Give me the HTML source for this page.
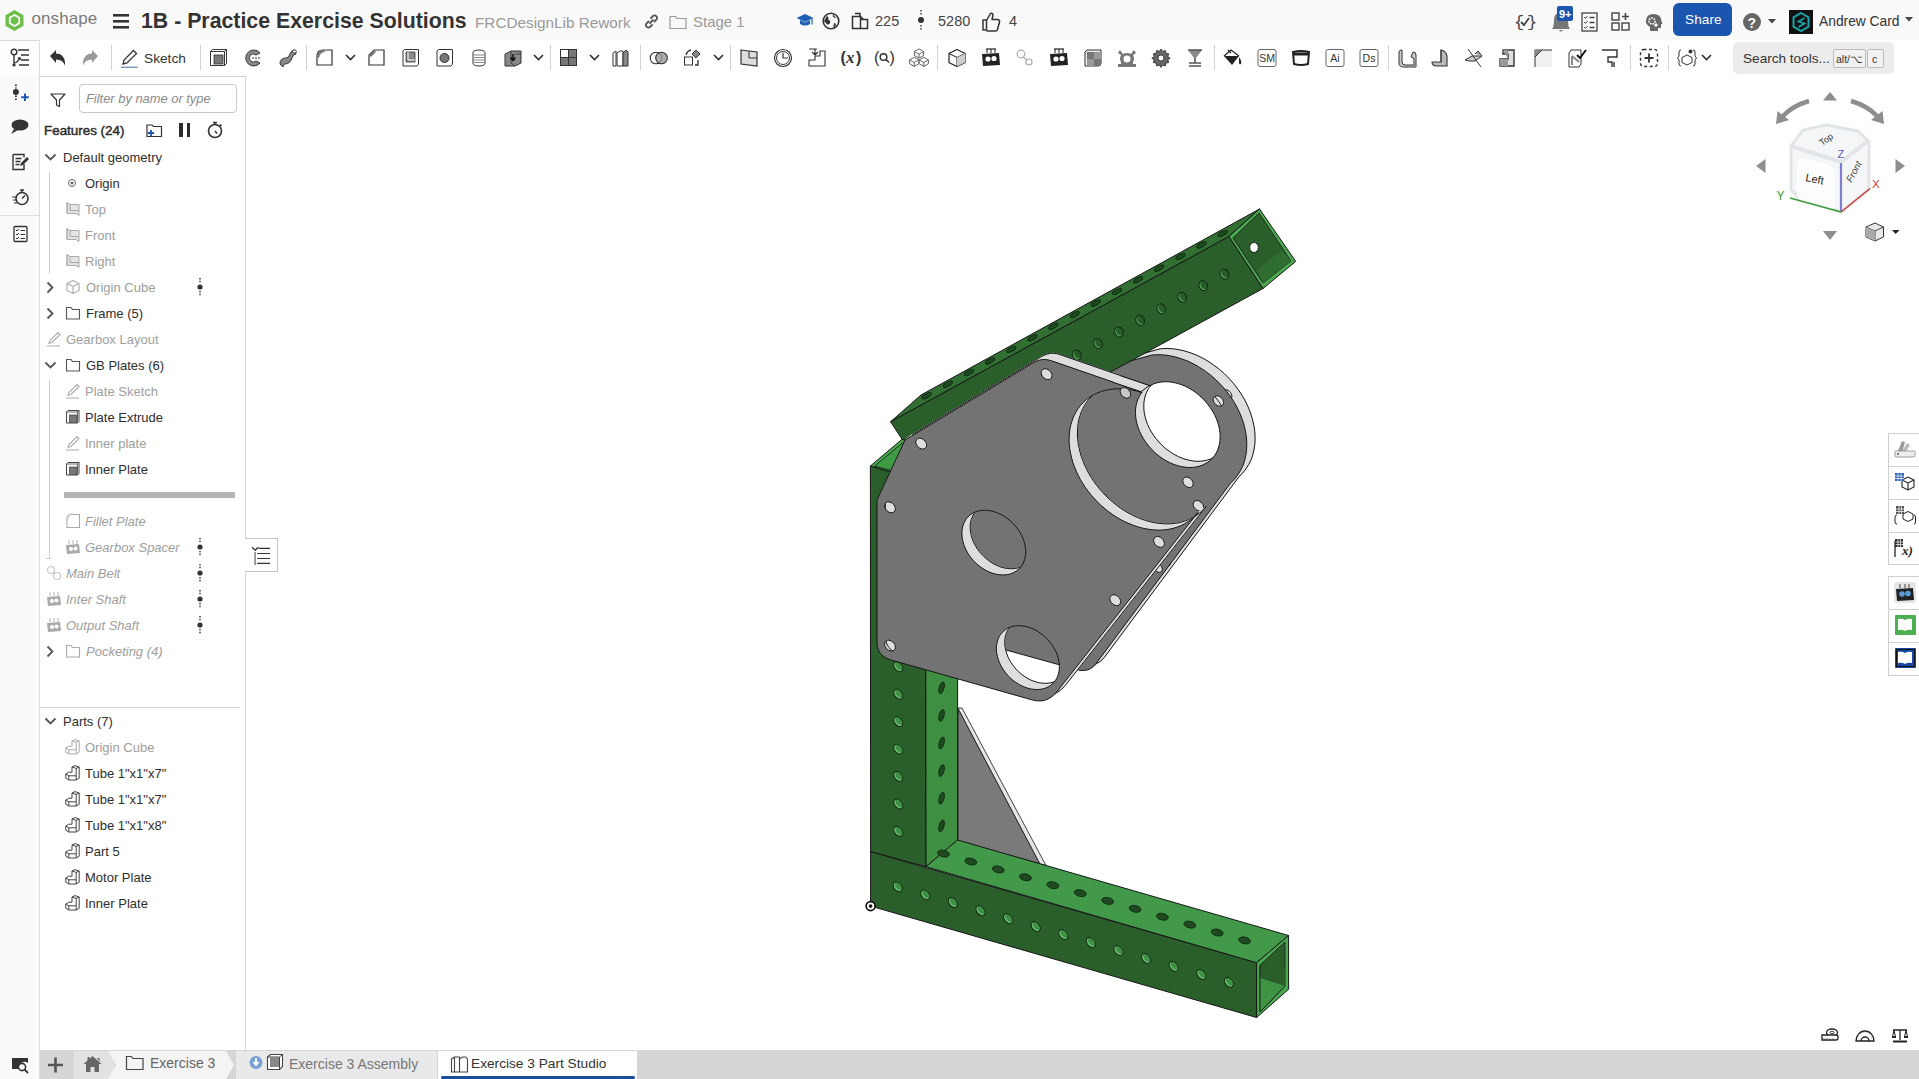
<!DOCTYPE html>
<html><head><meta charset="utf-8">
<style>
*{box-sizing:border-box;margin:0;padding:0}
html,body{width:1919px;height:1079px;overflow:hidden;background:#fff;font-family:"Liberation Sans",sans-serif;color:#333}
.abs{position:absolute}
#topbar{position:absolute;left:0;top:0;width:1919px;height:40px;background:#f9f9f9}
#toolbar{position:absolute;left:40px;top:40px;width:1879px;height:36px;background:#fff}
#leftstrip{position:absolute;left:0;top:40px;width:40px;height:1039px;background:#fafafa;border-right:1px solid #dcdcdc}
#panel{position:absolute;left:40px;top:76px;width:206px;height:974px;background:#fff;border-right:1px solid #d8d8d8}
#bottombar{position:absolute;left:40px;top:1050px;width:1879px;height:29px;background:#d6d6d6}
.t{position:absolute;white-space:nowrap}
.row{position:absolute;font-size:13px;white-space:nowrap;line-height:16px}
.g{color:#9a9a9a}
.it{font-style:italic}
svg{position:absolute;overflow:visible}
</style></head>
<body>
<div id="topbar"></div>
<div id="leftstrip"></div>
<div id="toolbar"></div>
<div id="panel"></div>
<div id="bottombar"></div>
<svg width="1919" height="1079" style="left:0;top:0" viewBox="0 0 1919 1079">
<circle cx="0" cy="0" r="33" transform="matrix(1.03,0.297,0,1,999,539)" fill="#717171"/><path d="M1160.2,348.8 L1166.0,348.5 L1171.9,348.7 L1177.9,349.5 L1184.0,350.8 L1190.1,352.7 L1196.2,355.0 L1202.2,357.9 L1208.0,361.2 L1213.7,365.0 L1219.2,369.2 L1224.4,373.7 L1229.3,378.7 L1233.9,383.9 L1238.1,389.4 L1241.9,395.1 L1245.3,401.0 L1248.2,407.1 L1250.6,413.2 L1252.5,419.4 L1253.9,425.6 L1254.8,431.7 L1255.1,437.7 L1254.9,443.5 L1254.1,449.2 L1252.9,454.6 L1251.1,459.8 L1248.7,464.6 L1245.9,469.0 L1242.7,473.1 L1239.0,476.7 L1104.5,657.2 L1102.0,660.0 L1099.2,662.2 L1096.2,663.6 L1093.0,664.3 L1089.5,664.3 L1085.7,663.6 L948.3,625.5 L948.3,433.8 L1088.3,368.8ZM1228.4,430.6 L1228.3,434.1 L1227.8,437.6 L1227.0,440.8 L1225.9,443.9 L1224.5,446.8 L1222.8,449.5 L1220.8,452.0 L1218.5,454.2 L1216.0,456.1 L1213.3,457.7 L1210.4,459.1 L1207.3,460.1 L1204.0,460.8 L1200.6,461.2 L1197.1,461.3 L1193.5,461.0 L1189.8,460.4 L1186.1,459.5 L1182.4,458.3 L1178.7,456.8 L1175.1,454.9 L1171.6,452.8 L1168.2,450.5 L1164.9,447.9 L1161.8,445.1 L1158.9,442.0 L1156.2,438.8 L1153.7,435.5 L1151.4,432.0 L1149.4,428.4 L1147.7,424.7 L1146.3,421.0 L1145.2,417.2 L1144.4,413.5 L1143.9,409.8 L1143.8,406.2 L1143.9,402.7 L1144.4,399.2 L1145.2,396.0 L1146.3,392.9 L1147.7,390.0 L1149.4,387.3 L1151.4,384.8 L1153.7,382.6 L1156.2,380.7 L1158.9,379.1 L1161.8,377.7 L1164.9,376.7 L1168.2,376.0 L1171.6,375.6 L1175.1,375.5 L1178.7,375.8 L1182.4,376.4 L1186.1,377.3 L1189.8,378.5 L1193.5,380.0 L1197.1,381.9 L1200.6,384.0 L1204.0,386.3 L1207.3,388.9 L1210.4,391.7 L1213.3,394.8 L1216.0,398.0 L1218.5,401.3 L1220.8,404.8 L1222.8,408.4 L1224.5,412.1 L1225.9,415.8 L1227.0,419.6 L1227.8,423.3 L1228.3,427.0 L1228.4,430.6ZM1231.9,396.3 L1231.7,397.5 L1231.2,398.6 L1230.3,399.4 L1229.3,399.9 L1228.0,400.0 L1226.7,399.8 L1225.4,399.2 L1224.1,398.4 L1223.1,397.3 L1222.2,396.0 L1221.7,394.7 L1221.5,393.3 L1221.7,392.1 L1222.2,391.0 L1223.1,390.2 L1224.1,389.7 L1225.4,389.6 L1226.7,389.8 L1228.0,390.4 L1229.3,391.2 L1230.3,392.3 L1231.2,393.6 L1231.7,394.9 L1231.9,396.3ZM1201.5,477.6 L1201.3,478.8 L1200.8,479.9 L1199.9,480.7 L1198.9,481.2 L1197.6,481.3 L1196.3,481.1 L1195.0,480.5 L1193.7,479.7 L1192.7,478.6 L1191.8,477.3 L1191.3,476.0 L1191.1,474.6 L1191.3,473.4 L1191.8,472.3 L1192.7,471.5 L1193.7,471.0 L1195.0,470.9 L1196.3,471.1 L1197.6,471.7 L1198.9,472.5 L1199.9,473.6 L1200.8,474.9 L1201.3,476.2 L1201.5,477.6ZM1211.9,501.1 L1211.7,502.3 L1211.2,503.4 L1210.3,504.2 L1209.3,504.7 L1208.0,504.8 L1206.7,504.6 L1205.4,504.0 L1204.1,503.2 L1203.1,502.1 L1202.2,500.8 L1201.7,499.5 L1201.5,498.1 L1201.7,496.9 L1202.2,495.8 L1203.1,495.0 L1204.1,494.5 L1205.4,494.4 L1206.7,494.6 L1208.0,495.2 L1209.3,496.0 L1210.3,497.1 L1211.2,498.4 L1211.7,499.7 L1211.9,501.1ZM1170.6,563.0 L1170.5,564.1 L1170.0,565.0 L1169.4,565.7 L1168.5,566.1 L1167.4,566.2 L1166.3,566.0 L1165.2,565.5 L1164.1,564.8 L1163.2,563.9 L1162.6,562.8 L1162.1,561.7 L1162.0,560.6 L1162.1,559.5 L1162.6,558.6 L1163.2,557.9 L1164.1,557.5 L1165.2,557.4 L1166.3,557.6 L1167.4,558.1 L1168.5,558.8 L1169.4,559.7 L1170.0,560.8 L1170.5,561.9 L1170.6,563.0Z" fill="#dedede" stroke="#dedede" stroke-width="0.9" fill-rule="evenodd"/>
<path d="M1159.2,349.6 L1165.0,349.3 L1170.9,349.5 L1176.9,350.3 L1183.0,351.6 L1189.1,353.4 L1195.1,355.8 L1201.1,358.7 L1207.0,362.0 L1212.7,365.7 L1218.2,369.9 L1223.4,374.5 L1228.3,379.4 L1232.9,384.7 L1237.1,390.2 L1240.9,395.9 L1244.3,401.8 L1247.2,407.8 L1249.6,414.0 L1251.5,420.2 L1252.9,426.3 L1253.7,432.4 L1254.1,438.4 L1253.9,444.3 L1253.1,450.0 L1251.8,455.4 L1250.0,460.5 L1247.7,465.3 L1244.9,469.8 L1241.6,473.9 L1237.9,477.5 L1103.4,658.0 L1100.9,660.8 L1098.2,662.9 L1095.2,664.4 L1091.9,665.1 L1088.4,665.1 L1084.7,664.4 L947.3,626.3 L947.3,434.6 L1087.3,369.6ZM1227.4,431.4 L1227.2,434.9 L1226.8,438.3 L1226.0,441.6 L1224.8,444.7 L1223.4,447.6 L1221.7,450.3 L1219.7,452.7 L1217.5,454.9 L1215.0,456.9 L1212.3,458.5 L1209.3,459.8 L1206.2,460.9 L1203.0,461.6 L1199.5,462.0 L1196.0,462.0 L1192.4,461.8 L1188.8,461.2 L1185.1,460.3 L1181.4,459.1 L1177.7,457.5 L1174.1,455.7 L1170.6,453.6 L1167.2,451.3 L1163.9,448.7 L1160.8,445.8 L1157.9,442.8 L1155.1,439.6 L1152.6,436.2 L1150.4,432.7 L1148.4,429.2 L1146.7,425.5 L1145.3,421.8 L1144.2,418.0 L1143.4,414.3 L1142.9,410.6 L1142.7,407.0 L1142.9,403.4 L1143.4,400.0 L1144.2,396.7 L1145.3,393.6 L1146.7,390.7 L1148.4,388.1 L1150.4,385.6 L1152.6,383.4 L1155.1,381.5 L1157.9,379.8 L1160.8,378.5 L1163.9,377.5 L1167.2,376.8 L1170.6,376.4 L1174.1,376.3 L1177.7,376.6 L1181.4,377.2 L1185.1,378.1 L1188.8,379.3 L1192.4,380.8 L1196.0,382.6 L1199.5,384.7 L1203.0,387.1 L1206.2,389.7 L1209.3,392.5 L1212.3,395.5 L1215.0,398.7 L1217.5,402.1 L1219.7,405.6 L1221.7,409.2 L1223.4,412.9 L1224.8,416.6 L1226.0,420.3 L1226.8,424.1 L1227.2,427.8 L1227.4,431.4ZM1230.8,397.1 L1230.6,398.3 L1230.1,399.4 L1229.3,400.2 L1228.2,400.6 L1227.0,400.8 L1225.7,400.6 L1224.3,400.0 L1223.1,399.2 L1222.0,398.1 L1221.2,396.8 L1220.7,395.4 L1220.5,394.1 L1220.7,392.8 L1221.2,391.8 L1222.0,391.0 L1223.1,390.5 L1224.3,390.4 L1225.7,390.6 L1227.0,391.1 L1228.2,392.0 L1229.3,393.1 L1230.1,394.4 L1230.6,395.7 L1230.8,397.1ZM1200.4,478.4 L1200.2,479.6 L1199.7,480.7 L1198.9,481.5 L1197.8,481.9 L1196.6,482.1 L1195.3,481.9 L1193.9,481.3 L1192.7,480.5 L1191.6,479.4 L1190.8,478.1 L1190.3,476.7 L1190.1,475.4 L1190.3,474.1 L1190.8,473.1 L1191.6,472.3 L1192.7,471.8 L1193.9,471.7 L1195.3,471.9 L1196.6,472.4 L1197.8,473.3 L1198.9,474.4 L1199.7,475.7 L1200.2,477.0 L1200.4,478.4ZM1210.8,501.9 L1210.6,503.1 L1210.1,504.2 L1209.3,505.0 L1208.2,505.4 L1207.0,505.6 L1205.7,505.4 L1204.3,504.8 L1203.1,504.0 L1202.0,502.9 L1201.2,501.6 L1200.7,500.2 L1200.5,498.9 L1200.7,497.6 L1201.2,496.6 L1202.0,495.8 L1203.1,495.3 L1204.3,495.2 L1205.7,495.4 L1207.0,495.9 L1208.2,496.8 L1209.3,497.9 L1210.1,499.2 L1210.6,500.5 L1210.8,501.9ZM1169.6,563.8 L1169.4,564.9 L1169.0,565.8 L1168.3,566.4 L1167.4,566.8 L1166.4,567.0 L1165.3,566.8 L1164.1,566.3 L1163.1,565.6 L1162.2,564.7 L1161.5,563.6 L1161.1,562.5 L1160.9,561.3 L1161.1,560.3 L1161.5,559.4 L1162.2,558.7 L1163.1,558.3 L1164.1,558.2 L1165.3,558.4 L1166.4,558.8 L1167.4,559.6 L1168.3,560.5 L1169.0,561.6 L1169.4,562.7 L1169.6,563.8Z" fill="#dedede" stroke="#dedede" stroke-width="0.9" fill-rule="evenodd"/>
<path d="M1158.2,350.4 L1163.9,350.1 L1169.8,350.3 L1175.9,351.1 L1181.9,352.4 L1188.0,354.2 L1194.1,356.6 L1200.1,359.4 L1206.0,362.7 L1211.7,366.5 L1217.1,370.7 L1222.3,375.3 L1227.3,380.2 L1231.8,385.4 L1236.1,390.9 L1239.9,396.7 L1243.2,402.6 L1246.1,408.6 L1248.5,414.8 L1250.4,420.9 L1251.8,427.1 L1252.7,433.2 L1253.0,439.2 L1252.8,445.1 L1252.1,450.7 L1250.8,456.2 L1249.0,461.3 L1246.7,466.1 L1243.9,470.6 L1240.6,474.6 L1236.9,478.3 L1102.4,658.7 L1099.9,661.6 L1097.1,663.7 L1094.1,665.1 L1090.9,665.9 L1087.4,665.9 L1083.7,665.1 L946.2,627.1 L946.2,435.4 L1086.2,370.4ZM1226.4,432.2 L1226.2,435.7 L1225.7,439.1 L1224.9,442.4 L1223.8,445.5 L1222.4,448.4 L1220.7,451.1 L1218.7,453.5 L1216.5,455.7 L1214.0,457.6 L1211.2,459.3 L1208.3,460.6 L1205.2,461.6 L1201.9,462.4 L1198.5,462.7 L1195.0,462.8 L1191.4,462.5 L1187.7,462.0 L1184.0,461.1 L1180.3,459.8 L1176.7,458.3 L1173.1,456.5 L1169.5,454.4 L1166.1,452.0 L1162.9,449.4 L1159.7,446.6 L1156.8,443.6 L1154.1,440.4 L1151.6,437.0 L1149.3,433.5 L1147.4,429.9 L1145.7,426.3 L1144.2,422.5 L1143.1,418.8 L1142.3,415.1 L1141.9,411.4 L1141.7,407.7 L1141.9,404.2 L1142.3,400.8 L1143.1,397.5 L1144.2,394.4 L1145.7,391.5 L1147.4,388.8 L1149.3,386.4 L1151.6,384.2 L1154.1,382.3 L1156.8,380.6 L1159.7,379.3 L1162.9,378.3 L1166.1,377.5 L1169.5,377.2 L1173.1,377.1 L1176.7,377.4 L1180.3,377.9 L1184.0,378.9 L1187.7,380.1 L1191.4,381.6 L1195.0,383.4 L1198.5,385.5 L1201.9,387.9 L1205.2,390.5 L1208.3,393.3 L1211.2,396.3 L1214.0,399.5 L1216.5,402.9 L1218.7,406.4 L1220.7,410.0 L1222.4,413.6 L1223.8,417.4 L1224.9,421.1 L1225.7,424.8 L1226.2,428.5 L1226.4,432.2ZM1229.8,397.8 L1229.6,399.1 L1229.1,400.1 L1228.3,400.9 L1227.2,401.4 L1226.0,401.6 L1224.6,401.4 L1223.3,400.8 L1222.0,399.9 L1221.0,398.8 L1220.2,397.6 L1219.7,396.2 L1219.5,394.9 L1219.7,393.6 L1220.2,392.6 L1221.0,391.8 L1222.0,391.3 L1223.3,391.1 L1224.6,391.4 L1226.0,391.9 L1227.2,392.8 L1228.3,393.9 L1229.1,395.1 L1229.6,396.5 L1229.8,397.8ZM1199.4,479.1 L1199.2,480.4 L1198.7,481.4 L1197.9,482.2 L1196.8,482.7 L1195.6,482.9 L1194.2,482.7 L1192.9,482.1 L1191.6,481.2 L1190.6,480.1 L1189.8,478.9 L1189.3,477.5 L1189.1,476.2 L1189.3,474.9 L1189.8,473.9 L1190.6,473.1 L1191.6,472.6 L1192.9,472.4 L1194.2,472.7 L1195.6,473.2 L1196.8,474.1 L1197.9,475.2 L1198.7,476.4 L1199.2,477.8 L1199.4,479.1ZM1209.8,502.6 L1209.6,503.9 L1209.1,504.9 L1208.3,505.7 L1207.2,506.2 L1206.0,506.4 L1204.6,506.2 L1203.3,505.6 L1202.0,504.7 L1201.0,503.6 L1200.2,502.4 L1199.7,501.0 L1199.5,499.7 L1199.7,498.4 L1200.2,497.4 L1201.0,496.6 L1202.0,496.1 L1203.3,495.9 L1204.6,496.2 L1206.0,496.7 L1207.2,497.6 L1208.3,498.7 L1209.1,499.9 L1209.6,501.3 L1209.8,502.6ZM1168.6,564.6 L1168.4,565.6 L1168.0,566.5 L1167.3,567.2 L1166.4,567.6 L1165.3,567.7 L1164.2,567.6 L1163.1,567.1 L1162.1,566.4 L1161.2,565.4 L1160.5,564.4 L1160.0,563.2 L1159.9,562.1 L1160.0,561.1 L1160.5,560.2 L1161.2,559.5 L1162.1,559.1 L1163.1,559.0 L1164.2,559.1 L1165.3,559.6 L1166.4,560.3 L1167.3,561.3 L1168.0,562.3 L1168.4,563.5 L1168.6,564.6Z" fill="#dedede" stroke="#dedede" stroke-width="0.9" fill-rule="evenodd"/>
<path d="M1157.1,351.1 L1162.9,350.8 L1168.8,351.1 L1174.8,351.8 L1180.9,353.2 L1187.0,355.0 L1193.1,357.4 L1199.1,360.2 L1204.9,363.5 L1210.6,367.3 L1216.1,371.5 L1221.3,376.1 L1226.2,381.0 L1230.8,386.2 L1235.0,391.7 L1238.8,397.4 L1242.2,403.4 L1245.1,409.4 L1247.5,415.5 L1249.4,421.7 L1250.8,427.9 L1251.7,434.0 L1252.0,440.0 L1251.8,445.9 L1251.0,451.5 L1249.7,456.9 L1247.9,462.1 L1245.6,466.9 L1242.8,471.3 L1239.6,475.4 L1235.9,479.0 L1101.4,659.5 L1098.8,662.4 L1096.1,664.5 L1093.1,665.9 L1089.8,666.6 L1086.4,666.6 L1082.6,665.9 L945.2,627.8 L945.2,436.1 L1085.2,371.1ZM1225.3,432.9 L1225.2,436.5 L1224.7,439.9 L1223.9,443.2 L1222.8,446.3 L1221.4,449.2 L1219.6,451.8 L1217.7,454.3 L1215.4,456.5 L1212.9,458.4 L1210.2,460.1 L1207.3,461.4 L1204.2,462.4 L1200.9,463.1 L1197.5,463.5 L1193.9,463.6 L1190.3,463.3 L1186.7,462.7 L1183.0,461.8 L1179.3,460.6 L1175.6,459.1 L1172.0,457.3 L1168.5,455.2 L1165.1,452.8 L1161.8,450.2 L1158.7,447.4 L1155.8,444.4 L1153.1,441.2 L1150.6,437.8 L1148.3,434.3 L1146.3,430.7 L1144.6,427.0 L1143.2,423.3 L1142.1,419.6 L1141.3,415.8 L1140.8,412.1 L1140.7,408.5 L1140.8,405.0 L1141.3,401.6 L1142.1,398.3 L1143.2,395.2 L1144.6,392.3 L1146.3,389.6 L1148.3,387.2 L1150.6,385.0 L1153.1,383.0 L1155.8,381.4 L1158.7,380.1 L1161.8,379.0 L1165.1,378.3 L1168.5,377.9 L1172.0,377.9 L1175.6,378.1 L1179.3,378.7 L1183.0,379.6 L1186.7,380.8 L1190.3,382.4 L1193.9,384.2 L1197.5,386.3 L1200.9,388.6 L1204.2,391.2 L1207.3,394.1 L1210.2,397.1 L1212.9,400.3 L1215.4,403.7 L1217.7,407.2 L1219.6,410.7 L1221.4,414.4 L1222.8,418.1 L1223.9,421.9 L1224.7,425.6 L1225.2,429.3 L1225.3,432.9ZM1228.7,398.6 L1228.6,399.9 L1228.0,400.9 L1227.2,401.7 L1226.2,402.2 L1224.9,402.3 L1223.6,402.1 L1222.3,401.6 L1221.0,400.7 L1219.9,399.6 L1219.1,398.3 L1218.6,397.0 L1218.4,395.6 L1218.6,394.4 L1219.1,393.3 L1219.9,392.5 L1221.0,392.1 L1222.3,391.9 L1223.6,392.1 L1224.9,392.7 L1226.2,393.5 L1227.2,394.6 L1228.0,395.9 L1228.6,397.3 L1228.7,398.6ZM1198.3,479.9 L1198.2,481.2 L1197.6,482.2 L1196.8,483.0 L1195.8,483.5 L1194.5,483.6 L1193.2,483.4 L1191.9,482.9 L1190.6,482.0 L1189.5,480.9 L1188.7,479.6 L1188.2,478.3 L1188.0,476.9 L1188.2,475.7 L1188.7,474.6 L1189.5,473.8 L1190.6,473.4 L1191.9,473.2 L1193.2,473.4 L1194.5,474.0 L1195.8,474.8 L1196.8,475.9 L1197.6,477.2 L1198.2,478.6 L1198.3,479.9ZM1208.7,503.4 L1208.6,504.7 L1208.0,505.7 L1207.2,506.5 L1206.2,507.0 L1204.9,507.1 L1203.6,506.9 L1202.3,506.4 L1201.0,505.5 L1199.9,504.4 L1199.1,503.1 L1198.6,501.8 L1198.4,500.4 L1198.6,499.2 L1199.1,498.1 L1199.9,497.3 L1201.0,496.9 L1202.3,496.7 L1203.6,496.9 L1204.9,497.5 L1206.2,498.3 L1207.2,499.4 L1208.0,500.7 L1208.6,502.1 L1208.7,503.4ZM1167.5,565.4 L1167.4,566.4 L1166.9,567.3 L1166.2,568.0 L1165.4,568.4 L1164.3,568.5 L1163.2,568.3 L1162.1,567.9 L1161.0,567.1 L1160.1,566.2 L1159.4,565.1 L1159.0,564.0 L1158.9,562.9 L1159.0,561.8 L1159.4,560.9 L1160.1,560.3 L1161.0,559.9 L1162.1,559.7 L1163.2,559.9 L1164.3,560.4 L1165.4,561.1 L1166.2,562.0 L1166.9,563.1 L1167.4,564.2 L1167.5,565.4Z" fill="#dedede" stroke="#dedede" stroke-width="0.9" fill-rule="evenodd"/>
<path d="M1156.1,351.9 L1161.9,351.6 L1167.8,351.8 L1173.8,352.6 L1179.9,353.9 L1186.0,355.8 L1192.0,358.1 L1198.0,361.0 L1203.9,364.3 L1209.6,368.1 L1215.1,372.3 L1220.3,376.8 L1225.2,381.8 L1229.8,387.0 L1234.0,392.5 L1237.8,398.2 L1241.1,404.1 L1244.0,410.2 L1246.5,416.3 L1248.4,422.5 L1249.8,428.7 L1250.6,434.8 L1251.0,440.8 L1250.7,446.6 L1250.0,452.3 L1248.7,457.7 L1246.9,462.9 L1244.6,467.7 L1241.8,472.1 L1238.5,476.2 L1234.8,479.8 L1100.3,660.3 L1097.8,663.1 L1095.1,665.3 L1092.1,666.7 L1088.8,667.4 L1085.3,667.4 L1081.6,666.7 L944.1,628.6 L944.1,436.9 L1084.2,371.9ZM1224.3,433.7 L1224.1,437.2 L1223.6,440.7 L1222.8,443.9 L1221.7,447.0 L1220.3,449.9 L1218.6,452.6 L1216.6,455.1 L1214.4,457.3 L1211.9,459.2 L1209.2,460.8 L1206.2,462.2 L1203.1,463.2 L1199.8,463.9 L1196.4,464.3 L1192.9,464.4 L1189.3,464.1 L1185.6,463.5 L1182.0,462.6 L1178.3,461.4 L1174.6,459.9 L1171.0,458.0 L1167.5,455.9 L1164.1,453.6 L1160.8,451.0 L1157.7,448.2 L1154.7,445.1 L1152.0,441.9 L1149.5,438.6 L1147.3,435.1 L1145.3,431.5 L1143.6,427.8 L1142.2,424.1 L1141.1,420.3 L1140.3,416.6 L1139.8,412.9 L1139.6,409.3 L1139.8,405.8 L1140.3,402.3 L1141.1,399.1 L1142.2,396.0 L1143.6,393.1 L1145.3,390.4 L1147.3,387.9 L1149.5,385.7 L1152.0,383.8 L1154.7,382.2 L1157.7,380.8 L1160.8,379.8 L1164.1,379.1 L1167.5,378.7 L1171.0,378.6 L1174.6,378.9 L1178.3,379.5 L1182.0,380.4 L1185.6,381.6 L1189.3,383.1 L1192.9,385.0 L1196.4,387.1 L1199.8,389.4 L1203.1,392.0 L1206.2,394.8 L1209.2,397.9 L1211.9,401.1 L1214.4,404.4 L1216.6,407.9 L1218.6,411.5 L1220.3,415.2 L1221.7,418.9 L1222.8,422.7 L1223.6,426.4 L1224.1,430.1 L1224.3,433.7ZM1227.7,399.4 L1227.5,400.6 L1227.0,401.7 L1226.2,402.5 L1225.1,403.0 L1223.9,403.1 L1222.6,402.9 L1221.2,402.3 L1220.0,401.5 L1218.9,400.4 L1218.1,399.1 L1217.6,397.8 L1217.4,396.4 L1217.6,395.2 L1218.1,394.1 L1218.9,393.3 L1220.0,392.8 L1221.2,392.7 L1222.6,392.9 L1223.9,393.5 L1225.1,394.3 L1226.2,395.4 L1227.0,396.7 L1227.5,398.0 L1227.7,399.4ZM1197.3,480.7 L1197.1,481.9 L1196.6,483.0 L1195.8,483.8 L1194.7,484.3 L1193.5,484.4 L1192.2,484.2 L1190.8,483.6 L1189.6,482.8 L1188.5,481.7 L1187.7,480.4 L1187.2,479.1 L1187.0,477.7 L1187.2,476.5 L1187.7,475.4 L1188.5,474.6 L1189.6,474.1 L1190.8,474.0 L1192.2,474.2 L1193.5,474.8 L1194.7,475.6 L1195.8,476.7 L1196.6,478.0 L1197.1,479.3 L1197.3,480.7ZM1207.7,504.2 L1207.5,505.4 L1207.0,506.5 L1206.2,507.3 L1205.1,507.8 L1203.9,507.9 L1202.6,507.7 L1201.2,507.1 L1200.0,506.3 L1198.9,505.2 L1198.1,503.9 L1197.6,502.6 L1197.4,501.2 L1197.6,500.0 L1198.1,498.9 L1198.9,498.1 L1200.0,497.6 L1201.2,497.5 L1202.6,497.7 L1203.9,498.3 L1205.1,499.1 L1206.2,500.2 L1207.0,501.5 L1207.5,502.8 L1207.7,504.2ZM1166.5,566.1 L1166.3,567.2 L1165.9,568.1 L1165.2,568.8 L1164.3,569.2 L1163.3,569.3 L1162.2,569.1 L1161.0,568.6 L1160.0,567.9 L1159.1,567.0 L1158.4,565.9 L1158.0,564.8 L1157.8,563.7 L1158.0,562.6 L1158.4,561.7 L1159.1,561.0 L1160.0,560.6 L1161.0,560.5 L1162.2,560.7 L1163.3,561.2 L1164.3,561.9 L1165.2,562.8 L1165.9,563.9 L1166.3,565.0 L1166.5,566.1Z" fill="#dedede" stroke="#dedede" stroke-width="0.9" fill-rule="evenodd"/>
<path d="M1155.1,352.7 L1160.8,352.4 L1166.7,352.6 L1172.7,353.4 L1178.8,354.7 L1184.9,356.5 L1191.0,358.9 L1197.0,361.8 L1202.8,365.1 L1208.5,368.8 L1214.0,373.0 L1219.2,377.6 L1224.2,382.5 L1228.7,387.8 L1232.9,393.3 L1236.7,399.0 L1240.1,404.9 L1243.0,410.9 L1245.4,417.1 L1247.3,423.3 L1248.7,429.4 L1249.6,435.5 L1249.9,441.5 L1249.7,447.4 L1249.0,453.1 L1247.7,458.5 L1245.9,463.6 L1243.6,468.4 L1240.8,472.9 L1237.5,477.0 L1233.8,480.6 L1099.3,661.1 L1096.8,663.9 L1094.0,666.0 L1091.0,667.5 L1087.8,668.2 L1084.3,668.2 L1080.5,667.5 L943.1,629.4 L943.1,437.7 L1083.1,372.7ZM1223.2,434.5 L1223.1,438.0 L1222.6,441.4 L1221.8,444.7 L1220.7,447.8 L1219.3,450.7 L1217.6,453.4 L1215.6,455.8 L1213.3,458.0 L1210.8,460.0 L1208.1,461.6 L1205.2,462.9 L1202.1,464.0 L1198.8,464.7 L1195.4,465.1 L1191.9,465.1 L1188.3,464.9 L1184.6,464.3 L1180.9,463.4 L1177.2,462.2 L1173.6,460.6 L1170.0,458.8 L1166.4,456.7 L1163.0,454.4 L1159.7,451.8 L1156.6,448.9 L1153.7,445.9 L1151.0,442.7 L1148.5,439.3 L1146.2,435.8 L1144.3,432.3 L1142.5,428.6 L1141.1,424.9 L1140.0,421.1 L1139.2,417.4 L1138.7,413.7 L1138.6,410.1 L1138.7,406.5 L1139.2,403.1 L1140.0,399.8 L1141.1,396.7 L1142.5,393.8 L1144.3,391.2 L1146.2,388.7 L1148.5,386.5 L1151.0,384.6 L1153.7,382.9 L1156.6,381.6 L1159.7,380.6 L1163.0,379.9 L1166.4,379.5 L1170.0,379.4 L1173.6,379.7 L1177.2,380.3 L1180.9,381.2 L1184.6,382.4 L1188.3,383.9 L1191.9,385.7 L1195.4,387.8 L1198.8,390.2 L1202.1,392.8 L1205.2,395.6 L1208.1,398.6 L1210.8,401.8 L1213.3,405.2 L1215.6,408.7 L1217.6,412.3 L1219.3,416.0 L1220.7,419.7 L1221.8,423.4 L1222.6,427.2 L1223.1,430.9 L1223.2,434.5ZM1226.7,400.2 L1226.5,401.4 L1226.0,402.5 L1225.2,403.3 L1224.1,403.7 L1222.8,403.9 L1221.5,403.7 L1220.2,403.1 L1218.9,402.3 L1217.9,401.2 L1217.1,399.9 L1216.5,398.5 L1216.4,397.2 L1216.5,395.9 L1217.1,394.9 L1217.9,394.1 L1218.9,393.6 L1220.2,393.5 L1221.5,393.7 L1222.8,394.2 L1224.1,395.1 L1225.2,396.2 L1226.0,397.5 L1226.5,398.8 L1226.7,400.2ZM1196.3,481.5 L1196.1,482.7 L1195.6,483.8 L1194.8,484.6 L1193.7,485.0 L1192.4,485.2 L1191.1,485.0 L1189.8,484.4 L1188.5,483.6 L1187.5,482.5 L1186.7,481.2 L1186.1,479.8 L1186.0,478.5 L1186.1,477.2 L1186.7,476.2 L1187.5,475.4 L1188.5,474.9 L1189.8,474.8 L1191.1,475.0 L1192.4,475.5 L1193.7,476.4 L1194.8,477.5 L1195.6,478.8 L1196.1,480.1 L1196.3,481.5ZM1206.7,505.0 L1206.5,506.2 L1206.0,507.3 L1205.2,508.1 L1204.1,508.5 L1202.8,508.7 L1201.5,508.5 L1200.2,507.9 L1198.9,507.1 L1197.9,506.0 L1197.1,504.7 L1196.5,503.3 L1196.4,502.0 L1196.5,500.7 L1197.1,499.7 L1197.9,498.9 L1198.9,498.4 L1200.2,498.3 L1201.5,498.5 L1202.8,499.0 L1204.1,499.9 L1205.2,501.0 L1206.0,502.3 L1206.5,503.6 L1206.7,505.0ZM1165.4,566.9 L1165.3,568.0 L1164.9,568.9 L1164.2,569.5 L1163.3,569.9 L1162.2,570.1 L1161.1,569.9 L1160.0,569.4 L1158.9,568.7 L1158.1,567.8 L1157.4,566.7 L1156.9,565.6 L1156.8,564.4 L1156.9,563.4 L1157.4,562.5 L1158.1,561.8 L1158.9,561.4 L1160.0,561.3 L1161.1,561.5 L1162.2,561.9 L1163.3,562.7 L1164.2,563.6 L1164.9,564.7 L1165.3,565.8 L1165.4,566.9Z" fill="#dedede" stroke="#dedede" stroke-width="0.9" fill-rule="evenodd"/>
<path d="M1154.0,353.5 L1159.8,353.2 L1165.7,353.4 L1171.7,354.2 L1177.8,355.5 L1183.9,357.3 L1190.0,359.7 L1195.9,362.5 L1201.8,365.8 L1207.5,369.6 L1213.0,373.8 L1218.2,378.4 L1223.1,383.3 L1227.7,388.5 L1231.9,394.0 L1235.7,399.8 L1239.1,405.7 L1242.0,411.7 L1244.4,417.9 L1246.3,424.0 L1247.7,430.2 L1248.6,436.3 L1248.9,442.3 L1248.7,448.2 L1247.9,453.8 L1246.6,459.3 L1244.8,464.4 L1242.5,469.2 L1239.7,473.7 L1236.5,477.7 L1232.7,481.4 L1098.2,661.8 L1095.7,664.7 L1093.0,666.8 L1090.0,668.2 L1086.7,669.0 L1083.2,669.0 L1079.5,668.2 L942.1,630.2 L942.1,438.4 L1082.1,373.4ZM1222.2,435.3 L1222.0,438.8 L1221.6,442.2 L1220.8,445.5 L1219.7,448.6 L1218.2,451.5 L1216.5,454.2 L1214.6,456.6 L1212.3,458.8 L1209.8,460.7 L1207.1,462.4 L1204.2,463.7 L1201.0,464.7 L1197.8,465.5 L1194.4,465.8 L1190.8,465.9 L1187.2,465.6 L1183.6,465.1 L1179.9,464.2 L1176.2,462.9 L1172.5,461.4 L1168.9,459.6 L1165.4,457.5 L1162.0,455.1 L1158.7,452.5 L1155.6,449.7 L1152.7,446.7 L1149.9,443.5 L1147.4,440.1 L1145.2,436.6 L1143.2,433.0 L1141.5,429.4 L1140.1,425.6 L1139.0,421.9 L1138.2,418.2 L1137.7,414.5 L1137.5,410.8 L1137.7,407.3 L1138.2,403.9 L1139.0,400.6 L1140.1,397.5 L1141.5,394.6 L1143.2,391.9 L1145.2,389.5 L1147.4,387.3 L1149.9,385.4 L1152.7,383.7 L1155.6,382.4 L1158.7,381.4 L1162.0,380.6 L1165.4,380.3 L1168.9,380.2 L1172.5,380.5 L1176.2,381.0 L1179.9,381.9 L1183.6,383.2 L1187.2,384.7 L1190.8,386.5 L1194.4,388.6 L1197.8,391.0 L1201.0,393.6 L1204.2,396.4 L1207.1,399.4 L1209.8,402.6 L1212.3,406.0 L1214.6,409.5 L1216.5,413.1 L1218.2,416.7 L1219.7,420.5 L1220.8,424.2 L1221.6,427.9 L1222.0,431.6 L1222.2,435.3ZM1225.6,400.9 L1225.4,402.2 L1224.9,403.2 L1224.1,404.0 L1223.1,404.5 L1221.8,404.7 L1220.5,404.4 L1219.1,403.9 L1217.9,403.0 L1216.8,401.9 L1216.0,400.7 L1215.5,399.3 L1215.3,398.0 L1215.5,396.7 L1216.0,395.7 L1216.8,394.9 L1217.9,394.4 L1219.1,394.2 L1220.5,394.4 L1221.8,395.0 L1223.1,395.9 L1224.1,397.0 L1224.9,398.2 L1225.4,399.6 L1225.6,400.9ZM1195.2,482.2 L1195.0,483.5 L1194.5,484.5 L1193.7,485.3 L1192.7,485.8 L1191.4,486.0 L1190.1,485.8 L1188.7,485.2 L1187.5,484.3 L1186.4,483.2 L1185.6,482.0 L1185.1,480.6 L1184.9,479.3 L1185.1,478.0 L1185.6,477.0 L1186.4,476.2 L1187.5,475.7 L1188.7,475.5 L1190.1,475.8 L1191.4,476.3 L1192.7,477.2 L1193.7,478.3 L1194.5,479.5 L1195.0,480.9 L1195.2,482.2ZM1205.6,505.7 L1205.4,507.0 L1204.9,508.0 L1204.1,508.8 L1203.1,509.3 L1201.8,509.5 L1200.5,509.2 L1199.1,508.7 L1197.9,507.8 L1196.8,506.7 L1196.0,505.5 L1195.5,504.1 L1195.3,502.8 L1195.5,501.5 L1196.0,500.5 L1196.8,499.7 L1197.9,499.2 L1199.1,499.0 L1200.5,499.2 L1201.8,499.8 L1203.1,500.7 L1204.1,501.8 L1204.9,503.0 L1205.4,504.4 L1205.6,505.7ZM1164.4,567.7 L1164.3,568.7 L1163.8,569.6 L1163.1,570.3 L1162.2,570.7 L1161.2,570.8 L1160.1,570.7 L1159.0,570.2 L1157.9,569.5 L1157.0,568.5 L1156.3,567.5 L1155.9,566.3 L1155.7,565.2 L1155.9,564.2 L1156.3,563.3 L1157.0,562.6 L1157.9,562.2 L1159.0,562.1 L1160.1,562.2 L1161.2,562.7 L1162.2,563.4 L1163.1,564.4 L1163.8,565.4 L1164.3,566.6 L1164.4,567.7Z" fill="#dedede" stroke="#dedede" stroke-width="0.9" fill-rule="evenodd"/>
<path d="M1153.0,354.2 L1158.7,353.9 L1164.6,354.2 L1170.7,354.9 L1176.8,356.3 L1182.9,358.1 L1188.9,360.5 L1194.9,363.3 L1200.8,366.6 L1206.5,370.4 L1211.9,374.6 L1217.2,379.2 L1222.1,384.1 L1226.7,389.3 L1230.9,394.8 L1234.7,400.5 L1238.0,406.5 L1240.9,412.5 L1243.3,418.6 L1245.3,424.8 L1246.7,431.0 L1247.5,437.1 L1247.8,443.1 L1247.6,449.0 L1246.9,454.6 L1245.6,460.0 L1243.8,465.2 L1241.5,470.0 L1238.7,474.4 L1235.4,478.5 L1231.7,482.1 L1097.2,662.6 L1094.7,665.5 L1091.9,667.6 L1088.9,669.0 L1085.7,669.7 L1082.2,669.7 L1078.5,669.0 L941.0,630.9 L941.0,439.2 L1081.0,374.2ZM1221.2,436.0 L1221.0,439.6 L1220.5,443.0 L1219.7,446.3 L1218.6,449.4 L1217.2,452.3 L1215.5,454.9 L1213.5,457.4 L1211.3,459.6 L1208.8,461.5 L1206.0,463.2 L1203.1,464.5 L1200.0,465.5 L1196.7,466.2 L1193.3,466.6 L1189.8,466.7 L1186.2,466.4 L1182.5,465.8 L1178.8,464.9 L1175.1,463.7 L1171.5,462.2 L1167.9,460.4 L1164.4,458.3 L1160.9,455.9 L1157.7,453.3 L1154.6,450.5 L1151.6,447.5 L1148.9,444.3 L1146.4,440.9 L1144.2,437.4 L1142.2,433.8 L1140.5,430.1 L1139.1,426.4 L1137.9,422.7 L1137.1,418.9 L1136.7,415.2 L1136.5,411.6 L1136.7,408.1 L1137.1,404.7 L1137.9,401.4 L1139.1,398.3 L1140.5,395.4 L1142.2,392.7 L1144.2,390.3 L1146.4,388.1 L1148.9,386.1 L1151.6,384.5 L1154.6,383.2 L1157.7,382.1 L1160.9,381.4 L1164.4,381.0 L1167.9,381.0 L1171.5,381.2 L1175.1,381.8 L1178.8,382.7 L1182.5,383.9 L1186.2,385.5 L1189.8,387.3 L1193.3,389.4 L1196.7,391.7 L1200.0,394.3 L1203.1,397.2 L1206.0,400.2 L1208.8,403.4 L1211.3,406.8 L1213.5,410.3 L1215.5,413.8 L1217.2,417.5 L1218.6,421.2 L1219.7,425.0 L1220.5,428.7 L1221.0,432.4 L1221.2,436.0ZM1224.6,401.7 L1224.4,403.0 L1223.9,404.0 L1223.1,404.8 L1222.0,405.3 L1220.8,405.4 L1219.4,405.2 L1218.1,404.7 L1216.9,403.8 L1215.8,402.7 L1215.0,401.4 L1214.5,400.1 L1214.3,398.7 L1214.5,397.5 L1215.0,396.4 L1215.8,395.6 L1216.9,395.2 L1218.1,395.0 L1219.4,395.2 L1220.8,395.8 L1222.0,396.6 L1223.1,397.7 L1223.9,399.0 L1224.4,400.4 L1224.6,401.7ZM1194.2,483.0 L1194.0,484.3 L1193.5,485.3 L1192.7,486.1 L1191.6,486.6 L1190.4,486.7 L1189.0,486.5 L1187.7,486.0 L1186.5,485.1 L1185.4,484.0 L1184.6,482.7 L1184.1,481.4 L1183.9,480.0 L1184.1,478.8 L1184.6,477.7 L1185.4,476.9 L1186.5,476.5 L1187.7,476.3 L1189.0,476.5 L1190.4,477.1 L1191.6,477.9 L1192.7,479.0 L1193.5,480.3 L1194.0,481.7 L1194.2,483.0ZM1204.6,506.5 L1204.4,507.8 L1203.9,508.8 L1203.1,509.6 L1202.0,510.1 L1200.8,510.2 L1199.4,510.0 L1198.1,509.5 L1196.9,508.6 L1195.8,507.5 L1195.0,506.2 L1194.5,504.9 L1194.3,503.5 L1194.5,502.3 L1195.0,501.2 L1195.8,500.4 L1196.9,500.0 L1198.1,499.8 L1199.4,500.0 L1200.8,500.6 L1202.0,501.4 L1203.1,502.5 L1203.9,503.8 L1204.4,505.2 L1204.6,506.5ZM1163.4,568.5 L1163.2,569.5 L1162.8,570.4 L1162.1,571.1 L1161.2,571.5 L1160.2,571.6 L1159.0,571.4 L1157.9,571.0 L1156.9,570.2 L1156.0,569.3 L1155.3,568.2 L1154.9,567.1 L1154.7,566.0 L1154.9,564.9 L1155.3,564.0 L1156.0,563.4 L1156.9,563.0 L1157.9,562.8 L1159.0,563.0 L1160.2,563.5 L1161.2,564.2 L1162.1,565.1 L1162.8,566.2 L1163.2,567.3 L1163.4,568.5Z" fill="#dedede" stroke="#dedede" stroke-width="0.9" fill-rule="evenodd"/>
<path d="M1160.2,348.8 L1166.0,348.5 L1171.9,348.7 L1177.9,349.5 L1184.0,350.8 L1190.1,352.7 L1196.2,355.0 L1202.2,357.9 L1208.0,361.2 L1213.7,365.0 L1219.2,369.2 L1224.4,373.7 L1229.3,378.7 L1233.9,383.9 L1238.1,389.4 L1241.9,395.1 L1245.3,401.0 L1248.2,407.1 L1250.6,413.2 L1252.5,419.4 L1253.9,425.6 L1254.8,431.7 L1255.1,437.7 L1254.9,443.5 L1254.1,449.2 L1252.9,454.6 L1251.1,459.8 L1248.7,464.6 L1245.9,469.0 L1242.7,473.1 L1239.0,476.7 L1104.5,657.2 L1102.0,660.0 L1099.2,662.2 L1096.2,663.6 L1093.0,664.3 L1089.5,664.3 L1085.7,663.6 L948.3,625.5 L948.3,433.8 L1088.3,368.8ZM1228.4,430.6 L1228.3,434.1 L1227.8,437.6 L1227.0,440.8 L1225.9,443.9 L1224.5,446.8 L1222.8,449.5 L1220.8,452.0 L1218.5,454.2 L1216.0,456.1 L1213.3,457.7 L1210.4,459.1 L1207.3,460.1 L1204.0,460.8 L1200.6,461.2 L1197.1,461.3 L1193.5,461.0 L1189.8,460.4 L1186.1,459.5 L1182.4,458.3 L1178.7,456.8 L1175.1,454.9 L1171.6,452.8 L1168.2,450.5 L1164.9,447.9 L1161.8,445.1 L1158.9,442.0 L1156.2,438.8 L1153.7,435.5 L1151.4,432.0 L1149.4,428.4 L1147.7,424.7 L1146.3,421.0 L1145.2,417.2 L1144.4,413.5 L1143.9,409.8 L1143.8,406.2 L1143.9,402.7 L1144.4,399.2 L1145.2,396.0 L1146.3,392.9 L1147.7,390.0 L1149.4,387.3 L1151.4,384.8 L1153.7,382.6 L1156.2,380.7 L1158.9,379.1 L1161.8,377.7 L1164.9,376.7 L1168.2,376.0 L1171.6,375.6 L1175.1,375.5 L1178.7,375.8 L1182.4,376.4 L1186.1,377.3 L1189.8,378.5 L1193.5,380.0 L1197.1,381.9 L1200.6,384.0 L1204.0,386.3 L1207.3,388.9 L1210.4,391.7 L1213.3,394.8 L1216.0,398.0 L1218.5,401.3 L1220.8,404.8 L1222.8,408.4 L1224.5,412.1 L1225.9,415.8 L1227.0,419.6 L1227.8,423.3 L1228.3,427.0 L1228.4,430.6ZM1231.9,396.3 L1231.7,397.5 L1231.2,398.6 L1230.3,399.4 L1229.3,399.9 L1228.0,400.0 L1226.7,399.8 L1225.4,399.2 L1224.1,398.4 L1223.1,397.3 L1222.2,396.0 L1221.7,394.7 L1221.5,393.3 L1221.7,392.1 L1222.2,391.0 L1223.1,390.2 L1224.1,389.7 L1225.4,389.6 L1226.7,389.8 L1228.0,390.4 L1229.3,391.2 L1230.3,392.3 L1231.2,393.6 L1231.7,394.9 L1231.9,396.3ZM1201.5,477.6 L1201.3,478.8 L1200.8,479.9 L1199.9,480.7 L1198.9,481.2 L1197.6,481.3 L1196.3,481.1 L1195.0,480.5 L1193.7,479.7 L1192.7,478.6 L1191.8,477.3 L1191.3,476.0 L1191.1,474.6 L1191.3,473.4 L1191.8,472.3 L1192.7,471.5 L1193.7,471.0 L1195.0,470.9 L1196.3,471.1 L1197.6,471.7 L1198.9,472.5 L1199.9,473.6 L1200.8,474.9 L1201.3,476.2 L1201.5,477.6ZM1211.9,501.1 L1211.7,502.3 L1211.2,503.4 L1210.3,504.2 L1209.3,504.7 L1208.0,504.8 L1206.7,504.6 L1205.4,504.0 L1204.1,503.2 L1203.1,502.1 L1202.2,500.8 L1201.7,499.5 L1201.5,498.1 L1201.7,496.9 L1202.2,495.8 L1203.1,495.0 L1204.1,494.5 L1205.4,494.4 L1206.7,494.6 L1208.0,495.2 L1209.3,496.0 L1210.3,497.1 L1211.2,498.4 L1211.7,499.7 L1211.9,501.1ZM1170.6,563.0 L1170.5,564.1 L1170.0,565.0 L1169.4,565.7 L1168.5,566.1 L1167.4,566.2 L1166.3,566.0 L1165.2,565.5 L1164.1,564.8 L1163.2,563.9 L1162.6,562.8 L1162.1,561.7 L1162.0,560.6 L1162.1,559.5 L1162.6,558.6 L1163.2,557.9 L1164.1,557.5 L1165.2,557.4 L1166.3,557.6 L1167.4,558.1 L1168.5,558.8 L1169.4,559.7 L1170.0,560.8 L1170.5,561.9 L1170.6,563.0Z" fill="none" stroke="#161616" stroke-width="1"/>
<path d="M1151.9,355.0 L1157.7,354.7 L1163.6,354.9 L1169.6,355.7 L1175.7,357.0 L1181.8,358.9 L1187.9,361.2 L1193.9,364.1 L1199.7,367.4 L1205.4,371.2 L1210.9,375.4 L1216.1,379.9 L1221.0,384.9 L1225.6,390.1 L1229.8,395.6 L1233.6,401.3 L1237.0,407.2 L1239.9,413.3 L1242.3,419.4 L1244.2,425.6 L1245.6,431.8 L1246.5,437.9 L1246.8,443.9 L1246.6,449.7 L1245.8,455.4 L1244.6,460.8 L1242.8,466.0 L1240.4,470.8 L1237.6,475.2 L1234.4,479.3 L1230.7,482.9 L1096.2,663.4 L1093.7,666.2 L1090.9,668.4 L1087.9,669.8 L1084.7,670.5 L1081.2,670.5 L1077.4,669.8 L940.0,631.7 L940.0,440.0 L1080.0,375.0ZM1220.1,436.8 L1220.0,440.3 L1219.5,443.8 L1218.7,447.0 L1217.6,450.1 L1216.2,453.0 L1214.5,455.7 L1212.5,458.2 L1210.2,460.4 L1207.7,462.3 L1205.0,463.9 L1202.1,465.3 L1199.0,466.3 L1195.7,467.0 L1192.3,467.4 L1188.8,467.5 L1185.2,467.2 L1181.5,466.6 L1177.8,465.7 L1174.1,464.5 L1170.4,463.0 L1166.8,461.1 L1163.3,459.0 L1159.9,456.7 L1156.6,454.1 L1153.5,451.3 L1150.6,448.2 L1147.9,445.0 L1145.4,441.7 L1143.1,438.2 L1141.1,434.6 L1139.4,430.9 L1138.0,427.2 L1136.9,423.4 L1136.1,419.7 L1135.6,416.0 L1135.5,412.4 L1135.6,408.9 L1136.1,405.4 L1136.9,402.2 L1138.0,399.1 L1139.4,396.2 L1141.1,393.5 L1143.1,391.0 L1145.4,388.8 L1147.9,386.9 L1150.6,385.3 L1153.5,383.9 L1156.6,382.9 L1159.9,382.2 L1163.3,381.8 L1166.8,381.7 L1170.4,382.0 L1174.1,382.6 L1177.8,383.5 L1181.5,384.7 L1185.2,386.2 L1188.8,388.1 L1192.3,390.2 L1195.7,392.5 L1199.0,395.1 L1202.1,397.9 L1205.0,401.0 L1207.7,404.2 L1210.2,407.5 L1212.5,411.0 L1214.5,414.6 L1216.2,418.3 L1217.6,422.0 L1218.7,425.8 L1219.5,429.5 L1220.0,433.2 L1220.1,436.8ZM1223.6,402.5 L1223.4,403.7 L1222.9,404.8 L1222.0,405.6 L1221.0,406.1 L1219.7,406.2 L1218.4,406.0 L1217.1,405.4 L1215.8,404.6 L1214.8,403.5 L1213.9,402.2 L1213.4,400.9 L1213.2,399.5 L1213.4,398.3 L1213.9,397.2 L1214.8,396.4 L1215.8,395.9 L1217.1,395.8 L1218.4,396.0 L1219.7,396.6 L1221.0,397.4 L1222.0,398.5 L1222.9,399.8 L1223.4,401.1 L1223.6,402.5ZM1193.2,483.8 L1193.0,485.0 L1192.5,486.1 L1191.6,486.9 L1190.6,487.4 L1189.3,487.5 L1188.0,487.3 L1186.7,486.7 L1185.4,485.9 L1184.4,484.8 L1183.5,483.5 L1183.0,482.2 L1182.8,480.8 L1183.0,479.6 L1183.5,478.5 L1184.4,477.7 L1185.4,477.2 L1186.7,477.1 L1188.0,477.3 L1189.3,477.9 L1190.6,478.7 L1191.6,479.8 L1192.5,481.1 L1193.0,482.4 L1193.2,483.8ZM1203.6,507.3 L1203.4,508.5 L1202.9,509.6 L1202.0,510.4 L1201.0,510.9 L1199.7,511.0 L1198.4,510.8 L1197.1,510.2 L1195.8,509.4 L1194.8,508.3 L1193.9,507.0 L1193.4,505.7 L1193.2,504.3 L1193.4,503.1 L1193.9,502.0 L1194.8,501.2 L1195.8,500.7 L1197.1,500.6 L1198.4,500.8 L1199.7,501.4 L1201.0,502.2 L1202.0,503.3 L1202.9,504.6 L1203.4,505.9 L1203.6,507.3ZM1162.3,569.2 L1162.2,570.3 L1161.7,571.2 L1161.1,571.9 L1160.2,572.3 L1159.1,572.4 L1158.0,572.2 L1156.9,571.7 L1155.8,571.0 L1154.9,570.1 L1154.3,569.0 L1153.8,567.9 L1153.7,566.8 L1153.8,565.7 L1154.3,564.8 L1154.9,564.1 L1155.8,563.7 L1156.9,563.6 L1158.0,563.8 L1159.1,564.3 L1160.2,565.0 L1161.1,565.9 L1161.7,567.0 L1162.2,568.1 L1162.3,569.2Z" fill="#737373" stroke="#161616" stroke-width="1" fill-rule="evenodd"/>
<polygon points="890.6,421.7 1229.0,236.4 1263.0,288.5 924.6,473.8" fill="#2a5f2c" stroke="#161616" stroke-width="1.0" stroke-linejoin="round" />
<polygon points="890.6,421.7 921.0,395.0 1259.5,209.0 1229.0,236.4" fill="#316f33" stroke="#161616" stroke-width="1.0" stroke-linejoin="round" />
<polygon points="1229.0,236.4 1259.5,209.0 1295.7,261.4 1263.0,288.5" fill="#4aa84f" stroke="#161616" stroke-width="1.0" stroke-linejoin="round" />
<polygon points="1233.0,238.0 1259.0,213.0 1291.0,261.0 1263.0,283.0" fill="#2a5f2c" stroke="#161616" stroke-width="0.8" stroke-linejoin="round" />
<polygon points="1263.0,283.0 1291.0,261.0 1282.0,250.0 1257.0,270.0" fill="#2f6d31" stroke="none" stroke-width="1.0" stroke-linejoin="round" />
<ellipse cx="1254" cy="247.5" rx="4.3" ry="5" fill="#fff" stroke="#161616" stroke-width="0.9"/>
<ellipse cx="1076.9" cy="355.1" rx="4.2" ry="5.2" transform="rotate(-25 1076.9 355.1)" fill="#4f9a52"/><ellipse cx="1078.0" cy="354.1" rx="3.6" ry="4.6000000000000005" transform="rotate(-25 1078.0 354.1)" fill="#285c2a"/><ellipse cx="1076.9" cy="355.1" rx="4.2" ry="5.2" transform="rotate(-25 1076.9 355.1)" fill="none" stroke="#0f2a10" stroke-width="1"/>
<ellipse cx="1098.0" cy="343.5" rx="4.2" ry="5.2" transform="rotate(-25 1098.0 343.5)" fill="#4f9a52"/><ellipse cx="1099.1" cy="342.5" rx="3.6" ry="4.6000000000000005" transform="rotate(-25 1099.1 342.5)" fill="#285c2a"/><ellipse cx="1098.0" cy="343.5" rx="4.2" ry="5.2" transform="rotate(-25 1098.0 343.5)" fill="none" stroke="#0f2a10" stroke-width="1"/>
<ellipse cx="1119.0" cy="332.0" rx="4.2" ry="5.2" transform="rotate(-25 1119.0 332.0)" fill="#4f9a52"/><ellipse cx="1120.1" cy="331.0" rx="3.6" ry="4.6000000000000005" transform="rotate(-25 1120.1 331.0)" fill="#285c2a"/><ellipse cx="1119.0" cy="332.0" rx="4.2" ry="5.2" transform="rotate(-25 1119.0 332.0)" fill="none" stroke="#0f2a10" stroke-width="1"/>
<ellipse cx="1140.1" cy="320.4" rx="4.2" ry="5.2" transform="rotate(-25 1140.1 320.4)" fill="#4f9a52"/><ellipse cx="1141.2" cy="319.4" rx="3.6" ry="4.6000000000000005" transform="rotate(-25 1141.2 319.4)" fill="#285c2a"/><ellipse cx="1140.1" cy="320.4" rx="4.2" ry="5.2" transform="rotate(-25 1140.1 320.4)" fill="none" stroke="#0f2a10" stroke-width="1"/>
<ellipse cx="1161.2" cy="308.8" rx="4.2" ry="5.2" transform="rotate(-25 1161.2 308.8)" fill="#4f9a52"/><ellipse cx="1162.3" cy="307.8" rx="3.6" ry="4.6000000000000005" transform="rotate(-25 1162.3 307.8)" fill="#285c2a"/><ellipse cx="1161.2" cy="308.8" rx="4.2" ry="5.2" transform="rotate(-25 1161.2 308.8)" fill="none" stroke="#0f2a10" stroke-width="1"/>
<ellipse cx="1182.2" cy="297.2" rx="4.2" ry="5.2" transform="rotate(-25 1182.2 297.2)" fill="#4f9a52"/><ellipse cx="1183.3" cy="296.2" rx="3.6" ry="4.6000000000000005" transform="rotate(-25 1183.3 296.2)" fill="#285c2a"/><ellipse cx="1182.2" cy="297.2" rx="4.2" ry="5.2" transform="rotate(-25 1182.2 297.2)" fill="none" stroke="#0f2a10" stroke-width="1"/>
<ellipse cx="1203.3" cy="285.7" rx="4.2" ry="5.2" transform="rotate(-25 1203.3 285.7)" fill="#4f9a52"/><ellipse cx="1204.4" cy="284.7" rx="3.6" ry="4.6000000000000005" transform="rotate(-25 1204.4 284.7)" fill="#285c2a"/><ellipse cx="1203.3" cy="285.7" rx="4.2" ry="5.2" transform="rotate(-25 1203.3 285.7)" fill="none" stroke="#0f2a10" stroke-width="1"/>
<ellipse cx="1224.4" cy="274.1" rx="4.2" ry="5.2" transform="rotate(-25 1224.4 274.1)" fill="#4f9a52"/><ellipse cx="1225.5" cy="273.1" rx="3.6" ry="4.6000000000000005" transform="rotate(-25 1225.5 273.1)" fill="#285c2a"/><ellipse cx="1224.4" cy="274.1" rx="4.2" ry="5.2" transform="rotate(-25 1224.4 274.1)" fill="none" stroke="#0f2a10" stroke-width="1"/>
<ellipse cx="926.7" cy="395.8" rx="5.2" ry="2.0" transform="rotate(-29 926.7 395.8)" fill="#1f4a21" stroke="#0f2a10" stroke-width="0.9"/>
<ellipse cx="947.8" cy="384.2" rx="5.2" ry="2.0" transform="rotate(-29 947.8 384.2)" fill="#1f4a21" stroke="#0f2a10" stroke-width="0.9"/>
<ellipse cx="969.0" cy="372.6" rx="5.2" ry="2.0" transform="rotate(-29 969.0 372.6)" fill="#1f4a21" stroke="#0f2a10" stroke-width="0.9"/>
<ellipse cx="990.1" cy="361.0" rx="5.2" ry="2.0" transform="rotate(-29 990.1 361.0)" fill="#1f4a21" stroke="#0f2a10" stroke-width="0.9"/>
<ellipse cx="1011.3" cy="349.4" rx="5.2" ry="2.0" transform="rotate(-29 1011.3 349.4)" fill="#1f4a21" stroke="#0f2a10" stroke-width="0.9"/>
<ellipse cx="1032.4" cy="337.8" rx="5.2" ry="2.0" transform="rotate(-29 1032.4 337.8)" fill="#1f4a21" stroke="#0f2a10" stroke-width="0.9"/>
<ellipse cx="1053.5" cy="326.2" rx="5.2" ry="2.0" transform="rotate(-29 1053.5 326.2)" fill="#1f4a21" stroke="#0f2a10" stroke-width="0.9"/>
<ellipse cx="1074.7" cy="314.6" rx="5.2" ry="2.0" transform="rotate(-29 1074.7 314.6)" fill="#1f4a21" stroke="#0f2a10" stroke-width="0.9"/>
<ellipse cx="1095.8" cy="303.0" rx="5.2" ry="2.0" transform="rotate(-29 1095.8 303.0)" fill="#1f4a21" stroke="#0f2a10" stroke-width="0.9"/>
<ellipse cx="1117.0" cy="291.4" rx="5.2" ry="2.0" transform="rotate(-29 1117.0 291.4)" fill="#1f4a21" stroke="#0f2a10" stroke-width="0.9"/>
<ellipse cx="1138.1" cy="279.8" rx="5.2" ry="2.0" transform="rotate(-29 1138.1 279.8)" fill="#1f4a21" stroke="#0f2a10" stroke-width="0.9"/>
<ellipse cx="1159.2" cy="268.2" rx="5.2" ry="2.0" transform="rotate(-29 1159.2 268.2)" fill="#1f4a21" stroke="#0f2a10" stroke-width="0.9"/>
<ellipse cx="1180.4" cy="256.6" rx="5.2" ry="2.0" transform="rotate(-29 1180.4 256.6)" fill="#1f4a21" stroke="#0f2a10" stroke-width="0.9"/>
<ellipse cx="1201.5" cy="245.0" rx="5.2" ry="2.0" transform="rotate(-29 1201.5 245.0)" fill="#1f4a21" stroke="#0f2a10" stroke-width="0.9"/>
<ellipse cx="1222.7" cy="233.4" rx="5.2" ry="2.0" transform="rotate(-29 1222.7 233.4)" fill="#1f4a21" stroke="#0f2a10" stroke-width="0.9"/>
<polygon points="957.9,708.0 957.9,841.0 1040.0,864.0" fill="#7a7a7a" stroke="#161616" stroke-width="1.0" stroke-linejoin="round" />
<polygon points="957.9,708.0 962.0,708.0 1046.0,865.5 1040.0,864.0" fill="#e6e6e6" stroke="#161616" stroke-width="0.8" stroke-linejoin="round" />
<polygon points="870.4,466.0 925.6,481.5 926.0,866.7 870.6,851.7" fill="#2a5f2c" stroke="#161616" stroke-width="1.0" stroke-linejoin="round" />
<polygon points="925.6,481.5 957.6,454.8 957.6,840.0 926.0,866.7" fill="#3f8f43" stroke="#161616" stroke-width="1.0" stroke-linejoin="round" />
<polygon points="870.4,466.0 902.0,439.3 957.6,454.8 925.6,481.5" fill="#4aa84f" stroke="#161616" stroke-width="1.0" stroke-linejoin="round" />
<polygon points="874.5,466.2 902.5,442.8 951.0,456.2 924.5,478.6" fill="#3f9a44" stroke="#161616" stroke-width="0.8" stroke-linejoin="round" />
<ellipse cx="898.3" cy="666.7" rx="5.6" ry="3.9" transform="rotate(50 898.3 666.7)" fill="#6cbf70"/><ellipse cx="899.4" cy="665.7" rx="5.0" ry="3.3" transform="rotate(50 899.4 665.7)" fill="#3f8f45"/><ellipse cx="898.3" cy="666.7" rx="5.6" ry="3.9" transform="rotate(50 898.3 666.7)" fill="none" stroke="#0f2a10" stroke-width="1"/>
<ellipse cx="898.3" cy="694.1" rx="5.6" ry="3.9" transform="rotate(50 898.3 694.1)" fill="#6cbf70"/><ellipse cx="899.4" cy="693.1" rx="5.0" ry="3.3" transform="rotate(50 899.4 693.1)" fill="#3f8f45"/><ellipse cx="898.3" cy="694.1" rx="5.6" ry="3.9" transform="rotate(50 898.3 694.1)" fill="none" stroke="#0f2a10" stroke-width="1"/>
<ellipse cx="898.3" cy="721.6" rx="5.6" ry="3.9" transform="rotate(50 898.3 721.6)" fill="#6cbf70"/><ellipse cx="899.4" cy="720.6" rx="5.0" ry="3.3" transform="rotate(50 899.4 720.6)" fill="#3f8f45"/><ellipse cx="898.3" cy="721.6" rx="5.6" ry="3.9" transform="rotate(50 898.3 721.6)" fill="none" stroke="#0f2a10" stroke-width="1"/>
<ellipse cx="898.3" cy="749.0" rx="5.6" ry="3.9" transform="rotate(50 898.3 749.0)" fill="#6cbf70"/><ellipse cx="899.4" cy="748.0" rx="5.0" ry="3.3" transform="rotate(50 899.4 748.0)" fill="#3f8f45"/><ellipse cx="898.3" cy="749.0" rx="5.6" ry="3.9" transform="rotate(50 898.3 749.0)" fill="none" stroke="#0f2a10" stroke-width="1"/>
<ellipse cx="898.3" cy="776.4" rx="5.6" ry="3.9" transform="rotate(50 898.3 776.4)" fill="#6cbf70"/><ellipse cx="899.4" cy="775.4" rx="5.0" ry="3.3" transform="rotate(50 899.4 775.4)" fill="#3f8f45"/><ellipse cx="898.3" cy="776.4" rx="5.6" ry="3.9" transform="rotate(50 898.3 776.4)" fill="none" stroke="#0f2a10" stroke-width="1"/>
<ellipse cx="898.3" cy="803.9" rx="5.6" ry="3.9" transform="rotate(50 898.3 803.9)" fill="#6cbf70"/><ellipse cx="899.4" cy="802.9" rx="5.0" ry="3.3" transform="rotate(50 899.4 802.9)" fill="#3f8f45"/><ellipse cx="898.3" cy="803.9" rx="5.6" ry="3.9" transform="rotate(50 898.3 803.9)" fill="none" stroke="#0f2a10" stroke-width="1"/>
<ellipse cx="898.3" cy="831.3" rx="5.6" ry="3.9" transform="rotate(50 898.3 831.3)" fill="#6cbf70"/><ellipse cx="899.4" cy="830.3" rx="5.0" ry="3.3" transform="rotate(50 899.4 830.3)" fill="#3f8f45"/><ellipse cx="898.3" cy="831.3" rx="5.6" ry="3.9" transform="rotate(50 898.3 831.3)" fill="none" stroke="#0f2a10" stroke-width="1"/>
<ellipse cx="941.6" cy="687.8" rx="2.4" ry="6" transform="rotate(15 941.6 687.8)" fill="#1f4a21" stroke="#0f2a10" stroke-width="0.9"/>
<ellipse cx="941.6" cy="715.4" rx="2.4" ry="6" transform="rotate(15 941.6 715.4)" fill="#1f4a21" stroke="#0f2a10" stroke-width="0.9"/>
<ellipse cx="941.6" cy="743.0" rx="2.4" ry="6" transform="rotate(15 941.6 743.0)" fill="#1f4a21" stroke="#0f2a10" stroke-width="0.9"/>
<ellipse cx="941.6" cy="770.6" rx="2.4" ry="6" transform="rotate(15 941.6 770.6)" fill="#1f4a21" stroke="#0f2a10" stroke-width="0.9"/>
<ellipse cx="941.6" cy="798.2" rx="2.4" ry="6" transform="rotate(15 941.6 798.2)" fill="#1f4a21" stroke="#0f2a10" stroke-width="0.9"/>
<ellipse cx="941.6" cy="825.8" rx="2.4" ry="6" transform="rotate(15 941.6 825.8)" fill="#1f4a21" stroke="#0f2a10" stroke-width="0.9"/>
<polygon points="870.6,851.7 1256.6,962.7 1256.6,1017.5 870.6,906.1" fill="#2a5f2c" stroke="#161616" stroke-width="1.0" stroke-linejoin="round" />
<polygon points="926.0,866.7 957.6,840.0 1288.6,935.5 1256.6,962.7" fill="#43994a" stroke="#161616" stroke-width="1.0" stroke-linejoin="round" />
<polygon points="1256.6,962.7 1288.6,935.5 1288.6,989.2 1256.6,1017.5" fill="#4aa84f" stroke="#161616" stroke-width="1.0" stroke-linejoin="round" />
<polygon points="1260.0,965.0 1285.0,942.0 1285.0,986.0 1260.0,1012.0" fill="#2a5f2c" stroke="#161616" stroke-width="0.8" stroke-linejoin="round" />
<polygon points="1260.0,1012.0 1285.0,986.0 1285.0,968.0 1260.0,968.0" fill="#2a5f2c" stroke="none" stroke-width="1.0" stroke-linejoin="round" />
<polygon points="1260.0,978.0 1285.0,986.0 1260.0,1012.0" fill="#3f9444" stroke="none" stroke-width="1.0" stroke-linejoin="round" />
<polyline points="1260,965 1260,1012 1285,986" fill="none" stroke="#161616" stroke-width="0.8"/>
<ellipse cx="897.8" cy="886.7" rx="5.6" ry="3.9" transform="rotate(50 897.8 886.7)" fill="#6cbf70"/><ellipse cx="898.9" cy="885.7" rx="5.0" ry="3.3" transform="rotate(50 898.9 885.7)" fill="#3f8f45"/><ellipse cx="897.8" cy="886.7" rx="5.6" ry="3.9" transform="rotate(50 897.8 886.7)" fill="none" stroke="#0f2a10" stroke-width="1"/>
<ellipse cx="925.4" cy="894.7" rx="5.6" ry="3.9" transform="rotate(50 925.4 894.7)" fill="#6cbf70"/><ellipse cx="926.5" cy="893.7" rx="5.0" ry="3.3" transform="rotate(50 926.5 893.7)" fill="#3f8f45"/><ellipse cx="925.4" cy="894.7" rx="5.6" ry="3.9" transform="rotate(50 925.4 894.7)" fill="none" stroke="#0f2a10" stroke-width="1"/>
<ellipse cx="953.0" cy="902.6" rx="5.6" ry="3.9" transform="rotate(50 953.0 902.6)" fill="#6cbf70"/><ellipse cx="954.1" cy="901.6" rx="5.0" ry="3.3" transform="rotate(50 954.1 901.6)" fill="#3f8f45"/><ellipse cx="953.0" cy="902.6" rx="5.6" ry="3.9" transform="rotate(50 953.0 902.6)" fill="none" stroke="#0f2a10" stroke-width="1"/>
<ellipse cx="980.6" cy="910.6" rx="5.6" ry="3.9" transform="rotate(50 980.6 910.6)" fill="#6cbf70"/><ellipse cx="981.7" cy="909.6" rx="5.0" ry="3.3" transform="rotate(50 981.7 909.6)" fill="#3f8f45"/><ellipse cx="980.6" cy="910.6" rx="5.6" ry="3.9" transform="rotate(50 980.6 910.6)" fill="none" stroke="#0f2a10" stroke-width="1"/>
<ellipse cx="1008.2" cy="918.6" rx="5.6" ry="3.9" transform="rotate(50 1008.2 918.6)" fill="#6cbf70"/><ellipse cx="1009.3" cy="917.6" rx="5.0" ry="3.3" transform="rotate(50 1009.3 917.6)" fill="#3f8f45"/><ellipse cx="1008.2" cy="918.6" rx="5.6" ry="3.9" transform="rotate(50 1008.2 918.6)" fill="none" stroke="#0f2a10" stroke-width="1"/>
<ellipse cx="1035.8" cy="926.6" rx="5.6" ry="3.9" transform="rotate(50 1035.8 926.6)" fill="#6cbf70"/><ellipse cx="1036.9" cy="925.6" rx="5.0" ry="3.3" transform="rotate(50 1036.9 925.6)" fill="#3f8f45"/><ellipse cx="1035.8" cy="926.6" rx="5.6" ry="3.9" transform="rotate(50 1035.8 926.6)" fill="none" stroke="#0f2a10" stroke-width="1"/>
<ellipse cx="1063.4" cy="934.5" rx="5.6" ry="3.9" transform="rotate(50 1063.4 934.5)" fill="#6cbf70"/><ellipse cx="1064.5" cy="933.5" rx="5.0" ry="3.3" transform="rotate(50 1064.5 933.5)" fill="#3f8f45"/><ellipse cx="1063.4" cy="934.5" rx="5.6" ry="3.9" transform="rotate(50 1063.4 934.5)" fill="none" stroke="#0f2a10" stroke-width="1"/>
<ellipse cx="1091.0" cy="942.5" rx="5.6" ry="3.9" transform="rotate(50 1091.0 942.5)" fill="#6cbf70"/><ellipse cx="1092.1" cy="941.5" rx="5.0" ry="3.3" transform="rotate(50 1092.1 941.5)" fill="#3f8f45"/><ellipse cx="1091.0" cy="942.5" rx="5.6" ry="3.9" transform="rotate(50 1091.0 942.5)" fill="none" stroke="#0f2a10" stroke-width="1"/>
<ellipse cx="1118.6" cy="950.5" rx="5.6" ry="3.9" transform="rotate(50 1118.6 950.5)" fill="#6cbf70"/><ellipse cx="1119.7" cy="949.5" rx="5.0" ry="3.3" transform="rotate(50 1119.7 949.5)" fill="#3f8f45"/><ellipse cx="1118.6" cy="950.5" rx="5.6" ry="3.9" transform="rotate(50 1118.6 950.5)" fill="none" stroke="#0f2a10" stroke-width="1"/>
<ellipse cx="1146.2" cy="958.4" rx="5.6" ry="3.9" transform="rotate(50 1146.2 958.4)" fill="#6cbf70"/><ellipse cx="1147.3" cy="957.4" rx="5.0" ry="3.3" transform="rotate(50 1147.3 957.4)" fill="#3f8f45"/><ellipse cx="1146.2" cy="958.4" rx="5.6" ry="3.9" transform="rotate(50 1146.2 958.4)" fill="none" stroke="#0f2a10" stroke-width="1"/>
<ellipse cx="1173.8" cy="966.4" rx="5.6" ry="3.9" transform="rotate(50 1173.8 966.4)" fill="#6cbf70"/><ellipse cx="1174.9" cy="965.4" rx="5.0" ry="3.3" transform="rotate(50 1174.9 965.4)" fill="#3f8f45"/><ellipse cx="1173.8" cy="966.4" rx="5.6" ry="3.9" transform="rotate(50 1173.8 966.4)" fill="none" stroke="#0f2a10" stroke-width="1"/>
<ellipse cx="1201.4" cy="974.4" rx="5.6" ry="3.9" transform="rotate(50 1201.4 974.4)" fill="#6cbf70"/><ellipse cx="1202.5" cy="973.4" rx="5.0" ry="3.3" transform="rotate(50 1202.5 973.4)" fill="#3f8f45"/><ellipse cx="1201.4" cy="974.4" rx="5.6" ry="3.9" transform="rotate(50 1201.4 974.4)" fill="none" stroke="#0f2a10" stroke-width="1"/>
<ellipse cx="1229.0" cy="982.3" rx="5.6" ry="3.9" transform="rotate(50 1229.0 982.3)" fill="#6cbf70"/><ellipse cx="1230.1" cy="981.3" rx="5.0" ry="3.3" transform="rotate(50 1230.1 981.3)" fill="#3f8f45"/><ellipse cx="1229.0" cy="982.3" rx="5.6" ry="3.9" transform="rotate(50 1229.0 982.3)" fill="none" stroke="#0f2a10" stroke-width="1"/>
<ellipse cx="943.4" cy="853.6" rx="6" ry="3.3" transform="rotate(12 943.4 853.6)" fill="#1f4a21" stroke="#0f2a10" stroke-width="0.9"/>
<ellipse cx="970.8" cy="861.5" rx="6" ry="3.3" transform="rotate(12 970.8 861.5)" fill="#1f4a21" stroke="#0f2a10" stroke-width="0.9"/>
<ellipse cx="998.2" cy="869.4" rx="6" ry="3.3" transform="rotate(12 998.2 869.4)" fill="#1f4a21" stroke="#0f2a10" stroke-width="0.9"/>
<ellipse cx="1025.5" cy="877.3" rx="6" ry="3.3" transform="rotate(12 1025.5 877.3)" fill="#1f4a21" stroke="#0f2a10" stroke-width="0.9"/>
<ellipse cx="1052.9" cy="885.2" rx="6" ry="3.3" transform="rotate(12 1052.9 885.2)" fill="#1f4a21" stroke="#0f2a10" stroke-width="0.9"/>
<ellipse cx="1080.3" cy="893.1" rx="6" ry="3.3" transform="rotate(12 1080.3 893.1)" fill="#1f4a21" stroke="#0f2a10" stroke-width="0.9"/>
<ellipse cx="1107.7" cy="900.9" rx="6" ry="3.3" transform="rotate(12 1107.7 900.9)" fill="#1f4a21" stroke="#0f2a10" stroke-width="0.9"/>
<ellipse cx="1135.1" cy="908.8" rx="6" ry="3.3" transform="rotate(12 1135.1 908.8)" fill="#1f4a21" stroke="#0f2a10" stroke-width="0.9"/>
<ellipse cx="1162.4" cy="916.7" rx="6" ry="3.3" transform="rotate(12 1162.4 916.7)" fill="#1f4a21" stroke="#0f2a10" stroke-width="0.9"/>
<ellipse cx="1189.8" cy="924.6" rx="6" ry="3.3" transform="rotate(12 1189.8 924.6)" fill="#1f4a21" stroke="#0f2a10" stroke-width="0.9"/>
<ellipse cx="1217.2" cy="932.5" rx="6" ry="3.3" transform="rotate(12 1217.2 932.5)" fill="#1f4a21" stroke="#0f2a10" stroke-width="0.9"/>
<ellipse cx="1244.6" cy="940.4" rx="6" ry="3.3" transform="rotate(12 1244.6 940.4)" fill="#1f4a21" stroke="#0f2a10" stroke-width="0.9"/>
<circle cx="870.6" cy="906.1" r="4.5" fill="#fff" stroke="#111" stroke-width="1.6"/><circle cx="870.6" cy="906.1" r="1.8" fill="#111"/>
<path d="M1149.3,385.5 L1150.3,386.4 L1146.0,385.1 L1141.8,384.1 L1137.6,383.3 L1133.4,382.8 L1129.2,382.6 L1125.2,382.6 L1121.2,382.8 L1117.3,383.4 L1113.5,384.2 L1109.9,385.2 L1106.3,386.5 L1103.0,388.0 L1099.8,389.8 L1096.7,391.8 L1093.9,394.1 L1091.3,396.6 L1088.8,399.2 L1086.6,402.1 L1084.6,405.2 L1082.9,408.4 L1081.3,411.8 L1080.1,415.4 L1079.0,419.1 L1078.2,422.9 L1077.7,426.9 L1077.5,430.9 L1077.4,435.0 L1077.7,439.2 L1078.2,443.5 L1079.0,447.7 L1080.0,452.0 L1081.2,456.3 L1082.8,460.6 L1084.5,464.9 L1086.5,469.1 L1088.7,473.3 L1091.1,477.3 L1093.7,481.3 L1096.6,485.2 L1099.6,489.0 L1102.8,492.6 L1106.1,496.1 L1109.6,499.5 L1113.3,502.6 L1117.1,505.6 L1120.9,508.4 L1124.9,511.0 L1129.0,513.3 L1133.1,515.5 L1137.3,517.4 L1141.5,519.1 L1145.8,520.5 L1150.0,521.7 L1154.2,522.6 L1158.5,523.3 L1162.6,523.7 L1166.7,523.9 L1170.8,523.8 L1174.7,523.4 L1178.6,522.8 L1182.3,521.9 L1185.9,520.7 L1189.4,519.3 L1192.7,517.7 L1195.8,515.8 L1198.8,513.7 L1201.5,511.4 L1204.1,508.8 L1206.4,506.1 L1065.3,685.4 L1061.8,689.1 L1058.1,691.9 L1054.0,693.8 L1049.7,694.7 L1045.0,694.6 L1040.0,693.6 L898.8,653.6 L894.7,652.1 L891.3,649.9 L888.7,647.3 L886.8,644.0 L885.7,640.2 L885.3,635.8 L885.3,493.8 L913.3,433.8 L1041.7,356.5 L1044.6,355.0 L1047.5,354.0 L1050.5,353.4 L1053.5,353.3 L1056.6,353.7 L1059.8,354.6ZM1067.7,660.5 L1067.6,663.1 L1067.2,665.7 L1066.6,668.1 L1065.8,670.4 L1064.8,672.6 L1063.5,674.6 L1062.0,676.4 L1060.3,678.0 L1058.5,679.5 L1056.5,680.7 L1054.3,681.7 L1052.0,682.4 L1049.5,683.0 L1047.0,683.3 L1044.4,683.3 L1041.7,683.1 L1038.9,682.7 L1036.2,682.0 L1033.5,681.1 L1030.7,680.0 L1028.0,678.6 L1025.4,677.0 L1022.9,675.3 L1020.4,673.4 L1018.1,671.3 L1015.9,669.0 L1013.9,666.6 L1012.1,664.1 L1010.4,661.5 L1008.9,658.8 L1007.6,656.1 L1006.6,653.3 L1005.8,650.5 L1005.2,647.8 L1004.8,645.0 L1004.7,642.3 L1004.8,639.7 L1005.2,637.1 L1005.8,634.7 L1006.6,632.4 L1007.6,630.2 L1008.9,628.2 L1010.4,626.4 L1012.1,624.8 L1013.9,623.3 L1015.9,622.1 L1018.1,621.1 L1020.4,620.4 L1022.9,619.8 L1025.4,619.5 L1028.0,619.5 L1030.7,619.7 L1033.5,620.1 L1036.2,620.8 L1038.9,621.7 L1041.7,622.8 L1044.4,624.2 L1047.0,625.8 L1049.5,627.5 L1052.0,629.4 L1054.3,631.5 L1056.5,633.8 L1058.5,636.2 L1060.3,638.7 L1062.0,641.3 L1063.5,644.0 L1064.8,646.7 L1065.8,649.5 L1066.6,652.3 L1067.2,655.0 L1067.6,657.8 L1067.7,660.5ZM1034.0,545.6 L1033.9,548.3 L1033.5,550.9 L1032.9,553.3 L1032.1,555.7 L1031.0,557.8 L1029.8,559.9 L1028.3,561.7 L1026.6,563.4 L1024.7,564.8 L1022.6,566.1 L1020.4,567.1 L1018.1,567.9 L1015.6,568.4 L1013.0,568.7 L1010.4,568.7 L1007.6,568.5 L1004.9,568.1 L1002.1,567.4 L999.3,566.5 L996.6,565.3 L993.8,564.0 L991.2,562.4 L988.6,560.6 L986.1,558.6 L983.8,556.5 L981.6,554.2 L979.5,551.8 L977.6,549.3 L975.9,546.6 L974.4,543.9 L973.2,541.2 L972.1,538.4 L971.3,535.5 L970.7,532.7 L970.3,529.9 L970.2,527.2 L970.3,524.5 L970.7,521.9 L971.3,519.5 L972.1,517.1 L973.2,515.0 L974.4,512.9 L975.9,511.1 L977.6,509.4 L979.5,508.0 L981.6,506.7 L983.8,505.7 L986.1,504.9 L988.6,504.4 L991.2,504.1 L993.8,504.1 L996.6,504.3 L999.3,504.7 L1002.1,505.4 L1004.9,506.3 L1007.6,507.5 L1010.4,508.8 L1013.0,510.4 L1015.6,512.2 L1018.1,514.2 L1020.4,516.3 L1022.6,518.6 L1024.7,521.0 L1026.6,523.5 L1028.3,526.2 L1029.8,528.9 L1031.0,531.6 L1032.1,534.4 L1032.9,537.3 L1033.5,540.1 L1033.9,542.9 L1034.0,545.6ZM1060.3,369.5 L1060.1,370.8 L1059.5,371.9 L1058.7,372.8 L1057.6,373.3 L1056.3,373.4 L1054.9,373.2 L1053.5,372.6 L1052.2,371.7 L1051.1,370.6 L1050.3,369.3 L1049.7,367.9 L1049.5,366.5 L1049.7,365.2 L1050.3,364.1 L1051.1,363.2 L1052.2,362.7 L1053.5,362.6 L1054.9,362.8 L1056.3,363.4 L1057.6,364.3 L1058.7,365.4 L1059.5,366.7 L1060.1,368.1 L1060.3,369.5ZM1172.7,537.2 L1172.5,538.5 L1171.9,539.6 L1171.1,540.5 L1170.0,541.0 L1168.7,541.1 L1167.3,540.9 L1165.9,540.3 L1164.6,539.4 L1163.5,538.3 L1162.7,537.0 L1162.1,535.6 L1161.9,534.2 L1162.1,532.9 L1162.7,531.8 L1163.5,530.9 L1164.6,530.4 L1165.9,530.3 L1167.3,530.5 L1168.7,531.1 L1170.0,532.0 L1171.1,533.1 L1171.9,534.4 L1172.5,535.8 L1172.7,537.2ZM1129.0,595.5 L1128.8,596.8 L1128.2,597.9 L1127.4,598.8 L1126.3,599.3 L1125.0,599.4 L1123.6,599.2 L1122.2,598.6 L1120.9,597.7 L1119.8,596.6 L1119.0,595.3 L1118.4,593.9 L1118.2,592.5 L1118.4,591.2 L1119.0,590.1 L1119.8,589.2 L1120.9,588.7 L1122.2,588.6 L1123.6,588.8 L1125.0,589.4 L1126.3,590.3 L1127.4,591.4 L1128.2,592.7 L1128.8,594.1 L1129.0,595.5ZM934.9,438.9 L934.7,440.2 L934.1,441.3 L933.3,442.2 L932.2,442.7 L930.9,442.8 L929.5,442.6 L928.1,442.0 L926.8,441.1 L925.7,440.0 L924.9,438.7 L924.3,437.3 L924.1,435.9 L924.3,434.6 L924.9,433.5 L925.7,432.6 L926.8,432.1 L928.1,432.0 L929.5,432.2 L930.9,432.8 L932.2,433.7 L933.3,434.8 L934.1,436.1 L934.7,437.5 L934.9,438.9ZM903.7,502.6 L903.5,503.9 L902.9,505.0 L902.1,505.9 L901.0,506.4 L899.7,506.5 L898.3,506.3 L896.9,505.7 L895.6,504.8 L894.5,503.7 L893.7,502.4 L893.1,501.0 L892.9,499.6 L893.1,498.3 L893.7,497.2 L894.5,496.3 L895.6,495.8 L896.9,495.7 L898.3,495.9 L899.7,496.5 L901.0,497.4 L902.1,498.5 L902.9,499.8 L903.5,501.2 L903.7,502.6ZM903.7,640.9 L903.5,642.2 L902.9,643.3 L902.1,644.2 L901.0,644.7 L899.7,644.8 L898.3,644.6 L896.9,644.0 L895.6,643.1 L894.5,642.0 L893.7,640.7 L893.1,639.3 L892.9,637.9 L893.1,636.6 L893.7,635.5 L894.5,634.6 L895.6,634.1 L896.9,634.0 L898.3,634.2 L899.7,634.8 L901.0,635.7 L902.1,636.8 L902.9,638.1 L903.5,639.5 L903.7,640.9Z" fill="#dedede" stroke="#dedede" stroke-width="0.9" fill-rule="evenodd"/>
<path d="M1148.3,386.3 L1149.2,387.2 L1145.0,385.9 L1140.7,384.9 L1136.5,384.1 L1132.3,383.6 L1128.2,383.3 L1124.1,383.3 L1120.1,383.6 L1116.2,384.1 L1112.5,384.9 L1108.8,386.0 L1105.3,387.3 L1101.9,388.8 L1098.7,390.6 L1095.7,392.6 L1092.9,394.9 L1090.2,397.3 L1087.8,400.0 L1085.6,402.9 L1083.6,406.0 L1081.8,409.2 L1080.3,412.6 L1079.0,416.2 L1078.0,419.9 L1077.2,423.7 L1076.7,427.6 L1076.4,431.7 L1076.4,435.8 L1076.7,440.0 L1077.2,444.2 L1077.9,448.5 L1078.9,452.8 L1080.2,457.1 L1081.7,461.4 L1083.5,465.7 L1085.4,469.9 L1087.7,474.0 L1090.1,478.1 L1092.7,482.1 L1095.5,486.0 L1098.5,489.8 L1101.7,493.4 L1105.1,496.9 L1108.6,500.2 L1112.2,503.4 L1116.0,506.4 L1119.9,509.2 L1123.9,511.8 L1127.9,514.1 L1132.1,516.3 L1136.3,518.2 L1140.5,519.9 L1144.7,521.3 L1149.0,522.5 L1153.2,523.4 L1157.4,524.1 L1161.6,524.5 L1165.7,524.6 L1169.7,524.5 L1173.7,524.2 L1177.5,523.5 L1181.3,522.7 L1184.9,521.5 L1188.3,520.1 L1191.6,518.5 L1194.8,516.6 L1197.7,514.5 L1200.5,512.2 L1203.1,509.6 L1205.4,506.9 L1064.3,686.2 L1060.8,689.9 L1057.1,692.7 L1053.0,694.5 L1048.6,695.4 L1043.9,695.4 L1039.0,694.4 L897.7,654.4 L893.6,652.8 L890.2,650.7 L887.6,648.0 L885.8,644.8 L884.6,641.0 L884.3,636.6 L884.3,494.6 L912.3,434.6 L1040.7,357.2 L1043.6,355.7 L1046.5,354.7 L1049.5,354.2 L1052.5,354.1 L1055.6,354.5 L1058.7,355.3ZM1066.7,661.3 L1066.6,663.9 L1066.2,666.4 L1065.6,668.9 L1064.8,671.2 L1063.7,673.3 L1062.5,675.3 L1061.0,677.2 L1059.3,678.8 L1057.4,680.2 L1055.4,681.5 L1053.2,682.5 L1050.9,683.2 L1048.5,683.7 L1045.9,684.0 L1043.3,684.1 L1040.6,683.9 L1037.9,683.5 L1035.2,682.8 L1032.4,681.9 L1029.7,680.7 L1027.0,679.4 L1024.4,677.8 L1021.8,676.1 L1019.4,674.1 L1017.1,672.0 L1014.9,669.8 L1012.9,667.4 L1011.0,664.9 L1009.3,662.3 L1007.9,659.6 L1006.6,656.9 L1005.5,654.1 L1004.7,651.3 L1004.1,648.5 L1003.8,645.8 L1003.6,643.1 L1003.8,640.5 L1004.1,637.9 L1004.7,635.5 L1005.5,633.2 L1006.6,631.0 L1007.9,629.0 L1009.3,627.2 L1011.0,625.5 L1012.9,624.1 L1014.9,622.9 L1017.1,621.9 L1019.4,621.1 L1021.8,620.6 L1024.4,620.3 L1027.0,620.3 L1029.7,620.5 L1032.4,620.9 L1035.2,621.6 L1037.9,622.5 L1040.6,623.6 L1043.3,625.0 L1045.9,626.5 L1048.5,628.3 L1050.9,630.2 L1053.2,632.3 L1055.4,634.6 L1057.4,637.0 L1059.3,639.5 L1061.0,642.1 L1062.5,644.7 L1063.7,647.5 L1064.8,650.2 L1065.6,653.0 L1066.2,655.8 L1066.6,658.6 L1066.7,661.3ZM1033.0,546.4 L1032.9,549.0 L1032.5,551.6 L1031.9,554.1 L1031.1,556.4 L1030.0,558.6 L1028.7,560.6 L1027.2,562.5 L1025.5,564.2 L1023.6,565.6 L1021.6,566.8 L1019.4,567.8 L1017.0,568.6 L1014.6,569.2 L1012.0,569.5 L1009.3,569.5 L1006.6,569.3 L1003.8,568.9 L1001.1,568.2 L998.3,567.3 L995.5,566.1 L992.8,564.7 L990.1,563.2 L987.6,561.4 L985.1,559.4 L982.7,557.3 L980.5,555.0 L978.5,552.6 L976.6,550.0 L974.9,547.4 L973.4,544.7 L972.1,541.9 L971.1,539.1 L970.2,536.3 L969.6,533.5 L969.3,530.7 L969.1,528.0 L969.3,525.3 L969.6,522.7 L970.2,520.3 L971.1,517.9 L972.1,515.7 L973.4,513.7 L974.9,511.9 L976.6,510.2 L978.5,508.7 L980.5,507.5 L982.7,506.5 L985.1,505.7 L987.6,505.2 L990.1,504.9 L992.8,504.8 L995.5,505.0 L998.3,505.5 L1001.1,506.2 L1003.8,507.1 L1006.6,508.2 L1009.3,509.6 L1012.0,511.2 L1014.6,513.0 L1017.0,514.9 L1019.4,517.1 L1021.6,519.3 L1023.6,521.8 L1025.5,524.3 L1027.2,526.9 L1028.7,529.6 L1030.0,532.4 L1031.1,535.2 L1031.9,538.0 L1032.5,540.9 L1032.9,543.6 L1033.0,546.4ZM1059.2,370.3 L1059.0,371.6 L1058.5,372.7 L1057.6,373.5 L1056.5,374.1 L1055.2,374.2 L1053.9,374.0 L1052.5,373.4 L1051.2,372.5 L1050.1,371.4 L1049.2,370.0 L1048.7,368.6 L1048.5,367.2 L1048.7,365.9 L1049.2,364.8 L1050.1,364.0 L1051.2,363.5 L1052.5,363.4 L1053.9,363.6 L1055.2,364.2 L1056.5,365.0 L1057.6,366.2 L1058.5,367.5 L1059.0,368.9 L1059.2,370.3ZM1171.6,538.0 L1171.4,539.3 L1170.9,540.4 L1170.0,541.2 L1168.9,541.8 L1167.6,541.9 L1166.3,541.7 L1164.9,541.1 L1163.6,540.2 L1162.5,539.1 L1161.6,537.7 L1161.1,536.3 L1160.9,534.9 L1161.1,533.6 L1161.6,532.5 L1162.5,531.7 L1163.6,531.2 L1164.9,531.1 L1166.3,531.3 L1167.6,531.9 L1168.9,532.7 L1170.0,533.9 L1170.9,535.2 L1171.4,536.6 L1171.6,538.0ZM1127.9,596.3 L1127.7,597.6 L1127.2,598.7 L1126.3,599.5 L1125.2,600.1 L1123.9,600.2 L1122.6,600.0 L1121.2,599.4 L1119.9,598.5 L1118.8,597.4 L1117.9,596.0 L1117.4,594.6 L1117.2,593.2 L1117.4,591.9 L1117.9,590.8 L1118.8,590.0 L1119.9,589.5 L1121.2,589.4 L1122.6,589.6 L1123.9,590.2 L1125.2,591.0 L1126.3,592.2 L1127.2,593.5 L1127.7,594.9 L1127.9,596.3ZM933.8,439.7 L933.6,441.0 L933.1,442.1 L932.2,442.9 L931.1,443.5 L929.8,443.6 L928.5,443.4 L927.1,442.8 L925.8,441.9 L924.7,440.8 L923.8,439.4 L923.3,438.0 L923.1,436.6 L923.3,435.3 L923.8,434.2 L924.7,433.4 L925.8,432.9 L927.1,432.8 L928.5,433.0 L929.8,433.6 L931.1,434.4 L932.2,435.6 L933.1,436.9 L933.6,438.3 L933.8,439.7ZM902.6,503.4 L902.4,504.7 L901.9,505.8 L901.0,506.6 L899.9,507.2 L898.6,507.3 L897.3,507.1 L895.9,506.5 L894.6,505.6 L893.5,504.5 L892.6,503.1 L892.1,501.7 L891.9,500.3 L892.1,499.0 L892.6,497.9 L893.5,497.1 L894.6,496.6 L895.9,496.5 L897.3,496.7 L898.6,497.3 L899.9,498.1 L901.0,499.3 L901.9,500.6 L902.4,502.0 L902.6,503.4ZM902.6,641.7 L902.4,643.0 L901.9,644.1 L901.0,644.9 L899.9,645.5 L898.6,645.6 L897.3,645.4 L895.9,644.8 L894.6,643.9 L893.5,642.8 L892.6,641.4 L892.1,640.0 L891.9,638.6 L892.1,637.3 L892.6,636.2 L893.5,635.4 L894.6,634.9 L895.9,634.8 L897.3,635.0 L898.6,635.6 L899.9,636.4 L901.0,637.6 L901.9,638.9 L902.4,640.3 L902.6,641.7Z" fill="#dedede" stroke="#dedede" stroke-width="0.9" fill-rule="evenodd"/>
<path d="M1147.2,387.1 L1148.2,387.9 L1143.9,386.7 L1139.7,385.6 L1135.5,384.9 L1131.3,384.4 L1127.2,384.1 L1123.1,384.1 L1119.1,384.4 L1115.2,384.9 L1111.4,385.7 L1107.8,386.8 L1104.3,388.0 L1100.9,389.6 L1097.7,391.4 L1094.7,393.4 L1091.8,395.6 L1089.2,398.1 L1086.8,400.8 L1084.5,403.7 L1082.5,406.7 L1080.8,410.0 L1079.3,413.4 L1078.0,416.9 L1076.9,420.6 L1076.2,424.5 L1075.6,428.4 L1075.4,432.5 L1075.4,436.6 L1075.6,440.8 L1076.1,445.0 L1076.9,449.3 L1077.9,453.6 L1079.2,457.9 L1080.7,462.2 L1082.4,466.4 L1084.4,470.6 L1086.6,474.8 L1089.0,478.9 L1091.7,482.9 L1094.5,486.8 L1097.5,490.5 L1100.7,494.2 L1104.1,497.7 L1107.6,501.0 L1111.2,504.2 L1115.0,507.2 L1118.9,509.9 L1122.8,512.5 L1126.9,514.9 L1131.0,517.0 L1135.2,519.0 L1139.4,520.6 L1143.7,522.1 L1147.9,523.3 L1152.2,524.2 L1156.4,524.9 L1160.5,525.3 L1164.7,525.4 L1168.7,525.3 L1172.6,524.9 L1176.5,524.3 L1180.2,523.4 L1183.8,522.3 L1187.3,520.9 L1190.6,519.3 L1193.7,517.4 L1196.7,515.3 L1199.5,512.9 L1202.0,510.4 L1204.4,507.6 L1063.2,687.0 L1059.8,690.7 L1056.0,693.5 L1052.0,695.3 L1047.6,696.2 L1042.9,696.2 L1037.9,695.2 L896.7,655.2 L892.6,653.6 L889.2,651.5 L886.6,648.8 L884.7,645.6 L883.6,641.7 L883.2,637.4 L883.2,495.4 L911.2,435.4 L1039.7,358.0 L1042.5,356.5 L1045.5,355.5 L1048.4,355.0 L1051.5,354.9 L1054.6,355.3 L1057.7,356.1ZM1065.6,662.0 L1065.5,664.7 L1065.2,667.2 L1064.6,669.6 L1063.7,672.0 L1062.7,674.1 L1061.4,676.1 L1059.9,677.9 L1058.3,679.6 L1056.4,681.0 L1054.4,682.2 L1052.2,683.2 L1049.9,684.0 L1047.4,684.5 L1044.9,684.8 L1042.3,684.9 L1039.6,684.7 L1036.9,684.2 L1034.1,683.6 L1031.4,682.6 L1028.7,681.5 L1026.0,680.2 L1023.3,678.6 L1020.8,676.8 L1018.4,674.9 L1016.0,672.8 L1013.9,670.5 L1011.8,668.2 L1010.0,665.7 L1008.3,663.1 L1006.8,660.4 L1005.6,657.6 L1004.5,654.9 L1003.7,652.1 L1003.1,649.3 L1002.7,646.6 L1002.6,643.9 L1002.7,641.2 L1003.1,638.7 L1003.7,636.3 L1004.5,633.9 L1005.6,631.8 L1006.8,629.8 L1008.3,628.0 L1010.0,626.3 L1011.8,624.9 L1013.9,623.7 L1016.0,622.7 L1018.4,621.9 L1020.8,621.4 L1023.3,621.1 L1026.0,621.0 L1028.7,621.2 L1031.4,621.7 L1034.1,622.4 L1036.9,623.3 L1039.6,624.4 L1042.3,625.7 L1044.9,627.3 L1047.4,629.1 L1049.9,631.0 L1052.2,633.1 L1054.4,635.4 L1056.4,637.7 L1058.3,640.2 L1059.9,642.8 L1061.4,645.5 L1062.7,648.3 L1063.7,651.0 L1064.6,653.8 L1065.2,656.6 L1065.5,659.3 L1065.6,662.0ZM1032.0,547.2 L1031.8,549.8 L1031.5,552.4 L1030.9,554.9 L1030.0,557.2 L1029.0,559.4 L1027.7,561.4 L1026.2,563.3 L1024.5,564.9 L1022.6,566.4 L1020.5,567.6 L1018.3,568.6 L1016.0,569.4 L1013.5,569.9 L1010.9,570.2 L1008.3,570.3 L1005.6,570.1 L1002.8,569.6 L1000.0,569.0 L997.2,568.0 L994.5,566.9 L991.8,565.5 L989.1,563.9 L986.5,562.2 L984.1,560.2 L981.7,558.1 L979.5,555.8 L977.4,553.4 L975.6,550.8 L973.9,548.2 L972.4,545.5 L971.1,542.7 L970.0,539.9 L969.2,537.1 L968.6,534.3 L968.2,531.5 L968.1,528.7 L968.2,526.1 L968.6,523.5 L969.2,521.0 L970.0,518.7 L971.1,516.5 L972.4,514.5 L973.9,512.6 L975.6,511.0 L977.4,509.5 L979.5,508.3 L981.7,507.3 L984.1,506.5 L986.5,506.0 L989.1,505.7 L991.8,505.6 L994.5,505.8 L997.2,506.3 L1000.0,507.0 L1002.8,507.9 L1005.6,509.0 L1008.3,510.4 L1010.9,512.0 L1013.5,513.7 L1016.0,515.7 L1018.3,517.8 L1020.5,520.1 L1022.6,522.5 L1024.5,525.1 L1026.2,527.7 L1027.7,530.4 L1029.0,533.2 L1030.0,536.0 L1030.9,538.8 L1031.5,541.6 L1031.8,544.4 L1032.0,547.2ZM1058.2,371.1 L1058.0,372.4 L1057.5,373.5 L1056.6,374.3 L1055.5,374.8 L1054.2,375.0 L1052.8,374.8 L1051.4,374.2 L1050.1,373.3 L1049.0,372.1 L1048.2,370.8 L1047.7,369.4 L1047.5,368.0 L1047.7,366.7 L1048.2,365.6 L1049.0,364.8 L1050.1,364.3 L1051.4,364.1 L1052.8,364.4 L1054.2,364.9 L1055.5,365.8 L1056.6,367.0 L1057.5,368.3 L1058.0,369.7 L1058.2,371.1ZM1170.6,538.8 L1170.4,540.1 L1169.9,541.2 L1169.0,542.0 L1167.9,542.5 L1166.6,542.7 L1165.2,542.5 L1163.8,541.9 L1162.5,541.0 L1161.4,539.8 L1160.6,538.5 L1160.1,537.1 L1159.9,535.7 L1160.1,534.4 L1160.6,533.3 L1161.4,532.5 L1162.5,532.0 L1163.8,531.8 L1165.2,532.0 L1166.6,532.6 L1167.9,533.5 L1169.0,534.7 L1169.9,536.0 L1170.4,537.4 L1170.6,538.8ZM1126.9,597.1 L1126.7,598.4 L1126.2,599.5 L1125.3,600.3 L1124.2,600.8 L1122.9,601.0 L1121.5,600.8 L1120.1,600.2 L1118.8,599.3 L1117.7,598.1 L1116.9,596.8 L1116.4,595.4 L1116.2,594.0 L1116.4,592.7 L1116.9,591.6 L1117.7,590.8 L1118.8,590.3 L1120.1,590.1 L1121.5,590.4 L1122.9,590.9 L1124.2,591.8 L1125.3,593.0 L1126.2,594.3 L1126.7,595.7 L1126.9,597.1ZM932.8,440.5 L932.6,441.8 L932.1,442.9 L931.2,443.7 L930.1,444.2 L928.8,444.4 L927.4,444.2 L926.0,443.6 L924.7,442.7 L923.6,441.5 L922.8,440.2 L922.3,438.8 L922.1,437.4 L922.3,436.1 L922.8,435.0 L923.6,434.2 L924.7,433.7 L926.0,433.5 L927.4,433.8 L928.8,434.3 L930.1,435.2 L931.2,436.4 L932.1,437.7 L932.6,439.1 L932.8,440.5ZM901.6,504.2 L901.4,505.5 L900.9,506.6 L900.0,507.4 L898.9,507.9 L897.6,508.1 L896.2,507.9 L894.8,507.3 L893.5,506.4 L892.4,505.2 L891.6,503.9 L891.1,502.5 L890.9,501.1 L891.1,499.8 L891.6,498.7 L892.4,497.9 L893.5,497.4 L894.8,497.2 L896.2,497.5 L897.6,498.0 L898.9,498.9 L900.0,500.1 L900.9,501.4 L901.4,502.8 L901.6,504.2ZM901.6,642.5 L901.4,643.8 L900.9,644.9 L900.0,645.7 L898.9,646.2 L897.6,646.4 L896.2,646.2 L894.8,645.6 L893.5,644.7 L892.4,643.5 L891.6,642.2 L891.1,640.8 L890.9,639.4 L891.1,638.1 L891.6,637.0 L892.4,636.2 L893.5,635.7 L894.8,635.5 L896.2,635.8 L897.6,636.3 L898.9,637.2 L900.0,638.4 L900.9,639.7 L901.4,641.1 L901.6,642.5Z" fill="#dedede" stroke="#dedede" stroke-width="0.9" fill-rule="evenodd"/>
<path d="M1146.2,387.8 L1147.1,388.7 L1142.9,387.4 L1138.7,386.4 L1134.4,385.6 L1130.3,385.1 L1126.1,384.9 L1122.0,384.9 L1118.1,385.2 L1114.2,385.7 L1110.4,386.5 L1106.7,387.5 L1103.2,388.8 L1099.9,390.4 L1096.7,392.2 L1093.6,394.2 L1090.8,396.4 L1088.2,398.9 L1085.7,401.6 L1083.5,404.4 L1081.5,407.5 L1079.7,410.7 L1078.2,414.2 L1076.9,417.7 L1075.9,421.4 L1075.1,425.3 L1074.6,429.2 L1074.3,433.2 L1074.3,437.4 L1074.6,441.5 L1075.1,445.8 L1075.9,450.1 L1076.9,454.3 L1078.1,458.7 L1079.6,462.9 L1081.4,467.2 L1083.4,471.4 L1085.6,475.6 L1088.0,479.7 L1090.6,483.7 L1093.5,487.5 L1096.5,491.3 L1099.7,495.0 L1103.0,498.5 L1106.5,501.8 L1110.2,505.0 L1113.9,507.9 L1117.8,510.7 L1121.8,513.3 L1125.9,515.7 L1130.0,517.8 L1134.2,519.7 L1138.4,521.4 L1142.6,522.8 L1146.9,524.0 L1151.1,525.0 L1155.3,525.6 L1159.5,526.0 L1163.6,526.2 L1167.7,526.1 L1171.6,525.7 L1175.5,525.1 L1179.2,524.2 L1182.8,523.1 L1186.3,521.7 L1189.6,520.0 L1192.7,518.2 L1195.7,516.0 L1198.4,513.7 L1201.0,511.2 L1203.3,508.4 L1062.2,687.8 L1058.7,691.5 L1055.0,694.3 L1050.9,696.1 L1046.5,697.0 L1041.9,696.9 L1036.9,696.0 L895.7,655.9 L891.5,654.4 L888.2,652.3 L885.6,649.6 L883.7,646.3 L882.6,642.5 L882.2,638.1 L882.2,496.1 L910.2,436.1 L1038.6,358.8 L1041.5,357.3 L1044.4,356.3 L1047.4,355.7 L1050.4,355.6 L1053.5,356.0 L1056.6,356.9ZM1064.6,662.8 L1064.5,665.4 L1064.1,668.0 L1063.5,670.4 L1062.7,672.7 L1061.7,674.9 L1060.4,676.9 L1058.9,678.7 L1057.2,680.4 L1055.4,681.8 L1053.3,683.0 L1051.2,684.0 L1048.8,684.8 L1046.4,685.3 L1043.9,685.6 L1041.2,685.6 L1038.6,685.4 L1035.8,685.0 L1033.1,684.3 L1030.3,683.4 L1027.6,682.3 L1024.9,680.9 L1022.3,679.4 L1019.8,677.6 L1017.3,675.7 L1015.0,673.6 L1012.8,671.3 L1010.8,668.9 L1008.9,666.4 L1007.3,663.8 L1005.8,661.2 L1004.5,658.4 L1003.5,655.7 L1002.6,652.9 L1002.0,650.1 L1001.7,647.3 L1001.6,644.6 L1001.7,642.0 L1002.0,639.5 L1002.6,637.0 L1003.5,634.7 L1004.5,632.6 L1005.8,630.6 L1007.3,628.7 L1008.9,627.1 L1010.8,625.7 L1012.8,624.4 L1015.0,623.4 L1017.3,622.7 L1019.8,622.2 L1022.3,621.9 L1024.9,621.8 L1027.6,622.0 L1030.3,622.4 L1033.1,623.1 L1035.8,624.0 L1038.6,625.2 L1041.2,626.5 L1043.9,628.1 L1046.4,629.8 L1048.8,631.8 L1051.2,633.9 L1053.3,636.1 L1055.4,638.5 L1057.2,641.0 L1058.9,643.6 L1060.4,646.3 L1061.7,649.0 L1062.7,651.8 L1063.5,654.6 L1064.1,657.4 L1064.5,660.1 L1064.6,662.8ZM1030.9,547.9 L1030.8,550.6 L1030.4,553.2 L1029.8,555.6 L1029.0,558.0 L1027.9,560.2 L1026.6,562.2 L1025.1,564.0 L1023.4,565.7 L1021.6,567.2 L1019.5,568.4 L1017.3,569.4 L1015.0,570.2 L1012.5,570.7 L1009.9,571.0 L1007.3,571.1 L1004.5,570.9 L1001.8,570.4 L999.0,569.7 L996.2,568.8 L993.4,567.7 L990.7,566.3 L988.1,564.7 L985.5,562.9 L983.0,561.0 L980.7,558.8 L978.5,556.6 L976.4,554.1 L974.5,551.6 L972.8,549.0 L971.3,546.3 L970.0,543.5 L969.0,540.7 L968.1,537.9 L967.5,535.0 L967.2,532.3 L967.1,529.5 L967.2,526.9 L967.5,524.3 L968.1,521.8 L969.0,519.5 L970.0,517.3 L971.3,515.3 L972.8,513.4 L974.5,511.7 L976.4,510.3 L978.5,509.1 L980.7,508.1 L983.0,507.3 L985.5,506.7 L988.1,506.4 L990.7,506.4 L993.4,506.6 L996.2,507.0 L999.0,507.7 L1001.8,508.6 L1004.5,509.8 L1007.3,511.2 L1009.9,512.7 L1012.5,514.5 L1015.0,516.5 L1017.3,518.6 L1019.5,520.9 L1021.6,523.3 L1023.4,525.9 L1025.1,528.5 L1026.6,531.2 L1027.9,534.0 L1029.0,536.8 L1029.8,539.6 L1030.4,542.4 L1030.8,545.2 L1030.9,547.9ZM1057.1,371.9 L1057.0,373.2 L1056.4,374.3 L1055.6,375.1 L1054.5,375.6 L1053.2,375.7 L1051.8,375.5 L1050.4,374.9 L1049.1,374.1 L1048.0,372.9 L1047.1,371.6 L1046.6,370.2 L1046.4,368.8 L1046.6,367.5 L1047.1,366.4 L1048.0,365.6 L1049.1,365.0 L1050.4,364.9 L1051.8,365.1 L1053.2,365.7 L1054.5,366.6 L1055.6,367.7 L1056.4,369.1 L1057.0,370.5 L1057.1,371.9ZM1169.5,539.6 L1169.4,540.9 L1168.8,542.0 L1168.0,542.8 L1166.9,543.3 L1165.6,543.4 L1164.2,543.2 L1162.8,542.6 L1161.5,541.8 L1160.4,540.6 L1159.5,539.3 L1159.0,537.9 L1158.8,536.5 L1159.0,535.2 L1159.5,534.1 L1160.4,533.3 L1161.5,532.7 L1162.8,532.6 L1164.2,532.8 L1165.6,533.4 L1166.9,534.3 L1168.0,535.4 L1168.8,536.8 L1169.4,538.2 L1169.5,539.6ZM1125.8,597.9 L1125.7,599.2 L1125.1,600.3 L1124.3,601.1 L1123.2,601.6 L1121.9,601.7 L1120.5,601.5 L1119.1,600.9 L1117.8,600.1 L1116.7,598.9 L1115.8,597.6 L1115.3,596.2 L1115.1,594.8 L1115.3,593.5 L1115.8,592.4 L1116.7,591.6 L1117.8,591.0 L1119.1,590.9 L1120.5,591.1 L1121.9,591.7 L1123.2,592.6 L1124.3,593.7 L1125.1,595.1 L1125.7,596.5 L1125.8,597.9ZM931.7,441.3 L931.6,442.6 L931.0,443.7 L930.2,444.5 L929.1,445.0 L927.8,445.1 L926.4,444.9 L925.0,444.3 L923.7,443.5 L922.6,442.3 L921.7,441.0 L921.2,439.6 L921.0,438.2 L921.2,436.9 L921.7,435.8 L922.6,435.0 L923.7,434.4 L925.0,434.3 L926.4,434.5 L927.8,435.1 L929.1,436.0 L930.2,437.1 L931.0,438.5 L931.6,439.9 L931.7,441.3ZM900.5,505.0 L900.4,506.3 L899.8,507.4 L899.0,508.2 L897.9,508.7 L896.6,508.8 L895.2,508.6 L893.8,508.0 L892.5,507.2 L891.4,506.0 L890.5,504.7 L890.0,503.3 L889.8,501.9 L890.0,500.6 L890.5,499.5 L891.4,498.7 L892.5,498.1 L893.8,498.0 L895.2,498.2 L896.6,498.8 L897.9,499.7 L899.0,500.8 L899.8,502.2 L900.4,503.6 L900.5,505.0ZM900.5,643.3 L900.4,644.6 L899.8,645.7 L899.0,646.5 L897.9,647.0 L896.6,647.1 L895.2,646.9 L893.8,646.3 L892.5,645.5 L891.4,644.3 L890.5,643.0 L890.0,641.6 L889.8,640.2 L890.0,638.9 L890.5,637.8 L891.4,637.0 L892.5,636.4 L893.8,636.3 L895.2,636.5 L896.6,637.1 L897.9,638.0 L899.0,639.1 L899.8,640.5 L900.4,641.9 L900.5,643.3Z" fill="#dedede" stroke="#dedede" stroke-width="0.9" fill-rule="evenodd"/>
<path d="M1145.2,388.6 L1146.1,389.5 L1141.9,388.2 L1137.6,387.2 L1133.4,386.4 L1129.2,385.9 L1125.1,385.7 L1121.0,385.7 L1117.0,385.9 L1113.1,386.5 L1109.4,387.3 L1105.7,388.3 L1102.2,389.6 L1098.8,391.1 L1095.6,392.9 L1092.6,394.9 L1089.8,397.2 L1087.1,399.7 L1084.7,402.3 L1082.5,405.2 L1080.5,408.3 L1078.7,411.5 L1077.2,414.9 L1075.9,418.5 L1074.9,422.2 L1074.1,426.0 L1073.6,430.0 L1073.3,434.0 L1073.3,438.1 L1073.5,442.3 L1074.1,446.6 L1074.8,450.8 L1075.8,455.1 L1077.1,459.4 L1078.6,463.7 L1080.4,468.0 L1082.3,472.2 L1084.5,476.4 L1087.0,480.4 L1089.6,484.4 L1092.4,488.3 L1095.4,492.1 L1098.6,495.7 L1102.0,499.2 L1105.5,502.6 L1109.1,505.7 L1112.9,508.7 L1116.8,511.5 L1120.8,514.1 L1124.8,516.4 L1129.0,518.6 L1133.2,520.5 L1137.4,522.2 L1141.6,523.6 L1145.9,524.8 L1150.1,525.7 L1154.3,526.4 L1158.5,526.8 L1162.6,527.0 L1166.6,526.9 L1170.6,526.5 L1174.4,525.9 L1178.2,525.0 L1181.8,523.8 L1185.2,522.4 L1188.5,520.8 L1191.7,518.9 L1194.6,516.8 L1197.4,514.5 L1199.9,511.9 L1202.3,509.2 L1061.1,688.5 L1057.7,692.2 L1053.9,695.0 L1049.9,696.9 L1045.5,697.8 L1040.8,697.7 L1035.9,696.7 L894.6,656.7 L890.5,655.2 L887.1,653.0 L884.5,650.4 L882.6,647.1 L881.5,643.3 L881.1,638.9 L881.1,496.9 L909.1,436.9 L1037.6,359.6 L1040.5,358.1 L1043.4,357.1 L1046.4,356.5 L1049.4,356.4 L1052.5,356.8 L1055.6,357.7ZM1063.6,663.6 L1063.4,666.2 L1063.1,668.8 L1062.5,671.2 L1061.7,673.5 L1060.6,675.7 L1059.3,677.7 L1057.9,679.5 L1056.2,681.1 L1054.3,682.6 L1052.3,683.8 L1050.1,684.8 L1047.8,685.5 L1045.4,686.1 L1042.8,686.4 L1040.2,686.4 L1037.5,686.2 L1034.8,685.8 L1032.1,685.1 L1029.3,684.2 L1026.6,683.1 L1023.9,681.7 L1021.3,680.1 L1018.7,678.4 L1016.3,676.5 L1014.0,674.4 L1011.8,672.1 L1009.8,669.7 L1007.9,667.2 L1006.2,664.6 L1004.8,661.9 L1003.5,659.2 L1002.4,656.4 L1001.6,653.6 L1001.0,650.9 L1000.7,648.1 L1000.5,645.4 L1000.7,642.8 L1001.0,640.2 L1001.6,637.8 L1002.4,635.5 L1003.5,633.3 L1004.8,631.3 L1006.2,629.5 L1007.9,627.9 L1009.8,626.4 L1011.8,625.2 L1014.0,624.2 L1016.3,623.5 L1018.7,622.9 L1021.3,622.6 L1023.9,622.6 L1026.6,622.8 L1029.3,623.2 L1032.1,623.9 L1034.8,624.8 L1037.5,625.9 L1040.2,627.3 L1042.8,628.9 L1045.4,630.6 L1047.8,632.5 L1050.1,634.6 L1052.3,636.9 L1054.3,639.3 L1056.2,641.8 L1057.9,644.4 L1059.3,647.1 L1060.6,649.8 L1061.7,652.6 L1062.5,655.4 L1063.1,658.1 L1063.4,660.9 L1063.6,663.6ZM1029.9,548.7 L1029.8,551.4 L1029.4,554.0 L1028.8,556.4 L1028.0,558.8 L1026.9,560.9 L1025.6,563.0 L1024.1,564.8 L1022.4,566.5 L1020.5,567.9 L1018.5,569.2 L1016.3,570.2 L1013.9,571.0 L1011.4,571.5 L1008.9,571.8 L1006.2,571.8 L1003.5,571.6 L1000.7,571.2 L997.9,570.5 L995.2,569.6 L992.4,568.4 L989.7,567.1 L987.0,565.5 L984.5,563.7 L982.0,561.7 L979.6,559.6 L977.4,557.3 L975.4,554.9 L973.5,552.4 L971.8,549.7 L970.3,547.0 L969.0,544.3 L967.9,541.5 L967.1,538.6 L966.5,535.8 L966.1,533.0 L966.0,530.3 L966.1,527.6 L966.5,525.0 L967.1,522.6 L967.9,520.2 L969.0,518.1 L970.3,516.0 L971.8,514.2 L973.5,512.5 L975.4,511.1 L977.4,509.8 L979.6,508.8 L982.0,508.0 L984.5,507.5 L987.0,507.2 L989.7,507.2 L992.4,507.4 L995.2,507.8 L997.9,508.5 L1000.7,509.4 L1003.5,510.6 L1006.2,511.9 L1008.9,513.5 L1011.4,515.3 L1013.9,517.3 L1016.3,519.4 L1018.5,521.7 L1020.5,524.1 L1022.4,526.6 L1024.1,529.3 L1025.6,532.0 L1026.9,534.7 L1028.0,537.5 L1028.8,540.4 L1029.4,543.2 L1029.8,546.0 L1029.9,548.7ZM1056.1,372.6 L1055.9,373.9 L1055.4,375.0 L1054.5,375.9 L1053.4,376.4 L1052.1,376.5 L1050.8,376.3 L1049.4,375.7 L1048.1,374.8 L1047.0,373.7 L1046.1,372.4 L1045.6,371.0 L1045.4,369.6 L1045.6,368.3 L1046.1,367.2 L1047.0,366.3 L1048.1,365.8 L1049.4,365.7 L1050.8,365.9 L1052.1,366.5 L1053.4,367.4 L1054.5,368.5 L1055.4,369.8 L1055.9,371.2 L1056.1,372.6ZM1168.5,540.3 L1168.3,541.6 L1167.8,542.7 L1166.9,543.6 L1165.8,544.1 L1164.5,544.2 L1163.2,544.0 L1161.8,543.4 L1160.5,542.5 L1159.4,541.4 L1158.5,540.1 L1158.0,538.7 L1157.8,537.3 L1158.0,536.0 L1158.5,534.9 L1159.4,534.0 L1160.5,533.5 L1161.8,533.4 L1163.2,533.6 L1164.5,534.2 L1165.8,535.1 L1166.9,536.2 L1167.8,537.5 L1168.3,538.9 L1168.5,540.3ZM1124.8,598.6 L1124.6,599.9 L1124.1,601.0 L1123.2,601.9 L1122.1,602.4 L1120.8,602.5 L1119.5,602.3 L1118.1,601.7 L1116.8,600.8 L1115.7,599.7 L1114.8,598.4 L1114.3,597.0 L1114.1,595.6 L1114.3,594.3 L1114.8,593.2 L1115.7,592.3 L1116.8,591.8 L1118.1,591.7 L1119.5,591.9 L1120.8,592.5 L1122.1,593.4 L1123.2,594.5 L1124.1,595.8 L1124.6,597.2 L1124.8,598.6ZM930.7,442.0 L930.5,443.3 L930.0,444.4 L929.1,445.3 L928.0,445.8 L926.7,445.9 L925.4,445.7 L924.0,445.1 L922.7,444.2 L921.6,443.1 L920.7,441.8 L920.2,440.4 L920.0,439.0 L920.2,437.7 L920.7,436.6 L921.6,435.7 L922.7,435.2 L924.0,435.1 L925.4,435.3 L926.7,435.9 L928.0,436.8 L929.1,437.9 L930.0,439.2 L930.5,440.6 L930.7,442.0ZM899.5,505.7 L899.3,507.0 L898.8,508.1 L897.9,509.0 L896.8,509.5 L895.5,509.6 L894.1,509.4 L892.8,508.8 L891.5,507.9 L890.4,506.8 L889.5,505.5 L889.0,504.1 L888.8,502.7 L889.0,501.4 L889.5,500.3 L890.4,499.4 L891.5,498.9 L892.8,498.8 L894.1,499.0 L895.5,499.6 L896.8,500.5 L897.9,501.6 L898.8,502.9 L899.3,504.3 L899.5,505.7ZM899.5,644.0 L899.3,645.3 L898.8,646.4 L897.9,647.3 L896.8,647.8 L895.5,647.9 L894.1,647.7 L892.8,647.1 L891.5,646.2 L890.4,645.1 L889.5,643.8 L889.0,642.4 L888.8,641.0 L889.0,639.7 L889.5,638.6 L890.4,637.7 L891.5,637.2 L892.8,637.1 L894.1,637.3 L895.5,637.9 L896.8,638.8 L897.9,639.9 L898.8,641.2 L899.3,642.6 L899.5,644.0Z" fill="#dedede" stroke="#dedede" stroke-width="0.9" fill-rule="evenodd"/>
<path d="M1144.1,389.4 L1145.1,390.3 L1140.8,389.0 L1136.6,388.0 L1132.4,387.2 L1128.2,386.7 L1124.0,386.4 L1120.0,386.4 L1116.0,386.7 L1112.1,387.2 L1108.3,388.0 L1104.7,389.1 L1101.1,390.4 L1097.8,391.9 L1094.6,393.7 L1091.6,395.7 L1088.7,398.0 L1086.1,400.4 L1083.6,403.1 L1081.4,406.0 L1079.4,409.1 L1077.7,412.3 L1076.1,415.7 L1074.9,419.3 L1073.8,423.0 L1073.1,426.8 L1072.5,430.7 L1072.3,434.8 L1072.3,438.9 L1072.5,443.1 L1073.0,447.3 L1073.8,451.6 L1074.8,455.9 L1076.1,460.2 L1077.6,464.5 L1079.3,468.8 L1081.3,473.0 L1083.5,477.1 L1085.9,481.2 L1088.6,485.2 L1091.4,489.1 L1094.4,492.9 L1097.6,496.5 L1100.9,500.0 L1104.5,503.3 L1108.1,506.5 L1111.9,509.5 L1115.8,512.3 L1119.7,514.9 L1123.8,517.2 L1127.9,519.4 L1132.1,521.3 L1136.3,523.0 L1140.6,524.4 L1144.8,525.6 L1149.1,526.5 L1153.3,527.2 L1157.4,527.6 L1161.5,527.7 L1165.6,527.6 L1169.5,527.3 L1173.4,526.6 L1177.1,525.8 L1180.7,524.6 L1184.2,523.2 L1187.5,521.6 L1190.6,519.7 L1193.6,517.6 L1196.3,515.3 L1198.9,512.7 L1201.3,510.0 L1060.1,689.3 L1056.7,693.0 L1052.9,695.8 L1048.8,697.6 L1044.5,698.5 L1039.8,698.5 L1034.8,697.5 L893.6,657.5 L889.5,655.9 L886.1,653.8 L883.5,651.1 L881.6,647.9 L880.5,644.1 L880.1,639.7 L880.1,497.7 L908.1,437.7 L1036.5,360.3 L1039.4,358.8 L1042.4,357.8 L1045.3,357.3 L1048.4,357.2 L1051.4,357.6 L1054.6,358.4ZM1062.5,664.4 L1062.4,667.0 L1062.1,669.5 L1061.5,672.0 L1060.6,674.3 L1059.6,676.4 L1058.3,678.4 L1056.8,680.3 L1055.2,681.9 L1053.3,683.3 L1051.3,684.6 L1049.1,685.6 L1046.8,686.3 L1044.3,686.8 L1041.8,687.1 L1039.2,687.2 L1036.5,687.0 L1033.8,686.6 L1031.0,685.9 L1028.3,685.0 L1025.5,683.8 L1022.9,682.5 L1020.2,680.9 L1017.7,679.2 L1015.3,677.2 L1012.9,675.1 L1010.8,672.9 L1008.7,670.5 L1006.9,668.0 L1005.2,665.4 L1003.7,662.7 L1002.4,660.0 L1001.4,657.2 L1000.6,654.4 L1000.0,651.6 L999.6,648.9 L999.5,646.2 L999.6,643.6 L1000.0,641.0 L1000.6,638.6 L1001.4,636.3 L1002.4,634.1 L1003.7,632.1 L1005.2,630.3 L1006.9,628.6 L1008.7,627.2 L1010.8,626.0 L1012.9,625.0 L1015.3,624.2 L1017.7,623.7 L1020.2,623.4 L1022.9,623.4 L1025.5,623.6 L1028.3,624.0 L1031.0,624.7 L1033.8,625.6 L1036.5,626.7 L1039.2,628.1 L1041.8,629.6 L1044.3,631.4 L1046.8,633.3 L1049.1,635.4 L1051.3,637.7 L1053.3,640.1 L1055.2,642.6 L1056.8,645.2 L1058.3,647.8 L1059.6,650.6 L1060.6,653.3 L1061.5,656.1 L1062.1,658.9 L1062.4,661.7 L1062.5,664.4ZM1028.8,549.5 L1028.7,552.1 L1028.4,554.7 L1027.8,557.2 L1026.9,559.5 L1025.9,561.7 L1024.6,563.7 L1023.1,565.6 L1021.4,567.3 L1019.5,568.7 L1017.4,569.9 L1015.2,570.9 L1012.9,571.7 L1010.4,572.3 L1007.8,572.6 L1005.2,572.6 L1002.5,572.4 L999.7,572.0 L996.9,571.3 L994.1,570.4 L991.4,569.2 L988.6,567.8 L986.0,566.3 L983.4,564.5 L980.9,562.5 L978.6,560.4 L976.4,558.1 L974.3,555.7 L972.5,553.1 L970.8,550.5 L969.3,547.8 L968.0,545.0 L966.9,542.2 L966.1,539.4 L965.5,536.6 L965.1,533.8 L965.0,531.1 L965.1,528.4 L965.5,525.8 L966.1,523.4 L966.9,521.0 L968.0,518.8 L969.3,516.8 L970.8,515.0 L972.5,513.3 L974.3,511.8 L976.4,510.6 L978.6,509.6 L980.9,508.8 L983.4,508.3 L986.0,508.0 L988.6,507.9 L991.4,508.1 L994.1,508.6 L996.9,509.3 L999.7,510.2 L1002.5,511.3 L1005.2,512.7 L1007.8,514.3 L1010.4,516.1 L1012.9,518.0 L1015.2,520.2 L1017.4,522.4 L1019.5,524.9 L1021.4,527.4 L1023.1,530.0 L1024.6,532.7 L1025.9,535.5 L1026.9,538.3 L1027.8,541.1 L1028.4,544.0 L1028.7,546.7 L1028.8,549.5ZM1055.1,373.4 L1054.9,374.7 L1054.4,375.8 L1053.5,376.6 L1052.4,377.2 L1051.1,377.3 L1049.7,377.1 L1048.3,376.5 L1047.0,375.6 L1045.9,374.5 L1045.1,373.1 L1044.5,371.7 L1044.4,370.3 L1044.5,369.0 L1045.1,367.9 L1045.9,367.1 L1047.0,366.6 L1048.3,366.5 L1049.7,366.7 L1051.1,367.3 L1052.4,368.1 L1053.5,369.3 L1054.4,370.6 L1054.9,372.0 L1055.1,373.4ZM1167.5,541.1 L1167.3,542.4 L1166.8,543.5 L1165.9,544.3 L1164.8,544.9 L1163.5,545.0 L1162.1,544.8 L1160.7,544.2 L1159.4,543.3 L1158.3,542.2 L1157.5,540.8 L1156.9,539.4 L1156.8,538.0 L1156.9,536.7 L1157.5,535.6 L1158.3,534.8 L1159.4,534.3 L1160.7,534.2 L1162.1,534.4 L1163.5,535.0 L1164.8,535.8 L1165.9,537.0 L1166.8,538.3 L1167.3,539.7 L1167.5,541.1ZM1123.8,599.4 L1123.6,600.7 L1123.1,601.8 L1122.2,602.6 L1121.1,603.2 L1119.8,603.3 L1118.4,603.1 L1117.0,602.5 L1115.7,601.6 L1114.6,600.5 L1113.8,599.1 L1113.2,597.7 L1113.1,596.3 L1113.2,595.0 L1113.8,593.9 L1114.6,593.1 L1115.7,592.6 L1117.0,592.5 L1118.4,592.7 L1119.8,593.3 L1121.1,594.1 L1122.2,595.3 L1123.1,596.6 L1123.6,598.0 L1123.8,599.4ZM929.7,442.8 L929.5,444.1 L929.0,445.2 L928.1,446.0 L927.0,446.6 L925.7,446.7 L924.3,446.5 L922.9,445.9 L921.6,445.0 L920.5,443.9 L919.7,442.5 L919.1,441.1 L919.0,439.7 L919.1,438.4 L919.7,437.3 L920.5,436.5 L921.6,436.0 L922.9,435.9 L924.3,436.1 L925.7,436.7 L927.0,437.5 L928.1,438.7 L929.0,440.0 L929.5,441.4 L929.7,442.8ZM898.5,506.5 L898.3,507.8 L897.8,508.9 L896.9,509.7 L895.8,510.3 L894.5,510.4 L893.1,510.2 L891.7,509.6 L890.4,508.7 L889.3,507.6 L888.5,506.2 L887.9,504.8 L887.8,503.4 L887.9,502.1 L888.5,501.0 L889.3,500.2 L890.4,499.7 L891.7,499.6 L893.1,499.8 L894.5,500.4 L895.8,501.2 L896.9,502.4 L897.8,503.7 L898.3,505.1 L898.5,506.5ZM898.5,644.8 L898.3,646.1 L897.8,647.2 L896.9,648.0 L895.8,648.6 L894.5,648.7 L893.1,648.5 L891.7,647.9 L890.4,647.0 L889.3,645.9 L888.5,644.5 L887.9,643.1 L887.8,641.7 L887.9,640.4 L888.5,639.3 L889.3,638.5 L890.4,638.0 L891.7,637.9 L893.1,638.1 L894.5,638.7 L895.8,639.5 L896.9,640.7 L897.8,642.0 L898.3,643.4 L898.5,644.8Z" fill="#dedede" stroke="#dedede" stroke-width="0.9" fill-rule="evenodd"/>
<path d="M1143.1,390.1 L1144.0,391.0 L1139.8,389.8 L1135.5,388.7 L1131.3,388.0 L1127.1,387.5 L1123.0,387.2 L1118.9,387.2 L1115.0,387.5 L1111.1,388.0 L1107.3,388.8 L1103.6,389.9 L1100.1,391.1 L1096.7,392.7 L1093.5,394.5 L1090.5,396.5 L1087.7,398.7 L1085.0,401.2 L1082.6,403.9 L1080.4,406.8 L1078.4,409.8 L1076.6,413.1 L1075.1,416.5 L1073.8,420.0 L1072.8,423.7 L1072.0,427.6 L1071.5,431.5 L1071.2,435.6 L1071.2,439.7 L1071.5,443.9 L1072.0,448.1 L1072.7,452.4 L1073.8,456.7 L1075.0,461.0 L1076.5,465.3 L1078.3,469.5 L1080.3,473.7 L1082.5,477.9 L1084.9,482.0 L1087.5,486.0 L1090.3,489.9 L1093.4,493.6 L1096.6,497.3 L1099.9,500.8 L1103.4,504.1 L1107.1,507.3 L1110.8,510.3 L1114.7,513.0 L1118.7,515.6 L1122.8,518.0 L1126.9,520.1 L1131.1,522.1 L1135.3,523.7 L1139.5,525.2 L1143.8,526.4 L1148.0,527.3 L1152.2,528.0 L1156.4,528.4 L1160.5,528.5 L1164.5,528.4 L1168.5,528.0 L1172.3,527.4 L1176.1,526.5 L1179.7,525.4 L1183.1,524.0 L1186.4,522.4 L1189.6,520.5 L1192.5,518.4 L1195.3,516.0 L1197.9,513.5 L1200.2,510.7 L1059.1,690.1 L1055.6,693.8 L1051.9,696.6 L1047.8,698.4 L1043.4,699.3 L1038.8,699.3 L1033.8,698.3 L892.5,658.3 L888.4,656.7 L885.1,654.6 L882.4,651.9 L880.6,648.7 L879.4,644.8 L879.1,640.5 L879.1,498.4 L907.1,438.4 L1035.5,361.1 L1038.4,359.6 L1041.3,358.6 L1044.3,358.1 L1047.3,358.0 L1050.4,358.4 L1053.5,359.2ZM1061.5,665.1 L1061.4,667.8 L1061.0,670.3 L1060.4,672.7 L1059.6,675.1 L1058.5,677.2 L1057.3,679.2 L1055.8,681.0 L1054.1,682.7 L1052.3,684.1 L1050.2,685.3 L1048.1,686.3 L1045.7,687.1 L1043.3,687.6 L1040.8,687.9 L1038.1,688.0 L1035.4,687.8 L1032.7,687.3 L1030.0,686.7 L1027.2,685.7 L1024.5,684.6 L1021.8,683.3 L1019.2,681.7 L1016.7,679.9 L1014.2,678.0 L1011.9,675.9 L1009.7,673.6 L1007.7,671.3 L1005.8,668.8 L1004.2,666.2 L1002.7,663.5 L1001.4,660.7 L1000.4,658.0 L999.5,655.2 L998.9,652.4 L998.6,649.7 L998.5,647.0 L998.6,644.3 L998.9,641.8 L999.5,639.4 L1000.4,637.0 L1001.4,634.9 L1002.7,632.9 L1004.2,631.1 L1005.8,629.4 L1007.7,628.0 L1009.7,626.8 L1011.9,625.8 L1014.2,625.0 L1016.7,624.5 L1019.2,624.2 L1021.8,624.1 L1024.5,624.3 L1027.2,624.8 L1030.0,625.5 L1032.7,626.4 L1035.4,627.5 L1038.1,628.8 L1040.8,630.4 L1043.3,632.2 L1045.7,634.1 L1048.1,636.2 L1050.2,638.5 L1052.3,640.8 L1054.1,643.3 L1055.8,645.9 L1057.3,648.6 L1058.5,651.4 L1059.6,654.1 L1060.4,656.9 L1061.0,659.7 L1061.4,662.4 L1061.5,665.1ZM1027.8,550.3 L1027.7,552.9 L1027.3,555.5 L1026.7,558.0 L1025.9,560.3 L1024.8,562.5 L1023.5,564.5 L1022.0,566.4 L1020.3,568.0 L1018.5,569.5 L1016.4,570.7 L1014.2,571.7 L1011.8,572.5 L1009.4,573.0 L1006.8,573.3 L1004.1,573.4 L1001.4,573.2 L998.7,572.7 L995.9,572.1 L993.1,571.1 L990.3,570.0 L987.6,568.6 L985.0,567.0 L982.4,565.3 L979.9,563.3 L977.6,561.2 L975.4,558.9 L973.3,556.5 L971.4,553.9 L969.7,551.3 L968.2,548.6 L966.9,545.8 L965.9,543.0 L965.0,540.2 L964.4,537.4 L964.1,534.6 L963.9,531.8 L964.1,529.2 L964.4,526.6 L965.0,524.1 L965.9,521.8 L966.9,519.6 L968.2,517.6 L969.7,515.7 L971.4,514.1 L973.3,512.6 L975.4,511.4 L977.6,510.4 L979.9,509.6 L982.4,509.1 L985.0,508.8 L987.6,508.7 L990.3,508.9 L993.1,509.4 L995.9,510.1 L998.7,511.0 L1001.4,512.1 L1004.1,513.5 L1006.8,515.1 L1009.4,516.8 L1011.8,518.8 L1014.2,520.9 L1016.4,523.2 L1018.5,525.6 L1020.3,528.2 L1022.0,530.8 L1023.5,533.5 L1024.8,536.3 L1025.9,539.1 L1026.7,541.9 L1027.3,544.7 L1027.7,547.5 L1027.8,550.3ZM1054.0,374.2 L1053.8,375.5 L1053.3,376.6 L1052.5,377.4 L1051.4,377.9 L1050.1,378.1 L1048.7,377.8 L1047.3,377.3 L1046.0,376.4 L1044.9,375.2 L1044.0,373.9 L1043.5,372.5 L1043.3,371.1 L1043.5,369.8 L1044.0,368.7 L1044.9,367.9 L1046.0,367.4 L1047.3,367.2 L1048.7,367.4 L1050.1,368.0 L1051.4,368.9 L1052.5,370.1 L1053.3,371.4 L1053.8,372.8 L1054.0,374.2ZM1166.4,541.9 L1166.2,543.2 L1165.7,544.3 L1164.9,545.1 L1163.8,545.6 L1162.5,545.8 L1161.1,545.6 L1159.7,545.0 L1158.4,544.1 L1157.3,542.9 L1156.4,541.6 L1155.9,540.2 L1155.7,538.8 L1155.9,537.5 L1156.4,536.4 L1157.3,535.6 L1158.4,535.1 L1159.7,534.9 L1161.1,535.1 L1162.5,535.7 L1163.8,536.6 L1164.9,537.8 L1165.7,539.1 L1166.2,540.5 L1166.4,541.9ZM1122.7,600.2 L1122.5,601.5 L1122.0,602.6 L1121.2,603.4 L1120.1,603.9 L1118.8,604.1 L1117.4,603.9 L1116.0,603.3 L1114.7,602.4 L1113.6,601.2 L1112.7,599.9 L1112.2,598.5 L1112.0,597.1 L1112.2,595.8 L1112.7,594.7 L1113.6,593.9 L1114.7,593.4 L1116.0,593.2 L1117.4,593.5 L1118.8,594.0 L1120.1,594.9 L1121.2,596.1 L1122.0,597.4 L1122.5,598.8 L1122.7,600.2ZM928.6,443.6 L928.4,444.9 L927.9,446.0 L927.1,446.8 L926.0,447.3 L924.7,447.5 L923.3,447.2 L921.9,446.7 L920.6,445.8 L919.5,444.6 L918.6,443.3 L918.1,441.9 L917.9,440.5 L918.1,439.2 L918.6,438.1 L919.5,437.3 L920.6,436.8 L921.9,436.6 L923.3,436.9 L924.7,437.4 L926.0,438.3 L927.1,439.5 L927.9,440.8 L928.4,442.2 L928.6,443.6ZM897.4,507.3 L897.2,508.6 L896.7,509.7 L895.9,510.5 L894.8,511.0 L893.5,511.2 L892.1,510.9 L890.7,510.4 L889.4,509.5 L888.3,508.3 L887.4,507.0 L886.9,505.6 L886.7,504.2 L886.9,502.9 L887.4,501.8 L888.3,501.0 L889.4,500.5 L890.7,500.3 L892.1,500.6 L893.5,501.1 L894.8,502.0 L895.9,503.2 L896.7,504.5 L897.2,505.9 L897.4,507.3ZM897.4,645.6 L897.2,646.9 L896.7,648.0 L895.9,648.8 L894.8,649.3 L893.5,649.5 L892.1,649.3 L890.7,648.7 L889.4,647.8 L888.3,646.6 L887.4,645.3 L886.9,643.9 L886.7,642.5 L886.9,641.2 L887.4,640.1 L888.3,639.3 L889.4,638.8 L890.7,638.6 L892.1,638.9 L893.5,639.4 L894.8,640.3 L895.9,641.5 L896.7,642.8 L897.2,644.2 L897.4,645.6Z" fill="#dedede" stroke="#dedede" stroke-width="0.9" fill-rule="evenodd"/>
<path d="M1142.0,390.9 L1143.0,391.8 L1138.8,390.5 L1134.5,389.5 L1130.3,388.7 L1126.1,388.2 L1122.0,388.0 L1117.9,388.0 L1113.9,388.3 L1110.0,388.8 L1106.2,389.6 L1102.6,390.6 L1099.1,391.9 L1095.7,393.5 L1092.5,395.3 L1089.5,397.3 L1086.6,399.5 L1084.0,402.0 L1081.6,404.7 L1079.3,407.5 L1077.4,410.6 L1075.6,413.8 L1074.1,417.3 L1072.8,420.8 L1071.8,424.5 L1071.0,428.4 L1070.5,432.3 L1070.2,436.3 L1070.2,440.5 L1070.4,444.6 L1070.9,448.9 L1071.7,453.2 L1072.7,457.4 L1074.0,461.8 L1075.5,466.0 L1077.2,470.3 L1079.2,474.5 L1081.4,478.7 L1083.9,482.8 L1086.5,486.8 L1089.3,490.6 L1092.3,494.4 L1095.5,498.1 L1098.9,501.6 L1102.4,504.9 L1106.0,508.1 L1109.8,511.0 L1113.7,513.8 L1117.7,516.4 L1121.7,518.8 L1125.9,520.9 L1130.0,522.8 L1134.3,524.5 L1138.5,525.9 L1142.7,527.1 L1147.0,528.1 L1151.2,528.7 L1155.4,529.1 L1159.5,529.3 L1163.5,529.2 L1167.5,528.8 L1171.3,528.2 L1175.0,527.3 L1178.6,526.2 L1182.1,524.8 L1185.4,523.1 L1188.5,521.3 L1191.5,519.1 L1194.3,516.8 L1196.8,514.3 L1199.2,511.5 L1058.0,690.9 L1054.6,694.6 L1050.8,697.4 L1046.8,699.2 L1042.4,700.1 L1037.7,700.0 L1032.7,699.1 L891.5,659.0 L887.4,657.5 L884.0,655.4 L881.4,652.7 L879.5,649.4 L878.4,645.6 L878.0,641.2 L878.0,499.2 L906.0,439.2 L1034.5,361.9 L1037.4,360.4 L1040.3,359.4 L1043.3,358.8 L1046.3,358.7 L1049.4,359.1 L1052.5,360.0ZM1060.5,665.9 L1060.3,668.5 L1060.0,671.1 L1059.4,673.5 L1058.6,675.8 L1057.5,678.0 L1056.2,680.0 L1054.8,681.8 L1053.1,683.5 L1051.2,684.9 L1049.2,686.1 L1047.0,687.1 L1044.7,687.9 L1042.3,688.4 L1039.7,688.7 L1037.1,688.7 L1034.4,688.5 L1031.7,688.1 L1028.9,687.4 L1026.2,686.5 L1023.5,685.4 L1020.8,684.0 L1018.2,682.5 L1015.6,680.7 L1013.2,678.8 L1010.9,676.7 L1008.7,674.4 L1006.7,672.0 L1004.8,669.5 L1003.1,666.9 L1001.6,664.3 L1000.4,661.5 L999.3,658.8 L998.5,656.0 L997.9,653.2 L997.5,650.4 L997.4,647.7 L997.5,645.1 L997.9,642.6 L998.5,640.1 L999.3,637.8 L1000.4,635.7 L1001.6,633.7 L1003.1,631.8 L1004.8,630.2 L1006.7,628.8 L1008.7,627.5 L1010.9,626.5 L1013.2,625.8 L1015.6,625.3 L1018.2,625.0 L1020.8,624.9 L1023.5,625.1 L1026.2,625.5 L1028.9,626.2 L1031.7,627.1 L1034.4,628.3 L1037.1,629.6 L1039.7,631.2 L1042.3,632.9 L1044.7,634.9 L1047.0,637.0 L1049.2,639.2 L1051.2,641.6 L1053.1,644.1 L1054.8,646.7 L1056.2,649.4 L1057.5,652.1 L1058.6,654.9 L1059.4,657.7 L1060.0,660.5 L1060.3,663.2 L1060.5,665.9ZM1026.8,551.0 L1026.6,553.7 L1026.3,556.3 L1025.7,558.7 L1024.8,561.1 L1023.8,563.3 L1022.5,565.3 L1021.0,567.1 L1019.3,568.8 L1017.4,570.3 L1015.4,571.5 L1013.2,572.5 L1010.8,573.3 L1008.3,573.8 L1005.8,574.1 L1003.1,574.2 L1000.4,574.0 L997.6,573.5 L994.8,572.8 L992.1,571.9 L989.3,570.8 L986.6,569.4 L983.9,567.8 L981.3,566.0 L978.9,564.1 L976.5,561.9 L974.3,559.7 L972.3,557.2 L970.4,554.7 L968.7,552.1 L967.2,549.4 L965.9,546.6 L964.8,543.8 L964.0,541.0 L963.4,538.1 L963.0,535.4 L962.9,532.6 L963.0,530.0 L963.4,527.4 L964.0,524.9 L964.8,522.6 L965.9,520.4 L967.2,518.4 L968.7,516.5 L970.4,514.8 L972.3,513.4 L974.3,512.2 L976.5,511.2 L978.9,510.4 L981.3,509.8 L983.9,509.5 L986.6,509.5 L989.3,509.7 L992.1,510.1 L994.8,510.8 L997.6,511.7 L1000.4,512.9 L1003.1,514.3 L1005.8,515.8 L1008.3,517.6 L1010.8,519.6 L1013.2,521.7 L1015.4,524.0 L1017.4,526.4 L1019.3,529.0 L1021.0,531.6 L1022.5,534.3 L1023.8,537.1 L1024.8,539.9 L1025.7,542.7 L1026.3,545.5 L1026.6,548.3 L1026.8,551.0ZM1053.0,375.0 L1052.8,376.3 L1052.3,377.4 L1051.4,378.2 L1050.3,378.7 L1049.0,378.8 L1047.6,378.6 L1046.3,378.0 L1045.0,377.2 L1043.9,376.0 L1043.0,374.7 L1042.5,373.3 L1042.3,371.9 L1042.5,370.6 L1043.0,369.5 L1043.9,368.7 L1045.0,368.1 L1046.3,368.0 L1047.6,368.2 L1049.0,368.8 L1050.3,369.7 L1051.4,370.8 L1052.3,372.2 L1052.8,373.6 L1053.0,375.0ZM1165.4,542.7 L1165.2,544.0 L1164.7,545.1 L1163.8,545.9 L1162.7,546.4 L1161.4,546.5 L1160.0,546.3 L1158.7,545.7 L1157.4,544.9 L1156.3,543.7 L1155.4,542.4 L1154.9,541.0 L1154.7,539.6 L1154.9,538.3 L1155.4,537.2 L1156.3,536.4 L1157.4,535.8 L1158.7,535.7 L1160.0,535.9 L1161.4,536.5 L1162.7,537.4 L1163.8,538.5 L1164.7,539.9 L1165.2,541.3 L1165.4,542.7ZM1121.7,601.0 L1121.5,602.3 L1121.0,603.4 L1120.1,604.2 L1119.0,604.7 L1117.7,604.8 L1116.3,604.6 L1115.0,604.0 L1113.7,603.2 L1112.6,602.0 L1111.7,600.7 L1111.2,599.3 L1111.0,597.9 L1111.2,596.6 L1111.7,595.5 L1112.6,594.7 L1113.7,594.1 L1115.0,594.0 L1116.3,594.2 L1117.7,594.8 L1119.0,595.7 L1120.1,596.8 L1121.0,598.2 L1121.5,599.6 L1121.7,601.0ZM927.6,444.4 L927.4,445.7 L926.9,446.8 L926.0,447.6 L924.9,448.1 L923.6,448.2 L922.2,448.0 L920.9,447.4 L919.6,446.6 L918.5,445.4 L917.6,444.1 L917.1,442.7 L916.9,441.3 L917.1,440.0 L917.6,438.9 L918.5,438.1 L919.6,437.5 L920.9,437.4 L922.2,437.6 L923.6,438.2 L924.9,439.1 L926.0,440.2 L926.9,441.6 L927.4,443.0 L927.6,444.4ZM896.4,508.1 L896.2,509.4 L895.7,510.5 L894.8,511.3 L893.7,511.8 L892.4,511.9 L891.0,511.7 L889.7,511.1 L888.4,510.3 L887.3,509.1 L886.4,507.8 L885.9,506.4 L885.7,505.0 L885.9,503.7 L886.4,502.6 L887.3,501.8 L888.4,501.2 L889.7,501.1 L891.0,501.3 L892.4,501.9 L893.7,502.8 L894.8,503.9 L895.7,505.3 L896.2,506.7 L896.4,508.1ZM896.4,646.4 L896.2,647.7 L895.7,648.8 L894.8,649.6 L893.7,650.1 L892.4,650.2 L891.0,650.0 L889.7,649.4 L888.4,648.6 L887.3,647.4 L886.4,646.1 L885.9,644.7 L885.7,643.3 L885.9,642.0 L886.4,640.9 L887.3,640.1 L888.4,639.5 L889.7,639.4 L891.0,639.6 L892.4,640.2 L893.7,641.1 L894.8,642.2 L895.7,643.6 L896.2,645.0 L896.4,646.4Z" fill="#dedede" stroke="#dedede" stroke-width="0.9" fill-rule="evenodd"/>
<path d="M1149.3,385.5 L1150.3,386.4 L1146.0,385.1 L1141.8,384.1 L1137.6,383.3 L1133.4,382.8 L1129.2,382.6 L1125.2,382.6 L1121.2,382.8 L1117.3,383.4 L1113.5,384.2 L1109.9,385.2 L1106.3,386.5 L1103.0,388.0 L1099.8,389.8 L1096.7,391.8 L1093.9,394.1 L1091.3,396.6 L1088.8,399.2 L1086.6,402.1 L1084.6,405.2 L1082.9,408.4 L1081.3,411.8 L1080.1,415.4 L1079.0,419.1 L1078.2,422.9 L1077.7,426.9 L1077.5,430.9 L1077.4,435.0 L1077.7,439.2 L1078.2,443.5 L1079.0,447.7 L1080.0,452.0 L1081.2,456.3 L1082.8,460.6 L1084.5,464.9 L1086.5,469.1 L1088.7,473.3 L1091.1,477.3 L1093.7,481.3 L1096.6,485.2 L1099.6,489.0 L1102.8,492.6 L1106.1,496.1 L1109.6,499.5 L1113.3,502.6 L1117.1,505.6 L1120.9,508.4 L1124.9,511.0 L1129.0,513.3 L1133.1,515.5 L1137.3,517.4 L1141.5,519.1 L1145.8,520.5 L1150.0,521.7 L1154.2,522.6 L1158.5,523.3 L1162.6,523.7 L1166.7,523.9 L1170.8,523.8 L1174.7,523.4 L1178.6,522.8 L1182.3,521.9 L1185.9,520.7 L1189.4,519.3 L1192.7,517.7 L1195.8,515.8 L1198.8,513.7 L1201.5,511.4 L1204.1,508.8 L1206.4,506.1 L1065.3,685.4 L1061.8,689.1 L1058.1,691.9 L1054.0,693.8 L1049.7,694.7 L1045.0,694.6 L1040.0,693.6 L898.8,653.6 L894.7,652.1 L891.3,649.9 L888.7,647.3 L886.8,644.0 L885.7,640.2 L885.3,635.8 L885.3,493.8 L913.3,433.8 L1041.7,356.5 L1044.6,355.0 L1047.5,354.0 L1050.5,353.4 L1053.5,353.3 L1056.6,353.7 L1059.8,354.6ZM1067.7,660.5 L1067.6,663.1 L1067.2,665.7 L1066.6,668.1 L1065.8,670.4 L1064.8,672.6 L1063.5,674.6 L1062.0,676.4 L1060.3,678.0 L1058.5,679.5 L1056.5,680.7 L1054.3,681.7 L1052.0,682.4 L1049.5,683.0 L1047.0,683.3 L1044.4,683.3 L1041.7,683.1 L1038.9,682.7 L1036.2,682.0 L1033.5,681.1 L1030.7,680.0 L1028.0,678.6 L1025.4,677.0 L1022.9,675.3 L1020.4,673.4 L1018.1,671.3 L1015.9,669.0 L1013.9,666.6 L1012.1,664.1 L1010.4,661.5 L1008.9,658.8 L1007.6,656.1 L1006.6,653.3 L1005.8,650.5 L1005.2,647.8 L1004.8,645.0 L1004.7,642.3 L1004.8,639.7 L1005.2,637.1 L1005.8,634.7 L1006.6,632.4 L1007.6,630.2 L1008.9,628.2 L1010.4,626.4 L1012.1,624.8 L1013.9,623.3 L1015.9,622.1 L1018.1,621.1 L1020.4,620.4 L1022.9,619.8 L1025.4,619.5 L1028.0,619.5 L1030.7,619.7 L1033.5,620.1 L1036.2,620.8 L1038.9,621.7 L1041.7,622.8 L1044.4,624.2 L1047.0,625.8 L1049.5,627.5 L1052.0,629.4 L1054.3,631.5 L1056.5,633.8 L1058.5,636.2 L1060.3,638.7 L1062.0,641.3 L1063.5,644.0 L1064.8,646.7 L1065.8,649.5 L1066.6,652.3 L1067.2,655.0 L1067.6,657.8 L1067.7,660.5ZM1034.0,545.6 L1033.9,548.3 L1033.5,550.9 L1032.9,553.3 L1032.1,555.7 L1031.0,557.8 L1029.8,559.9 L1028.3,561.7 L1026.6,563.4 L1024.7,564.8 L1022.6,566.1 L1020.4,567.1 L1018.1,567.9 L1015.6,568.4 L1013.0,568.7 L1010.4,568.7 L1007.6,568.5 L1004.9,568.1 L1002.1,567.4 L999.3,566.5 L996.6,565.3 L993.8,564.0 L991.2,562.4 L988.6,560.6 L986.1,558.6 L983.8,556.5 L981.6,554.2 L979.5,551.8 L977.6,549.3 L975.9,546.6 L974.4,543.9 L973.2,541.2 L972.1,538.4 L971.3,535.5 L970.7,532.7 L970.3,529.9 L970.2,527.2 L970.3,524.5 L970.7,521.9 L971.3,519.5 L972.1,517.1 L973.2,515.0 L974.4,512.9 L975.9,511.1 L977.6,509.4 L979.5,508.0 L981.6,506.7 L983.8,505.7 L986.1,504.9 L988.6,504.4 L991.2,504.1 L993.8,504.1 L996.6,504.3 L999.3,504.7 L1002.1,505.4 L1004.9,506.3 L1007.6,507.5 L1010.4,508.8 L1013.0,510.4 L1015.6,512.2 L1018.1,514.2 L1020.4,516.3 L1022.6,518.6 L1024.7,521.0 L1026.6,523.5 L1028.3,526.2 L1029.8,528.9 L1031.0,531.6 L1032.1,534.4 L1032.9,537.3 L1033.5,540.1 L1033.9,542.9 L1034.0,545.6ZM1060.3,369.5 L1060.1,370.8 L1059.5,371.9 L1058.7,372.8 L1057.6,373.3 L1056.3,373.4 L1054.9,373.2 L1053.5,372.6 L1052.2,371.7 L1051.1,370.6 L1050.3,369.3 L1049.7,367.9 L1049.5,366.5 L1049.7,365.2 L1050.3,364.1 L1051.1,363.2 L1052.2,362.7 L1053.5,362.6 L1054.9,362.8 L1056.3,363.4 L1057.6,364.3 L1058.7,365.4 L1059.5,366.7 L1060.1,368.1 L1060.3,369.5ZM1172.7,537.2 L1172.5,538.5 L1171.9,539.6 L1171.1,540.5 L1170.0,541.0 L1168.7,541.1 L1167.3,540.9 L1165.9,540.3 L1164.6,539.4 L1163.5,538.3 L1162.7,537.0 L1162.1,535.6 L1161.9,534.2 L1162.1,532.9 L1162.7,531.8 L1163.5,530.9 L1164.6,530.4 L1165.9,530.3 L1167.3,530.5 L1168.7,531.1 L1170.0,532.0 L1171.1,533.1 L1171.9,534.4 L1172.5,535.8 L1172.7,537.2ZM1129.0,595.5 L1128.8,596.8 L1128.2,597.9 L1127.4,598.8 L1126.3,599.3 L1125.0,599.4 L1123.6,599.2 L1122.2,598.6 L1120.9,597.7 L1119.8,596.6 L1119.0,595.3 L1118.4,593.9 L1118.2,592.5 L1118.4,591.2 L1119.0,590.1 L1119.8,589.2 L1120.9,588.7 L1122.2,588.6 L1123.6,588.8 L1125.0,589.4 L1126.3,590.3 L1127.4,591.4 L1128.2,592.7 L1128.8,594.1 L1129.0,595.5ZM934.9,438.9 L934.7,440.2 L934.1,441.3 L933.3,442.2 L932.2,442.7 L930.9,442.8 L929.5,442.6 L928.1,442.0 L926.8,441.1 L925.7,440.0 L924.9,438.7 L924.3,437.3 L924.1,435.9 L924.3,434.6 L924.9,433.5 L925.7,432.6 L926.8,432.1 L928.1,432.0 L929.5,432.2 L930.9,432.8 L932.2,433.7 L933.3,434.8 L934.1,436.1 L934.7,437.5 L934.9,438.9ZM903.7,502.6 L903.5,503.9 L902.9,505.0 L902.1,505.9 L901.0,506.4 L899.7,506.5 L898.3,506.3 L896.9,505.7 L895.6,504.8 L894.5,503.7 L893.7,502.4 L893.1,501.0 L892.9,499.6 L893.1,498.3 L893.7,497.2 L894.5,496.3 L895.6,495.8 L896.9,495.7 L898.3,495.9 L899.7,496.5 L901.0,497.4 L902.1,498.5 L902.9,499.8 L903.5,501.2 L903.7,502.6ZM903.7,640.9 L903.5,642.2 L902.9,643.3 L902.1,644.2 L901.0,644.7 L899.7,644.8 L898.3,644.6 L896.9,644.0 L895.6,643.1 L894.5,642.0 L893.7,640.7 L893.1,639.3 L892.9,637.9 L893.1,636.6 L893.7,635.5 L894.5,634.6 L895.6,634.1 L896.9,634.0 L898.3,634.2 L899.7,634.8 L901.0,635.7 L902.1,636.8 L902.9,638.1 L903.5,639.5 L903.7,640.9Z" fill="none" stroke="#161616" stroke-width="1"/>
<path d="M1141.0,391.7 L1142.0,392.6 L1137.7,391.3 L1133.5,390.3 L1129.3,389.5 L1125.1,389.0 L1120.9,388.8 L1116.9,388.8 L1112.9,389.0 L1109.0,389.6 L1105.2,390.4 L1101.6,391.4 L1098.0,392.7 L1094.7,394.2 L1091.5,396.0 L1088.4,398.0 L1085.6,400.3 L1083.0,402.8 L1080.5,405.4 L1078.3,408.3 L1076.3,411.4 L1074.6,414.6 L1073.0,418.0 L1071.8,421.6 L1070.7,425.3 L1069.9,429.1 L1069.4,433.1 L1069.2,437.1 L1069.1,441.2 L1069.4,445.4 L1069.9,449.7 L1070.7,453.9 L1071.7,458.2 L1072.9,462.5 L1074.5,466.8 L1076.2,471.1 L1078.2,475.3 L1080.4,479.5 L1082.8,483.5 L1085.4,487.5 L1088.3,491.4 L1091.3,495.2 L1094.5,498.8 L1097.8,502.3 L1101.3,505.7 L1105.0,508.8 L1108.8,511.8 L1112.6,514.6 L1116.6,517.2 L1120.7,519.5 L1124.8,521.7 L1129.0,523.6 L1133.2,525.3 L1137.5,526.7 L1141.7,527.9 L1145.9,528.8 L1150.2,529.5 L1154.3,529.9 L1158.4,530.1 L1162.5,530.0 L1166.4,529.6 L1170.3,529.0 L1174.0,528.1 L1177.6,526.9 L1181.1,525.5 L1184.4,523.9 L1187.5,522.0 L1190.5,519.9 L1193.2,517.6 L1195.8,515.0 L1198.1,512.3 L1057.0,691.6 L1053.5,695.3 L1049.8,698.1 L1045.7,700.0 L1041.4,700.9 L1036.7,700.8 L1031.7,699.8 L890.5,659.8 L886.4,658.3 L883.0,656.1 L880.4,653.5 L878.5,650.2 L877.4,646.4 L877.0,642.0 L877.0,500.0 L905.0,440.0 L1033.4,362.7 L1036.3,361.2 L1039.2,360.2 L1042.2,359.6 L1045.2,359.5 L1048.3,359.9 L1051.5,360.8ZM1059.4,666.7 L1059.3,669.3 L1058.9,671.9 L1058.3,674.3 L1057.5,676.6 L1056.5,678.8 L1055.2,680.8 L1053.7,682.6 L1052.0,684.2 L1050.2,685.7 L1048.2,686.9 L1046.0,687.9 L1043.7,688.6 L1041.2,689.2 L1038.7,689.5 L1036.1,689.5 L1033.4,689.3 L1030.6,688.9 L1027.9,688.2 L1025.2,687.3 L1022.4,686.2 L1019.7,684.8 L1017.1,683.2 L1014.6,681.5 L1012.1,679.6 L1009.8,677.5 L1007.6,675.2 L1005.6,672.8 L1003.8,670.3 L1002.1,667.7 L1000.6,665.0 L999.3,662.3 L998.3,659.5 L997.5,656.7 L996.9,654.0 L996.5,651.2 L996.4,648.5 L996.5,645.9 L996.9,643.3 L997.5,640.9 L998.3,638.6 L999.3,636.4 L1000.6,634.4 L1002.1,632.6 L1003.8,631.0 L1005.6,629.5 L1007.6,628.3 L1009.8,627.3 L1012.1,626.6 L1014.6,626.0 L1017.1,625.7 L1019.7,625.7 L1022.4,625.9 L1025.2,626.3 L1027.9,627.0 L1030.6,627.9 L1033.4,629.0 L1036.1,630.4 L1038.7,632.0 L1041.2,633.7 L1043.7,635.6 L1046.0,637.7 L1048.2,640.0 L1050.2,642.4 L1052.0,644.9 L1053.7,647.5 L1055.2,650.2 L1056.5,652.9 L1057.5,655.7 L1058.3,658.5 L1058.9,661.2 L1059.3,664.0 L1059.4,666.7ZM1025.7,551.8 L1025.6,554.5 L1025.2,557.1 L1024.6,559.5 L1023.8,561.9 L1022.7,564.0 L1021.5,566.1 L1020.0,567.9 L1018.3,569.6 L1016.4,571.0 L1014.3,572.3 L1012.1,573.3 L1009.8,574.1 L1007.3,574.6 L1004.7,574.9 L1002.1,574.9 L999.3,574.7 L996.6,574.3 L993.8,573.6 L991.0,572.7 L988.3,571.5 L985.5,570.2 L982.9,568.6 L980.3,566.8 L977.8,564.8 L975.5,562.7 L973.3,560.4 L971.2,558.0 L969.3,555.5 L967.6,552.8 L966.1,550.1 L964.9,547.4 L963.8,544.6 L963.0,541.7 L962.4,538.9 L962.0,536.1 L961.9,533.4 L962.0,530.7 L962.4,528.1 L963.0,525.7 L963.8,523.3 L964.9,521.2 L966.1,519.1 L967.6,517.3 L969.3,515.6 L971.2,514.2 L973.3,512.9 L975.5,511.9 L977.8,511.1 L980.3,510.6 L982.9,510.3 L985.5,510.3 L988.3,510.5 L991.0,510.9 L993.8,511.6 L996.6,512.5 L999.3,513.7 L1002.1,515.0 L1004.7,516.6 L1007.3,518.4 L1009.8,520.4 L1012.1,522.5 L1014.3,524.8 L1016.4,527.2 L1018.3,529.7 L1020.0,532.4 L1021.5,535.1 L1022.7,537.8 L1023.8,540.6 L1024.6,543.5 L1025.2,546.3 L1025.6,549.1 L1025.7,551.8ZM1052.0,375.7 L1051.8,377.0 L1051.2,378.1 L1050.4,379.0 L1049.3,379.5 L1048.0,379.6 L1046.6,379.4 L1045.2,378.8 L1043.9,377.9 L1042.8,376.8 L1042.0,375.5 L1041.4,374.1 L1041.2,372.7 L1041.4,371.4 L1042.0,370.3 L1042.8,369.4 L1043.9,368.9 L1045.2,368.8 L1046.6,369.0 L1048.0,369.6 L1049.3,370.5 L1050.4,371.6 L1051.2,372.9 L1051.8,374.3 L1052.0,375.7ZM1164.4,543.4 L1164.2,544.7 L1163.6,545.8 L1162.8,546.7 L1161.7,547.2 L1160.4,547.3 L1159.0,547.1 L1157.6,546.5 L1156.3,545.6 L1155.2,544.5 L1154.4,543.2 L1153.8,541.8 L1153.6,540.4 L1153.8,539.1 L1154.4,538.0 L1155.2,537.1 L1156.3,536.6 L1157.6,536.5 L1159.0,536.7 L1160.4,537.3 L1161.7,538.2 L1162.8,539.3 L1163.6,540.6 L1164.2,542.0 L1164.4,543.4ZM1120.7,601.7 L1120.5,603.0 L1119.9,604.1 L1119.1,605.0 L1118.0,605.5 L1116.7,605.6 L1115.3,605.4 L1113.9,604.8 L1112.6,603.9 L1111.5,602.8 L1110.7,601.5 L1110.1,600.1 L1109.9,598.7 L1110.1,597.4 L1110.7,596.3 L1111.5,595.4 L1112.6,594.9 L1113.9,594.8 L1115.3,595.0 L1116.7,595.6 L1118.0,596.5 L1119.1,597.6 L1119.9,598.9 L1120.5,600.3 L1120.7,601.7ZM926.6,445.1 L926.4,446.4 L925.8,447.5 L925.0,448.4 L923.9,448.9 L922.6,449.0 L921.2,448.8 L919.8,448.2 L918.5,447.3 L917.4,446.2 L916.6,444.9 L916.0,443.5 L915.8,442.1 L916.0,440.8 L916.6,439.7 L917.4,438.8 L918.5,438.3 L919.8,438.2 L921.2,438.4 L922.6,439.0 L923.9,439.9 L925.0,441.0 L925.8,442.3 L926.4,443.7 L926.6,445.1ZM895.4,508.8 L895.2,510.1 L894.6,511.2 L893.8,512.1 L892.7,512.6 L891.4,512.7 L890.0,512.5 L888.6,511.9 L887.3,511.0 L886.2,509.9 L885.4,508.6 L884.8,507.2 L884.6,505.8 L884.8,504.5 L885.4,503.4 L886.2,502.5 L887.3,502.0 L888.6,501.9 L890.0,502.1 L891.4,502.7 L892.7,503.6 L893.8,504.7 L894.6,506.0 L895.2,507.4 L895.4,508.8ZM895.4,647.1 L895.2,648.4 L894.6,649.5 L893.8,650.4 L892.7,650.9 L891.4,651.0 L890.0,650.8 L888.6,650.2 L887.3,649.3 L886.2,648.2 L885.4,646.9 L884.8,645.5 L884.6,644.1 L884.8,642.8 L885.4,641.7 L886.2,640.8 L887.3,640.3 L888.6,640.2 L890.0,640.4 L891.4,641.0 L892.7,641.9 L893.8,643.0 L894.6,644.3 L895.2,645.7 L895.4,647.1Z" fill="#737373" stroke="#161616" stroke-width="1" fill-rule="evenodd"/>
<polygon points="1112,381.9 1141,391.7 1149.3,385.5 1120.3,375.7" fill="#dedede"/>
<polyline points="1112,381.9 1141,391.7 1149.3,385.5" fill="none" stroke="#161616" stroke-width="1"/>
<polyline points="1120.3,375.7 1149.3,385.5" fill="none" stroke="#161616" stroke-width="1"/>
<circle cx="0" cy="0" r="5.1" transform="matrix(1.03,0.297,0,1,1125.4,392.9)" fill="#c8c8c8" stroke="#161616" stroke-width="1" vector-effect="non-scaling-stroke"/>
</svg>
<div class="abs" style="left:0;top:40px;width:39px;height:1px;background:#dadada"></div><div class="abs" style="left:0;top:41px;width:39px;height:35px;background:#fdfdfd"></div>
<svg style="left:4px;top:9px;" width="21" height="23" viewBox="0 0 21 23"><path d="M10.5,1 L19.5,6.2 L19.5,16.8 L10.5,22 L1.5,16.8 L1.5,6.2Z" fill="#6cbf4b"/><path d="M10.5,6 L15.2,8.7 L15.2,14.3 L10.5,17 L5.8,14.3 L5.8,8.7Z" fill="none" stroke="#fff" stroke-width="1.8"/><path d="M10.5,9.5 L12.8,11 L12.8,13" fill="none" stroke="#6cbf4b" stroke-width="1.2"/></svg>
<div class="t" style="left:31.5px;top:9.6px;font-size:17px;line-height:17px;color:#7b7b7b;font-weight:400;font-style:normal;letter-spacing:0.1px">onshape</div>
<svg style="left:113px;top:14px;" width="17" height="15" viewBox="0 0 17 15"><rect x="0" y="0" width="16" height="2.6" fill="#333"/><rect x="0" y="6" width="16" height="2.6" fill="#333"/><rect x="0" y="12" width="16" height="2.6" fill="#333"/></svg>
<div class="t" style="left:141px;top:11.0px;font-size:21.3px;line-height:21.3px;color:#333;font-weight:700;font-style:normal;">1B - Practice Exercise Solutions</div>
<div class="t" style="left:475px;top:15.1px;font-size:15.3px;line-height:15.3px;color:#9a9a9a;font-weight:400;font-style:normal;">FRCDesignLib Rework</div>
<svg style="left:643px;top:13px;" width="17" height="17" viewBox="0 0 17 17"><g fill="none" stroke="#555" stroke-width="1.8" stroke-linecap="round"><path d="M7,10 L10,7"/><path d="M5.5,8.5 L3.5,10.5 a2.5,2.5 0 0 0 3.5,3.5 L9,12"/><path d="M8,5 L10,3 a2.5,2.5 0 0 1 3.5,3.5 L11.5,8.5"/></g></svg>
<svg style="left:669px;top:14px;" width="18" height="16" viewBox="0 0 18 16"><path d="M1,2.5 h5.5 l1.5,2 h9 v10 h-16z" fill="none" stroke="#999" stroke-width="1.2"/></svg>
<div class="t" style="left:693px;top:14.1px;font-size:15px;line-height:15px;color:#9a9a9a;font-weight:400;font-style:normal;">Stage 1</div>
<svg style="left:796px;top:12px;" width="18" height="17" viewBox="0 0 18 17"><path d="M9,2 L17.5,6 L9,10 L0.5,6Z" fill="#1f5fb6"/><path d="M4,8 v4 q5,3 10,0 v-4 l-5,2.5z" fill="#1f5fb6"/><path d="M16,6.5 v6" stroke="#1f5fb6" stroke-width="1.2"/></svg>
<svg style="left:822px;top:12px;" width="18" height="18" viewBox="0 0 18 18"><circle cx="9" cy="9" r="7.8" fill="none" stroke="#333" stroke-width="1.6"/><path d="M5,3.5 q2,2 1,4 q3,1 2,3.5 q-1,2 -3,1.5 q-1,-2 -3,-3 M11,2.5 q-1,2 1,3 q3,0 4,2 M12,11 q2,0 2,2 l-2,3 q-1,-2 0,-5z" fill="#333"/></svg>
<svg style="left:851px;top:12px;" width="18" height="18" viewBox="0 0 18 18"><path d="M4,1.5 h5 v3 M1.5,4.5 h8 v12 h-8z M9.5,7.5 h7 v9 h-7" fill="none" stroke="#333" stroke-width="1.5"/><path d="M9.5,4.5 l3,3" stroke="#333" stroke-width="1.5"/></svg>
<div class="t" style="left:875px;top:14.1px;font-size:14.5px;line-height:14.5px;color:#444;font-weight:400;font-style:normal;">225</div>
<svg style="left:918px;top:9px;" width="6" height="22" viewBox="0 0 6 22"><circle cx="3" cy="11" r="3" fill="#333"/><path d="M3,1 v5 M3,16 v5" stroke="#333" stroke-width="1.4" stroke-dasharray="1.5,1.5"/></svg>
<div class="t" style="left:938px;top:14.1px;font-size:14.5px;line-height:14.5px;color:#444;font-weight:400;font-style:normal;">5280</div>
<svg style="left:981px;top:11px;" width="21" height="21" viewBox="0 0 21 21"><path d="M2,9 h3.5 v10 h-3.5z M5.5,9.5 l4,-7 q2,-1 2.5,1.5 l-1,4.5 h6 q2,0.5 1.5,2.5 l-2,7.5 q-0.5,1.5 -2,1.5 h-9" fill="none" stroke="#333" stroke-width="1.5" stroke-linejoin="round"/></svg>
<div class="t" style="left:1009px;top:14.1px;font-size:14.5px;line-height:14.5px;color:#444;font-weight:400;font-style:normal;">4</div>
<svg style="left:1514px;top:11px;" width="23" height="21" viewBox="0 0 23 21"><text x="0" y="16" font-family="Liberation Mono" font-size="17" fill="#444">{</text><text x="13" y="16" font-family="Liberation Mono" font-size="17" fill="#444">}</text><path d="M7,11 l3,3 l5,-7" fill="none" stroke="#444" stroke-width="1.8"/></svg>
<svg style="left:1548px;top:5px;" width="27" height="28" viewBox="0 0 27 28"><path d="M4,24 q2,-2 2,-9 q0,-7 7,-8 q7,1 7,8 q0,7 2,9z M11,25 q2,3 4,0" fill="#777"/><rect x="9" y="1" width="16" height="15" rx="2" fill="#1a56b0"/><text x="11" y="12.5" font-family="Liberation Sans" font-weight="700" font-size="11" fill="#fff">9+</text></svg>
<svg style="left:1581px;top:12px;" width="17" height="20" viewBox="0 0 17 20"><rect x="1" y="1" width="15" height="18" fill="none" stroke="#444" stroke-width="1.3"/><path d="M3,5 l1.5,1.5 l2,-2.5 M3,10 l1.5,1.5 l2,-2.5 M3,15 l1.5,1.5 l2,-2.5" fill="none" stroke="#444" stroke-width="1"/><path d="M8.5,5.5 h5 M8.5,10.5 h5 M8.5,15.5 h5" stroke="#444" stroke-width="1.3"/></svg>
<svg style="left:1611px;top:12px;" width="20" height="20" viewBox="0 0 20 20"><rect x="1" y="1" width="7" height="7" fill="none" stroke="#444" stroke-width="1.4"/><rect x="1" y="11" width="7" height="7" fill="none" stroke="#444" stroke-width="1.4"/><rect x="11" y="11" width="7" height="7" fill="none" stroke="#444" stroke-width="1.4"/><path d="M14.5,1 v7 M11,4.5 h7" stroke="#444" stroke-width="1.6"/></svg>
<svg style="left:1644px;top:13px;" width="19" height="19" viewBox="0 0 19 19"><path d="M9,1 q8,0 8.5,7 l1,3 h-1.5 v4 h-3 v3 h-8 v-4 q-5,-3 -4,-7 q1,-6 7,-6z" fill="#666"/><circle cx="8" cy="8" r="3" fill="none" stroke="#fff" stroke-width="1.6" stroke-dasharray="1.6,1"/><circle cx="12" cy="12" r="1.7" fill="#fff"/></svg>
<div class="abs" style="left:1673px;top:3px;width:59px;height:33px;background:#1a55b0;border-radius:6px"></div>
<div class="t" style="left:1685px;top:13.0px;font-size:13.6px;line-height:13.6px;color:#fff;font-weight:400;font-style:normal;letter-spacing:0.1px">Share</div>
<svg style="left:1742px;top:12px;" width="20" height="20" viewBox="0 0 20 20"><circle cx="10" cy="10" r="9" fill="#666"/><text x="5.5" y="15.5" font-family="Liberation Sans" font-weight="700" font-size="14" fill="#fff">?</text></svg>
<svg style="left:1768px;top:19px;" width="10" height="6" viewBox="0 0 10 6"><path d="M0,0 h8 l-4,4.5z" fill="#444"/></svg>
<svg style="left:1789px;top:10px;" width="24" height="24" viewBox="0 0 24 24"><rect width="24" height="24" fill="#111"/><path d="M12,3 l7.5,4.3 v9.4 l-7.5,4.3 l-7.5,-4.3 v-9.4z" fill="none" stroke="#1aa3a8" stroke-width="2"/><path d="M15.5,8 l-6,3.5 l6,2 l-6,3.5" fill="none" stroke="#1aa3a8" stroke-width="1.8"/></svg>
<div class="t" style="left:1819px;top:14.7px;font-size:13.8px;line-height:13.8px;color:#333;font-weight:400;font-style:normal;">Andrew Card</div>
<svg style="left:1905px;top:17px;" width="10" height="6" viewBox="0 0 10 6"><path d="M0,0 h8 l-4,4.5z" fill="#444"/></svg>
<svg style="left:10.0px;top:47.5px;" width="20" height="20" viewBox="0 0 20 20"><circle cx="4" cy="4" r="2.8" fill="none" stroke="#333" stroke-width="1.4"/><path d="M4,7 v10 M4,15 q3,0 5,-4" fill="none" stroke="#333" stroke-width="1.4"/><circle cx="4" cy="17" r="1.6" fill="#333"/><circle cx="9.5" cy="10.5" r="1.6" fill="#333"/><path d="M8,2 h11 M11,7 h8 M11,12 h8 M9,17 h10" stroke="#333" stroke-width="1.6"/></svg>
<svg style="left:47.0px;top:47.5px;" width="20" height="20" viewBox="0 0 20 20"><path d="M3,8 l6,-6 v3.5 q8,0 9,9 v3 q-2,-6 -9,-6 v3.5z" fill="#333"/></svg>
<svg style="left:81.0px;top:47.5px;" width="20" height="20" viewBox="0 0 20 20"><path d="M17,8 l-6,-6 v3.5 q-8,0 -9,9 v3 q2,-6 9,-6 v3.5z" fill="#999"/></svg>
<div class="abs" style="left:110.5px;top:45px;width:1.5px;height:25px;background:#d4d4d4"></div>
<svg style="left:120.0px;top:47.5px;" width="20" height="20" viewBox="0 0 20 20"><path d="M3,16 l1,-4 l9.5,-9.5 l3,3 l-9.5,9.5z" fill="none" stroke="#333" stroke-width="1.3"/><path d="M1,19.2 h17" stroke="#2f5f95" stroke-width="0.9"/></svg>
<div class="t" style="left:144px;top:52.4px;font-size:13.7px;line-height:13.7px;color:#333;font-weight:400;font-style:normal;">Sketch</div>
<div class="abs" style="left:199.5px;top:45px;width:1.5px;height:25px;background:#d4d4d4"></div>
<svg style="left:208.5px;top:47.5px;" width="20" height="20" viewBox="0 0 20 20"><path d="M1.5,3.5 l2,-2 h14 v14 l-2,2 h-14z M1.5,3.5 h14 v14 M15.5,3.5 l2,-2" fill="#fff" stroke="#333" stroke-width="1"/><rect x="5" y="7" width="9" height="9" fill="#777" stroke="#333" stroke-width="0.8"/></svg>
<svg style="left:243.0px;top:47.5px;" width="20" height="20" viewBox="0 0 20 20"><path d="M17,5 a8,8 0 1 0 0,10 l-4,-2 a4,4 0 1 1 0,-6z" fill="#888" stroke="#333" stroke-width="1"/><path d="M9,10 h9" stroke="#333" stroke-width="1" stroke-dasharray="2,1"/></svg>
<svg style="left:277.5px;top:47.5px;" width="20" height="20" viewBox="0 0 20 20"><path d="M2,16 q0,-6 6,-6 q3,0 4,-4 q1,-4 5,-4 l1,4 q-3,0 -4,4 q-2,6 -7,6 q-2,0 -2,3z" fill="#888" stroke="#333" stroke-width="1"/><ellipse cx="16.5" cy="3.5" rx="2" ry="1.5" fill="#fff" stroke="#333" stroke-width="0.9"/></svg>
<div class="abs" style="left:305.5px;top:45px;width:1.5px;height:25px;background:#d4d4d4"></div>
<svg style="left:315.0px;top:47.5px;" width="20" height="20" viewBox="0 0 20 20"><path d="M2,17 v-9 q0,-6 6,-6 h9 v15z" fill="#fff" stroke="#333" stroke-width="1.2"/><path d="M2,9 q0,-7 7,-7 l1,2 q-5,0 -6,6z" fill="#777"/></svg>
<svg style="left:345px;top:54px;" width="11" height="7" viewBox="0 0 11 7"><path d="M1,1 l4.5,4.5 l4.5,-4.5" fill="none" stroke="#333" stroke-width="1.7"/></svg>
<svg style="left:367.0px;top:47.5px;" width="20" height="20" viewBox="0 0 20 20"><path d="M2,17 v-10 l5,-5 h10 v15z" fill="#fff" stroke="#333" stroke-width="1.2"/><path d="M2,7 l5,-5 l2,2 l-5,5z" fill="#777"/></svg>
<svg style="left:401.0px;top:47.5px;" width="20" height="20" viewBox="0 0 20 20"><path d="M2,3 l1.5,-1.5 h14 v15 l-1.5,1.5 h-14z" fill="#fff" stroke="#333" stroke-width="1"/><path d="M5,4 h9 v10 h-9z" fill="#888" stroke="#333" stroke-width="0.8"/><path d="M7,4 v8 h7" fill="none" stroke="#fff" stroke-width="1"/></svg>
<svg style="left:435.0px;top:47.5px;" width="20" height="20" viewBox="0 0 20 20"><path d="M2,3 l1.5,-1.5 h14 v15 l-1.5,1.5 h-14z" fill="#fff" stroke="#333" stroke-width="1"/><circle cx="9.5" cy="10" r="4.5" fill="#777" stroke="#333" stroke-width="1"/></svg>
<svg style="left:469.0px;top:47.5px;" width="20" height="20" viewBox="0 0 20 20"><rect x="4" y="2" width="12" height="16" rx="6" ry="2.5" fill="#fff" stroke="#333" stroke-width="1"/><path d="M4.5,7 h11 M4.5,9.5 h11 M4.5,12 h11 M4.5,14.5 h11" stroke="#888" stroke-width="1.2"/></svg>
<svg style="left:502.5px;top:47.5px;" width="20" height="20" viewBox="0 0 20 20"><path d="M2,6 l6,-3 h10 v12 l-6,3 h-10z" fill="#888" stroke="#333" stroke-width="1"/><path d="M8,3 v12 l4,3 M12,6 h6" fill="none" stroke="#333" stroke-width="0.8"/><path d="M10,6 v6 M7.5,9.5 l2.5,3 l2.5,-3" fill="none" stroke="#111" stroke-width="1.5"/></svg>
<svg style="left:532.5px;top:54px;" width="11" height="7" viewBox="0 0 11 7"><path d="M1,1 l4.5,4.5 l4.5,-4.5" fill="none" stroke="#333" stroke-width="1.7"/></svg>
<div class="abs" style="left:549.5px;top:45px;width:1.5px;height:25px;background:#d4d4d4"></div>
<svg style="left:559.0px;top:47.5px;" width="20" height="20" viewBox="0 0 20 20"><rect x="1.5" y="1.5" width="8" height="8" fill="#fff" stroke="#333"/><rect x="9.5" y="1.5" width="8" height="8" fill="#777" stroke="#333"/><rect x="1.5" y="9.5" width="8" height="8" fill="#777" stroke="#333"/><rect x="9.5" y="9.5" width="8" height="8" fill="#777" stroke="#333"/></svg>
<svg style="left:589px;top:54px;" width="11" height="7" viewBox="0 0 11 7"><path d="M1,1 l4.5,4.5 l4.5,-4.5" fill="none" stroke="#333" stroke-width="1.7"/></svg>
<svg style="left:611.0px;top:47.5px;" width="20" height="20" viewBox="0 0 20 20"><path d="M2,5 l3,-2 v15 l-3,0z M6,5 l3,-2 h3 v15 h-6z" fill="#fff" stroke="#333" stroke-width="1"/><path d="M12,5 l3,-3 l2,2 v14 h-5z" fill="#888" stroke="#333" stroke-width="1"/></svg>
<div class="abs" style="left:639.5px;top:45px;width:1.5px;height:25px;background:#d4d4d4"></div>
<svg style="left:649.0px;top:47.5px;" width="20" height="20" viewBox="0 0 20 20"><circle cx="7" cy="10" r="5.8" fill="none" stroke="#333" stroke-width="1.1"/><circle cx="12.5" cy="10" r="5.8" fill="#999" stroke="#333" stroke-width="1.1" fill-opacity="0.8"/></svg>
<svg style="left:683.0px;top:47.5px;" width="20" height="20" viewBox="0 0 20 20"><rect x="1.5" y="9" width="8" height="8" fill="#fff" stroke="#333"/><path d="M13,2 l4,4 l-4,4 l-4,-4z" fill="#888" stroke="#333"/><path d="M3,7 q1,-4 5,-5 M15,12 l0,5 l-3,0" fill="none" stroke="#333" stroke-width="1.3"/></svg>
<svg style="left:713px;top:54px;" width="11" height="7" viewBox="0 0 11 7"><path d="M1,1 l4.5,4.5 l4.5,-4.5" fill="none" stroke="#333" stroke-width="1.7"/></svg>
<div class="abs" style="left:729.5px;top:45px;width:1.5px;height:25px;background:#d4d4d4"></div>
<svg style="left:739.0px;top:47.5px;" width="20" height="20" viewBox="0 0 20 20"><path d="M2,2 l16,2 v14 l-16,-2z" fill="#ddd" stroke="#333" stroke-width="1.2"/><path d="M10,3 v7 h8" fill="none" stroke="#333" stroke-width="1"/></svg>
<svg style="left:773.0px;top:47.5px;" width="20" height="20" viewBox="0 0 20 20"><circle cx="10" cy="10" r="8.5" fill="none" stroke="#333" stroke-width="1.2"/><circle cx="10" cy="10" r="6.5" fill="none" stroke="#333" stroke-width="1"/><path d="M10,5 v5 h5" fill="none" stroke="#333" stroke-width="1.2"/></svg>
<svg style="left:807.0px;top:47.5px;" width="20" height="20" viewBox="0 0 20 20"><path d="M2,12 h6 v-4 h5 v-5 h5 v15 h-16z" fill="#fff" stroke="#333" stroke-width="1.1"/><path d="M2,1 h8 M8,1 v6 M5,4 l3,3 l3,-3" fill="none" stroke="#333" stroke-width="1.2"/></svg>
<div class="t" style="left:840.5px;top:50.0px;font-size:16px;line-height:16px;color:#333;font-weight:700;font-style:normal;">(</div>
<div class="t" style="left:856px;top:50.0px;font-size:16px;line-height:16px;color:#333;font-weight:700;font-style:normal;">)</div>
<div class="t" style="left:846px;top:48.6px;font-size:17px;line-height:17px;color:#333;font-weight:700;font-style:normal;"><i style='font-family:Liberation Serif'>x</i></div>
<div class="t" style="left:874px;top:50.0px;font-size:16px;line-height:16px;color:#333;font-weight:400;font-style:normal;">(</div>
<div class="t" style="left:889.5px;top:50.0px;font-size:16px;line-height:16px;color:#333;font-weight:400;font-style:normal;">)</div>
<svg style="left:875.0px;top:47.5px;" width="20" height="20" viewBox="0 0 20 20"><circle cx="8.5" cy="9" r="3.3" fill="none" stroke="#333" stroke-width="1.5"/><path d="M11,11.5 l3,3" stroke="#333" stroke-width="1.6"/></svg>
<svg style="left:909.0px;top:47.5px;" width="20" height="20" viewBox="0 0 20 20"><path d="M10,0.9000000000000004 L14.6,3.568 L14.6,7.432 L10,10.1 L5.4,7.432 L5.4,3.568Z M5.4,3.568 L10,6.236 L14.6,3.568 M10,6.236 L10,10.1" fill="#fff" stroke="#555" stroke-width="0.9"/><path d="M5.2,9.200000000000001 L9.8,11.868 L9.8,15.732 L5.2,18.4 L0.6000000000000005,15.732 L0.6000000000000005,11.868Z M0.6000000000000005,11.868 L5.2,14.536000000000001 L9.8,11.868 M5.2,14.536000000000001 L5.2,18.4" fill="#fff" stroke="#555" stroke-width="0.9"/><path d="M14.8,9.200000000000001 L19.4,11.868 L19.4,15.732 L14.8,18.4 L10.200000000000001,15.732 L10.200000000000001,11.868Z M10.200000000000001,11.868 L14.8,14.536000000000001 L19.4,11.868 M14.8,14.536000000000001 L14.8,18.4" fill="#fff" stroke="#555" stroke-width="0.9"/></svg>
<div class="abs" style="left:936.5px;top:45px;width:1.5px;height:25px;background:#d4d4d4"></div>
<svg style="left:947.0px;top:47.5px;" width="20" height="20" viewBox="0 0 20 20"><path d="M10,1.5 l8,4 v9 l-8,4 l-8,-4 v-9z" fill="#fff" stroke="#333" stroke-width="1.3"/><path d="M2,5.5 l8,4 l8,-4 M10,9.5 v9" fill="none" stroke="#333" stroke-width="1.1"/><path d="M10,9.5 l8,-4 v9 l-8,4z" fill="#ccc"/></svg>
<svg style="left:981.0px;top:47.5px;" width="20" height="20" viewBox="0 0 20 20"><path d="M1,6 l17,-1 l1,12 l-17,1z" fill="#222"/><circle cx="7" cy="11" r="2.6" fill="#fff"/><circle cx="13" cy="10.5" r="2.6" fill="#fff"/><path d="M6,1 v4 M10,1 v4 M14,1 v4" stroke="#222" stroke-width="1"/><path d="M5,1 h10" stroke="#222" stroke-width="1.2"/></svg>
<svg style="left:1014.5px;top:47.5px;" width="20" height="20" viewBox="0 0 20 20"><circle cx="6" cy="6" r="3.8" fill="none" stroke="#aaa" stroke-width="1.2"/><circle cx="14" cy="14" r="3" fill="none" stroke="#aaa" stroke-width="1.2"/><path d="M8,9 l4,3" stroke="#aaa" stroke-width="1.2"/></svg>
<svg style="left:1049.0px;top:47.5px;" width="20" height="20" viewBox="0 0 20 20"><path d="M1,6 l17,-1 l1,12 l-17,1z" fill="#222"/><circle cx="7" cy="11" r="2.6" fill="#fff"/><circle cx="13" cy="10.5" r="2.6" fill="#fff"/><path d="M6,1 v4 M10,1 v4 M14,1 v4" stroke="#222" stroke-width="1"/><path d="M5,1 h10" stroke="#222" stroke-width="1.2"/></svg>
<svg style="left:1083.0px;top:47.5px;" width="20" height="20" viewBox="0 0 20 20"><path d="M2,4 l2,-2 h14 v14 l-2,2 h-14z" fill="#eee" stroke="#333" stroke-width="1"/><rect x="4" y="4" width="14" height="14" fill="#999"/><rect x="4" y="4" width="7" height="7" fill="#777"/><rect x="11" y="11" width="7" height="7" fill="#777"/></svg>
<svg style="left:1117.0px;top:47.5px;" width="20" height="20" viewBox="0 0 20 20"><path d="M3,2 l3,4 q4,-2 8,0 l3,-4 l2,3 l-3,2 q2,4 0,7 v2 h3 v3 h-18 v-3 h3 v-2 q-2,-3 0,-7 l-3,-2z" fill="#777"/><circle cx="10" cy="11" r="3.5" fill="#fff"/></svg>
<svg style="left:1151.0px;top:47.5px;" width="20" height="20" viewBox="0 0 20 20"><path d="M10,1 l1.6,2.4 l2.8,-0.9 l0.4,2.9 l2.9,0.4 l-0.9,2.8 l2.4,1.6 l-2.4,1.6 l0.9,2.8 l-2.9,0.4 l-0.4,2.9 l-2.8,-0.9 l-1.6,2.4 l-1.6,-2.4 l-2.8,0.9 l-0.4,-2.9 l-2.9,-0.4 l0.9,-2.8 l-2.4,-1.6 l2.4,-1.6 l-0.9,-2.8 l2.9,-0.4 l0.4,-2.9 l2.8,0.9z" fill="#666" stroke="#222" stroke-width="0.8"/><circle cx="10" cy="10" r="3" fill="#fff" stroke="#222" stroke-width="0.8"/></svg>
<svg style="left:1184.5px;top:47.5px;" width="20" height="20" viewBox="0 0 20 20"><path d="M3,2 h14 l-6,8 h-2z" fill="#888"/><path d="M3,2 h14" stroke="#555" stroke-width="1.5"/><path d="M10,10 v5 M4,15 h12 M4,18 h12" stroke="#555" stroke-width="1.6"/></svg>
<div class="abs" style="left:1213.5px;top:45px;width:1.5px;height:25px;background:#d4d4d4"></div>
<svg style="left:1223.0px;top:47.5px;" width="20" height="20" viewBox="0 0 20 20"><path d="M5,2 l3,3" stroke="#222" stroke-width="1.3"/><path d="M1,8 h15 l-7,9z" fill="#222"/><path d="M1,8 l7,-6 l8,6" fill="none" stroke="#222" stroke-width="1.2"/><path d="M16,9 q3,4 2,7 q-1.5,1 -2,-1z" fill="#222"/></svg>
<svg style="left:1257.0px;top:47.5px;" width="20" height="20" viewBox="0 0 20 20"><rect x="1" y="1.5" width="18" height="17" rx="2" fill="#fff" stroke="#555" stroke-width="0.9"/><text x="10" y="14" text-anchor="middle" font-family="Liberation Sans" font-size="10.5" fill="#333">SM</text></svg>
<svg style="left:1291.0px;top:47.5px;" width="20" height="20" viewBox="0 0 20 20"><path d="M2,4 q8,-2 16,0 l-1,12 q-7,2 -14,0z" fill="#fff" stroke="#222" stroke-width="2"/><path d="M3,6 h14" stroke="#222" stroke-width="3"/></svg>
<svg style="left:1325.0px;top:47.5px;" width="20" height="20" viewBox="0 0 20 20"><rect x="1" y="1.5" width="18" height="17" rx="2" fill="#fff" stroke="#555" stroke-width="0.9"/><text x="10" y="14" text-anchor="middle" font-family="Liberation Sans" font-size="10.5" fill="#333">Ai</text></svg>
<svg style="left:1359.0px;top:47.5px;" width="20" height="20" viewBox="0 0 20 20"><rect x="1" y="1.5" width="18" height="17" rx="2" fill="#fff" stroke="#555" stroke-width="0.9"/><text x="10" y="14" text-anchor="middle" font-family="Liberation Sans" font-size="10.5" fill="#333">Ds</text></svg>
<div class="abs" style="left:1387.5px;top:45px;width:1.5px;height:25px;background:#d4d4d4"></div>
<svg style="left:1396.5px;top:47.5px;" width="20" height="20" viewBox="0 0 20 20"><path d="M2,4 q0,-2 3,-2 v12 q0,3 3,3 h9 v-5 q0,-3 -3,-3 l2,-5 q3,0 3,3 v12 h-12 q-5,0 -5,-4z" fill="#ccc" stroke="#333" stroke-width="1"/></svg>
<svg style="left:1431.0px;top:47.5px;" width="20" height="20" viewBox="0 0 20 20"><path d="M1,14 h9 v-12 q5,1 6,6 v10 h-10 q-5,0 -5,-4z" fill="#bbb" stroke="#333" stroke-width="1.1"/><path d="M10,2 v12" stroke="#333" stroke-width="0.9"/></svg>
<svg style="left:1464.0px;top:47.5px;" width="20" height="20" viewBox="0 0 20 20"><path d="M1,12 l7,-4 h10 l-7,5 h-6z" fill="#ccc" stroke="#333" stroke-width="1"/><path d="M11,6 l3,-3 l4,5" fill="#aaa" stroke="#333" stroke-width="1"/><path d="M4,1 l13,18" stroke="#333" stroke-width="1"/></svg>
<svg style="left:1499.0px;top:47.5px;" width="20" height="20" viewBox="0 0 20 20"><path d="M4,2 h11 v16 h-14 v-7 h8 v-5 h-5z" fill="#ddd" stroke="#333" stroke-width="1.4"/><path d="M4,2 h5 v16 h-8 v-7 h8" fill="#999"/></svg>
<svg style="left:1533.0px;top:47.5px;" width="20" height="20" viewBox="0 0 20 20"><rect x="2" y="2" width="17" height="17" fill="#f0f0f0"/><path d="M2,19 v-17 h17" fill="none" stroke="#333" stroke-width="1"/><path d="M2,9 l7,-7 h-7z" fill="#888"/><path d="M2,9 l7,-7" stroke="#333" stroke-width="1"/></svg>
<svg style="left:1567.0px;top:47.5px;" width="20" height="20" viewBox="0 0 20 20"><path d="M2,5 l2,-3 h10 v14 l-2,3 h-10z" fill="#fff" stroke="#333" stroke-width="1"/><path d="M5,8 v9 M5,8 l7,6" stroke="#888" stroke-width="2"/><path d="M10,7 l3,3 l6,-8" fill="none" stroke="#111" stroke-width="2"/></svg>
<svg style="left:1601.0px;top:47.5px;" width="20" height="20" viewBox="0 0 20 20"><path d="M1,2 h15 v7 h-9 v5 h4 v5 M13,14 v5" fill="none" stroke="#333" stroke-width="1.4"/></svg>
<div class="abs" style="left:1629.5px;top:45px;width:1.5px;height:25px;background:#d4d4d4"></div>
<svg style="left:1639.0px;top:47.5px;" width="20" height="20" viewBox="0 0 20 20"><rect x="1.5" y="1.5" width="17" height="17" rx="3" fill="none" stroke="#333" stroke-width="1.4" stroke-dasharray="3,2.5"/><path d="M10,5.5 v9 M5.5,10 h9" stroke="#333" stroke-width="1.8"/></svg>
<div class="abs" style="left:1667.5px;top:45px;width:1.5px;height:25px;background:#d4d4d4"></div>
<svg style="left:1677.0px;top:47.5px;" width="20" height="20" viewBox="0 0 20 20"><path d="M4,2 q-2,0 -2,2 v4 l-1.5,2 l1.5,2 v4 q0,2 2,2 M16,2 q2,0 2,2 v4 l1.5,2 l-1.5,2 v4 q0,2 -2,2" fill="none" stroke="#333" stroke-width="1"/><path d="M10,7 l5,2.5 v5 l-5,2.5 l-5,-2.5 v-5z" fill="#fff" stroke="#333" stroke-width="1"/><circle cx="13.5" cy="3.5" r="2" fill="#333"/></svg>
<svg style="left:1701px;top:54px;" width="11" height="7" viewBox="0 0 11 7"><path d="M1,1 l4.5,4.5 l4.5,-4.5" fill="none" stroke="#333" stroke-width="1.7"/></svg>
<div class="abs" style="left:1733px;top:42px;width:161px;height:32px;background:#ececec;border-radius:5px"></div>
<div class="t" style="left:1743px;top:52.0px;font-size:13.6px;line-height:13.6px;color:#333;font-weight:400;font-style:normal;">Search tools...</div>
<div class="abs" style="left:1833px;top:49px;width:33px;height:19px;border:1px solid #bbb;border-radius:2px;background:#f2f2f2"></div>
<div class="t" style="left:1836px;top:54.1px;font-size:10.5px;line-height:10.5px;color:#333;font-weight:400;font-style:normal;">alt/&#8997;</div>
<div class="abs" style="left:1867px;top:49px;width:17px;height:19px;border:1px solid #bbb;border-radius:2px;background:#f2f2f2"></div>
<div class="t" style="left:1872px;top:54.1px;font-size:10.5px;line-height:10.5px;color:#333;font-weight:400;font-style:normal;">c</div>
<svg style="left:10.0px;top:84.0px;" width="20" height="18" viewBox="0 0 20 18"><circle cx="5.9" cy="8" r="3" fill="#333"/><path d="M5.9,0.5 v4 M5.9,11.5 v5.5" stroke="#333" stroke-width="1.8" stroke-dasharray="1.6,1.4"/><path d="M15,9.5 v7.5 M11.2,13.2 h7.6" stroke="#1a55b0" stroke-width="1.9"/></svg>
<svg style="left:10.0px;top:118.0px;" width="20" height="18" viewBox="0 0 20 18"><ellipse cx="10" cy="7" rx="8.5" ry="5.5" fill="#333"/><path d="M4,11 l-3,5 l7,-4z" fill="#333"/></svg>
<svg style="left:10.5px;top:153.0px;" width="19" height="18" viewBox="0 0 19 18"><path d="M2,1.5 h11 v3 M13,11 v5.5 h-11 v-15" fill="none" stroke="#333" stroke-width="1.4"/><path d="M4.5,5.5 h6 M4.5,8.5 h5 M4.5,11.5 h4" stroke="#333" stroke-width="1.3"/><path d="M9,13 l1,-3 l6,-6 l2,2 l-6,6z" fill="#333"/></svg>
<svg style="left:10.5px;top:188.0px;" width="19" height="18" viewBox="0 0 19 18"><circle cx="11" cy="10.5" r="6" fill="none" stroke="#333" stroke-width="1.6"/><path d="M9,2 h4 M11,2 v2.5 M11,10.5 l3,-3" stroke="#333" stroke-width="1.5"/><path d="M1,9 h4 M2,12 h3 M3,15 h3" stroke="#333" stroke-width="1.2"/></svg>
<div class="abs" style="left:0;top:215px;width:39px;height:1px;background:#dedede"></div>
<svg style="left:11.5px;top:225.0px;" width="17" height="18" viewBox="0 0 17 18"><rect x="2" y="1.5" width="13" height="15" rx="1" fill="none" stroke="#333" stroke-width="1.3"/><path d="M4,5 l1,1 l2,-2 M4,9 l1,1 l2,-2 M4,13 l1,1 l2,-2" fill="none" stroke="#333" stroke-width="1"/><path d="M8.5,5.5 h4.5 M8.5,9.5 h4.5 M8.5,13.5 h4.5" stroke="#333" stroke-width="1.2"/></svg>
<svg style="left:10.5px;top:1055.5px;" width="19" height="19" viewBox="0 0 19 19"><path d="M1,2 h16 v5 q-4,-3 -8,1 q-2,2 -1,5 h-7z" fill="#333"/><circle cx="11" cy="11" r="3.6" fill="none" stroke="#333" stroke-width="1.6"/><path d="M13.5,13.5 l3.5,3.5" stroke="#333" stroke-width="1.8"/></svg>
<div class="abs" style="left:40px;top:76px;width:206px;height:1px;background:#d0d0d0"></div>
<svg style="left:50.0px;top:92.0px;" width="16" height="16" viewBox="0 0 16 16"><path d="M1,2 h14 l-5.5,6 v6.5 l-3,-1.5 v-5z" fill="none" stroke="#333" stroke-width="1.2" stroke-linejoin="round"/></svg>
<div class="abs" style="left:79px;top:84px;width:158px;height:29px;border:1px solid #c8c8c8;border-radius:4px;background:#fff"></div>
<div class="t" style="left:86px;top:93.1px;font-size:12.9px;line-height:12.9px;color:#8a8a8a;font-weight:400;font-style:italic;">Filter by name or type</div>
<div class="t" style="left:44px;top:123.7px;font-size:13.4px;line-height:13.4px;color:#2b2b2b;font-weight:400;font-style:normal;-webkit-text-stroke:0.45px #2b2b2b">Features (24)</div>
<svg style="left:146.0px;top:121.5px;" width="18" height="17" viewBox="0 0 18 17"><path d="M1,3 h5 l1.5,1.5 h8 v10 h-14.5z" fill="none" stroke="#333" stroke-width="1.2"/><path d="M5,8 v6 M2,11 h6" stroke="#1a55b0" stroke-width="1.8"/></svg>
<div class="abs" style="left:179px;top:123px;width:3.8px;height:13.5px;background:#2b2b2b"></div><div class="abs" style="left:186.5px;top:123px;width:3.8px;height:13.5px;background:#2b2b2b"></div>
<svg style="left:206.5px;top:121.0px;" width="17" height="18" viewBox="0 0 17 18"><circle cx="8" cy="10" r="6.5" fill="none" stroke="#333" stroke-width="1.6"/><path d="M6,1.5 h4 M8,1.5 v2 M13,3.5 l1.5,1.5 M8,10 l2,2.5" stroke="#333" stroke-width="1.5"/></svg>
<svg style="left:44px;top:153px;" width="13" height="8" viewBox="0 0 13 8"><path d="M1.5,1.5 l5,5 l5,-5" fill="none" stroke="#555" stroke-width="1.8"/></svg>
<div class="t" style="left:63px;top:151.0px;font-size:13px;line-height:13px;color:#2e2e2e;font-weight:400;font-style:normal;">Default geometry</div>
<div class="abs" style="left:49px;top:172px;width:1px;height:101px;background:#cfcfcf"></div>
<svg style="left:64.0px;top:175.0px;" width="16" height="16" viewBox="0 0 16 16"><circle cx="8" cy="8" r="3.5" fill="none" stroke="#666" stroke-width="1"/><circle cx="8" cy="8" r="1.5" fill="#666"/></svg>
<div class="t" style="left:85px;top:177.0px;font-size:13px;line-height:13px;color:#2e2e2e;font-weight:400;font-style:normal;">Origin</div>
<svg style="left:65.0px;top:201.0px;" width="16" height="16" viewBox="0 0 16 16"><path d="M2,1.5 l3,2 h9 v11 l-3,-2 h-9z" fill="#e4e4e4" stroke="#aaa" stroke-width="1"/><path d="M2,1.5 v11 M5,3.5 v6 h9" fill="none" stroke="#aaa" stroke-width="1"/></svg>
<div class="t" style="left:85px;top:203.0px;font-size:13px;line-height:13px;color:#9e9e9e;font-weight:400;font-style:normal;">Top</div>
<svg style="left:65.0px;top:227.0px;" width="16" height="16" viewBox="0 0 16 16"><path d="M2,1.5 l3,2 h9 v11 l-3,-2 h-9z" fill="#e4e4e4" stroke="#aaa" stroke-width="1"/><path d="M2,1.5 v11 M5,3.5 v6 h9" fill="none" stroke="#aaa" stroke-width="1"/></svg>
<div class="t" style="left:85px;top:229.0px;font-size:13px;line-height:13px;color:#9e9e9e;font-weight:400;font-style:normal;">Front</div>
<svg style="left:65.0px;top:253.0px;" width="16" height="16" viewBox="0 0 16 16"><path d="M2,1.5 l3,2 h9 v11 l-3,-2 h-9z" fill="#e4e4e4" stroke="#aaa" stroke-width="1"/><path d="M2,1.5 v11 M5,3.5 v6 h9" fill="none" stroke="#aaa" stroke-width="1"/></svg>
<div class="t" style="left:85px;top:255.0px;font-size:13px;line-height:13px;color:#9e9e9e;font-weight:400;font-style:normal;">Right</div>
<svg style="left:46px;top:281px;" width="8" height="13" viewBox="0 0 8 13"><path d="M1.5,1.5 l5,5 l-5,5" fill="none" stroke="#555" stroke-width="1.8"/></svg>
<svg style="left:65.0px;top:279.0px;" width="16" height="16" viewBox="0 0 16 16"><path d="M8,1.5 l6,3 v7 l-6,3 l-6,-3 v-7z M2,4.5 l6,3 l6,-3 M8,7.5 v7" fill="none" stroke="#aaa" stroke-width="1.1"/></svg>
<div class="t" style="left:86px;top:281.0px;font-size:13px;line-height:13px;color:#9e9e9e;font-weight:400;font-style:normal;">Origin Cube</div>
<svg style="left:197px;top:277px;" width="6" height="20" viewBox="0 0 6 20"><circle cx="3" cy="10" r="2.6" fill="#333"/><path d="M3,1 v5 M3,14 v5" stroke="#333" stroke-width="1.4" stroke-dasharray="1.4,1.4"/></svg>
<svg style="left:46px;top:307px;" width="8" height="13" viewBox="0 0 8 13"><path d="M1.5,1.5 l5,5 l-5,5" fill="none" stroke="#555" stroke-width="1.8"/></svg>
<svg style="left:65.0px;top:305.0px;" width="16" height="16" viewBox="0 0 16 16"><path d="M1.5,2.5 h4.5 l1.5,2 h7 v9.5 h-13z" fill="none" stroke="#555" stroke-width="1.1"/></svg>
<div class="t" style="left:86px;top:307.0px;font-size:13px;line-height:13px;color:#2e2e2e;font-weight:400;font-style:normal;">Frame (5)</div>
<svg style="left:46.0px;top:331.0px;" width="16" height="16" viewBox="0 0 16 16"><path d="M3,12.5 l1,-3 l8,-8 l2,2 l-8,8z" fill="none" stroke="#aaa" stroke-width="1.1"/><path d="M1,15 h13" stroke="#aaa" stroke-width="1"/></svg>
<div class="t" style="left:66px;top:333.0px;font-size:13px;line-height:13px;color:#9e9e9e;font-weight:400;font-style:normal;">Gearbox Layout</div>
<svg style="left:44px;top:361px;" width="13" height="8" viewBox="0 0 13 8"><path d="M1.5,1.5 l5,5 l5,-5" fill="none" stroke="#555" stroke-width="1.8"/></svg>
<svg style="left:65.0px;top:357.0px;" width="16" height="16" viewBox="0 0 16 16"><path d="M1.5,2.5 h4.5 l1.5,2 h7 v9.5 h-13z" fill="none" stroke="#555" stroke-width="1.1"/></svg>
<div class="t" style="left:86px;top:359.0px;font-size:13px;line-height:13px;color:#2e2e2e;font-weight:400;font-style:normal;">GB Plates (6)</div>
<div class="abs" style="left:49px;top:380px;width:1px;height:179px;background:#cfcfcf"></div><div class="abs" style="left:46px;top:558px;width:5px;height:1px;background:#cfcfcf"></div>
<svg style="left:65.0px;top:383.0px;" width="16" height="16" viewBox="0 0 16 16"><path d="M3,12.5 l1,-3 l8,-8 l2,2 l-8,8z" fill="none" stroke="#aaa" stroke-width="1.1"/><path d="M1,15 h13" stroke="#aaa" stroke-width="1"/></svg>
<div class="t" style="left:85px;top:385.0px;font-size:13px;line-height:13px;color:#9e9e9e;font-weight:400;font-style:normal;">Plate Sketch</div>
<svg style="left:65.0px;top:409.0px;" width="16" height="16" viewBox="0 0 16 16"><path d="M1.5,3 l1.5,-1.5 h11 v11 l-1.5,1.5 h-11z" fill="#fff" stroke="#444" stroke-width="1"/><path d="M1.5,3 h11 v11 M12.5,3 l1.5,-1.5" fill="none" stroke="#444" stroke-width="0.8"/><rect x="4.5" y="6" width="7.5" height="7.5" fill="#777" stroke="#444" stroke-width="0.7"/></svg>
<div class="t" style="left:85px;top:411.0px;font-size:13px;line-height:13px;color:#2e2e2e;font-weight:400;font-style:normal;">Plate Extrude</div>
<svg style="left:65.0px;top:435.0px;" width="16" height="16" viewBox="0 0 16 16"><path d="M3,12.5 l1,-3 l8,-8 l2,2 l-8,8z" fill="none" stroke="#aaa" stroke-width="1.1"/><path d="M1,15 h13" stroke="#aaa" stroke-width="1"/></svg>
<div class="t" style="left:85px;top:437.0px;font-size:13px;line-height:13px;color:#9e9e9e;font-weight:400;font-style:normal;">Inner plate</div>
<svg style="left:65.0px;top:461.0px;" width="16" height="16" viewBox="0 0 16 16"><path d="M1.5,3 l1.5,-1.5 h11 v11 l-1.5,1.5 h-11z" fill="#fff" stroke="#444" stroke-width="1"/><path d="M1.5,3 h11 v11 M12.5,3 l1.5,-1.5" fill="none" stroke="#444" stroke-width="0.8"/><rect x="4.5" y="6" width="7.5" height="7.5" fill="#777" stroke="#444" stroke-width="0.7"/></svg>
<div class="t" style="left:85px;top:463.0px;font-size:13px;line-height:13px;color:#2e2e2e;font-weight:400;font-style:normal;">Inner Plate</div>
<div class="abs" style="left:64px;top:492px;width:171px;height:6px;background:#b4b4b4"></div>
<svg style="left:65.0px;top:513.0px;" width="16" height="16" viewBox="0 0 16 16"><path d="M2,14.5 v-8 q0,-5 5,-5 h7.5 v13z" fill="#fff" stroke="#aaa" stroke-width="1.1"/><path d="M2,7 q0,-6 6,-6" fill="none" stroke="#ccc" stroke-width="2"/></svg>
<div class="t" style="left:85px;top:515.0px;font-size:13px;line-height:13px;color:#9e9e9e;font-weight:400;font-style:italic;">Fillet Plate</div>
<svg style="left:65.0px;top:539.0px;" width="16" height="16" viewBox="0 0 16 16"><path d="M1,6 l13,-1 l1,9 l-13,1z" fill="#aaa"/><circle cx="6" cy="10" r="2" fill="#fff"/><circle cx="10.5" cy="9.5" r="2" fill="#fff"/><path d="M4,1 v4 M8,1 v4 M12,1 v4" stroke="#aaa" stroke-width="0.9"/></svg>
<div class="t" style="left:85px;top:541.0px;font-size:13px;line-height:13px;color:#9e9e9e;font-weight:400;font-style:italic;">Gearbox Spacer</div>
<svg style="left:197px;top:537px;" width="6" height="20" viewBox="0 0 6 20"><circle cx="3" cy="10" r="2.6" fill="#333"/><path d="M3,1 v5 M3,14 v5" stroke="#333" stroke-width="1.4" stroke-dasharray="1.4,1.4"/></svg>
<svg style="left:46.0px;top:565.0px;" width="16" height="16" viewBox="0 0 16 16"><circle cx="5" cy="5" r="3.5" fill="none" stroke="#c4c4c4" stroke-width="1.1"/><circle cx="11" cy="11" r="3.5" fill="none" stroke="#c4c4c4" stroke-width="1.1"/><path d="M7,8 l2,1" stroke="#c4c4c4"/></svg>
<div class="t" style="left:66px;top:567.0px;font-size:13px;line-height:13px;color:#9e9e9e;font-weight:400;font-style:italic;">Main Belt</div>
<svg style="left:197px;top:563px;" width="6" height="20" viewBox="0 0 6 20"><circle cx="3" cy="10" r="2.6" fill="#333"/><path d="M3,1 v5 M3,14 v5" stroke="#333" stroke-width="1.4" stroke-dasharray="1.4,1.4"/></svg>
<svg style="left:46.0px;top:591.0px;" width="16" height="16" viewBox="0 0 16 16"><path d="M1,6 l13,-1 l1,9 l-13,1z" fill="#aaa"/><circle cx="6" cy="10" r="2" fill="#fff"/><circle cx="10.5" cy="9.5" r="2" fill="#fff"/><path d="M4,1 v4 M8,1 v4 M12,1 v4" stroke="#aaa" stroke-width="0.9"/></svg>
<div class="t" style="left:66px;top:593.0px;font-size:13px;line-height:13px;color:#9e9e9e;font-weight:400;font-style:italic;">Inter Shaft</div>
<svg style="left:197px;top:589px;" width="6" height="20" viewBox="0 0 6 20"><circle cx="3" cy="10" r="2.6" fill="#333"/><path d="M3,1 v5 M3,14 v5" stroke="#333" stroke-width="1.4" stroke-dasharray="1.4,1.4"/></svg>
<svg style="left:46.0px;top:617.0px;" width="16" height="16" viewBox="0 0 16 16"><path d="M1,6 l13,-1 l1,9 l-13,1z" fill="#aaa"/><circle cx="6" cy="10" r="2" fill="#fff"/><circle cx="10.5" cy="9.5" r="2" fill="#fff"/><path d="M4,1 v4 M8,1 v4 M12,1 v4" stroke="#aaa" stroke-width="0.9"/></svg>
<div class="t" style="left:66px;top:619.0px;font-size:13px;line-height:13px;color:#9e9e9e;font-weight:400;font-style:italic;">Output Shaft</div>
<svg style="left:197px;top:615px;" width="6" height="20" viewBox="0 0 6 20"><circle cx="3" cy="10" r="2.6" fill="#333"/><path d="M3,1 v5 M3,14 v5" stroke="#333" stroke-width="1.4" stroke-dasharray="1.4,1.4"/></svg>
<svg style="left:46px;top:645px;" width="8" height="13" viewBox="0 0 8 13"><path d="M1.5,1.5 l5,5 l-5,5" fill="none" stroke="#555" stroke-width="1.8"/></svg>
<svg style="left:65.0px;top:643.0px;" width="16" height="16" viewBox="0 0 16 16"><path d="M1.5,2.5 h4.5 l1.5,2 h7 v9.5 h-13z" fill="none" stroke="#aaa" stroke-width="1.1"/></svg>
<div class="t" style="left:86px;top:645.0px;font-size:13px;line-height:13px;color:#9e9e9e;font-weight:400;font-style:italic;">Pocketing (4)</div>
<div class="abs" style="left:40px;top:707px;width:200px;height:1px;background:#d6d6d6"></div>
<svg style="left:44px;top:717px;" width="13" height="8" viewBox="0 0 13 8"><path d="M1.5,1.5 l5,5 l5,-5" fill="none" stroke="#555" stroke-width="1.8"/></svg>
<div class="t" style="left:63px;top:715.0px;font-size:13px;line-height:13px;color:#2e2e2e;font-weight:400;font-style:normal;">Parts (7)</div>
<svg style="left:65.0px;top:739.0px;" width="16" height="16" viewBox="0 0 16 16"><path d="M0.8,9 L3.8,7.2 L7,7.2 L7,2 L10,0.6 L14.2,2 L14.2,13.2 L11.2,15 L3.8,15 L0.8,13.2Z M0.8,9 L3.8,10.8 L11.2,10.8 M3.8,10.8 V15 M11.2,10.8 V15 M11.2,10.8 V3.4 L7,2 M11.2,3.4 L14.2,2" fill="none" stroke="#aaa" stroke-width="1" stroke-linejoin="round"/></svg>
<div class="t" style="left:85px;top:741.0px;font-size:13px;line-height:13px;color:#9e9e9e;font-weight:400;font-style:normal;">Origin Cube</div>
<svg style="left:65.0px;top:765.0px;" width="16" height="16" viewBox="0 0 16 16"><path d="M0.8,9 L3.8,7.2 L7,7.2 L7,2 L10,0.6 L14.2,2 L14.2,13.2 L11.2,15 L3.8,15 L0.8,13.2Z M0.8,9 L3.8,10.8 L11.2,10.8 M3.8,10.8 V15 M11.2,10.8 V15 M11.2,10.8 V3.4 L7,2 M11.2,3.4 L14.2,2" fill="none" stroke="#444" stroke-width="1" stroke-linejoin="round"/></svg>
<div class="t" style="left:85px;top:767.0px;font-size:13px;line-height:13px;color:#2e2e2e;font-weight:400;font-style:normal;">Tube 1"x1"x7"</div>
<svg style="left:65.0px;top:791.0px;" width="16" height="16" viewBox="0 0 16 16"><path d="M0.8,9 L3.8,7.2 L7,7.2 L7,2 L10,0.6 L14.2,2 L14.2,13.2 L11.2,15 L3.8,15 L0.8,13.2Z M0.8,9 L3.8,10.8 L11.2,10.8 M3.8,10.8 V15 M11.2,10.8 V15 M11.2,10.8 V3.4 L7,2 M11.2,3.4 L14.2,2" fill="none" stroke="#444" stroke-width="1" stroke-linejoin="round"/></svg>
<div class="t" style="left:85px;top:793.0px;font-size:13px;line-height:13px;color:#2e2e2e;font-weight:400;font-style:normal;">Tube 1"x1"x7"</div>
<svg style="left:65.0px;top:817.0px;" width="16" height="16" viewBox="0 0 16 16"><path d="M0.8,9 L3.8,7.2 L7,7.2 L7,2 L10,0.6 L14.2,2 L14.2,13.2 L11.2,15 L3.8,15 L0.8,13.2Z M0.8,9 L3.8,10.8 L11.2,10.8 M3.8,10.8 V15 M11.2,10.8 V15 M11.2,10.8 V3.4 L7,2 M11.2,3.4 L14.2,2" fill="none" stroke="#444" stroke-width="1" stroke-linejoin="round"/></svg>
<div class="t" style="left:85px;top:819.0px;font-size:13px;line-height:13px;color:#2e2e2e;font-weight:400;font-style:normal;">Tube 1"x1"x8"</div>
<svg style="left:65.0px;top:843.0px;" width="16" height="16" viewBox="0 0 16 16"><path d="M0.8,9 L3.8,7.2 L7,7.2 L7,2 L10,0.6 L14.2,2 L14.2,13.2 L11.2,15 L3.8,15 L0.8,13.2Z M0.8,9 L3.8,10.8 L11.2,10.8 M3.8,10.8 V15 M11.2,10.8 V15 M11.2,10.8 V3.4 L7,2 M11.2,3.4 L14.2,2" fill="none" stroke="#444" stroke-width="1" stroke-linejoin="round"/></svg>
<div class="t" style="left:85px;top:845.0px;font-size:13px;line-height:13px;color:#2e2e2e;font-weight:400;font-style:normal;">Part 5</div>
<svg style="left:65.0px;top:869.0px;" width="16" height="16" viewBox="0 0 16 16"><path d="M0.8,9 L3.8,7.2 L7,7.2 L7,2 L10,0.6 L14.2,2 L14.2,13.2 L11.2,15 L3.8,15 L0.8,13.2Z M0.8,9 L3.8,10.8 L11.2,10.8 M3.8,10.8 V15 M11.2,10.8 V15 M11.2,10.8 V3.4 L7,2 M11.2,3.4 L14.2,2" fill="none" stroke="#444" stroke-width="1" stroke-linejoin="round"/></svg>
<div class="t" style="left:85px;top:871.0px;font-size:13px;line-height:13px;color:#2e2e2e;font-weight:400;font-style:normal;">Motor Plate</div>
<svg style="left:65.0px;top:895.0px;" width="16" height="16" viewBox="0 0 16 16"><path d="M0.8,9 L3.8,7.2 L7,7.2 L7,2 L10,0.6 L14.2,2 L14.2,13.2 L11.2,15 L3.8,15 L0.8,13.2Z M0.8,9 L3.8,10.8 L11.2,10.8 M3.8,10.8 V15 M11.2,10.8 V15 M11.2,10.8 V3.4 L7,2 M11.2,3.4 L14.2,2" fill="none" stroke="#444" stroke-width="1" stroke-linejoin="round"/></svg>
<div class="t" style="left:85px;top:897.0px;font-size:13px;line-height:13px;color:#2e2e2e;font-weight:400;font-style:normal;">Inner Plate</div>
<div class="abs" style="left:245px;top:538px;width:33px;height:34px;background:#fff;border:1px solid #c4c4c4;border-left:none"></div>
<svg style="left:250px;top:545px;" width="22" height="22" viewBox="0 0 22 22"><path d="M2.2,2.3 l3,3 l3,-3" fill="none" stroke="#333" stroke-width="1.4"/><path d="M5.1,7 v13" stroke="#888" stroke-width="1.6"/><path d="M8.5,3.4 h11.5 M7.2,8.5 h12.8 M7.2,13.5 h12.8 M7.2,18.4 h12.8" stroke="#333" stroke-width="1.2"/></svg>
<div class="abs" style="left:40px;top:1050px;width:1879px;height:29px;background:#d6d6d6"></div>
<div class="abs" style="left:40px;top:1050px;width:33px;height:29px;background:#d6d6d6"></div>
<svg style="left:47px;top:1056px;" width="18" height="18" viewBox="0 0 18 18"><path d="M8.5,1.5 v15 M1,9 h15" stroke="#555" stroke-width="2.6"/></svg>
<div class="abs" style="left:74px;top:1051px;width:40px;height:28px;background:#e2e2e2"></div>
<svg style="left:83px;top:1055px;" width="20" height="18" viewBox="0 0 20 18"><path d="M9.5,1 l9,8 h-2.5 v8 h-4.5 v-5 h-4 v5 h-4.5 v-8 h-2.5 l4,-3.5 v-3.5 h2 v1.8z" fill="#666"/><path d="M14,3 h2.5 v4" fill="#666"/></svg>
<svg style="left:108px;top:1051px;" width="130" height="28" viewBox="0 0 130 28"><path d="M0,0 h118 l8,14 l-8,14 h-118 l8,-14z" fill="#f4f4f4"/></svg>
<svg style="left:125px;top:1054px;" width="20" height="18" viewBox="0 0 20 18"><path d="M1.5,2.5 h5 l1.5,2 h10 v11 h-16.5z" fill="none" stroke="#444" stroke-width="1.2"/></svg>
<div class="t" style="left:150px;top:1056.1px;font-size:14px;line-height:14px;color:#666;font-weight:400;font-style:normal;">Exercise 3</div>
<div class="abs" style="left:236px;top:1051px;width:201px;height:28px;background:#e9e9e9"></div>
<svg style="left:249px;top:1055px;" width="15" height="15" viewBox="0 0 15 15"><circle cx="7" cy="7.5" r="6.5" fill="#7aa0d8"/><path d="M7,3 v6 M4.5,7 l2.5,3 l2.5,-3" fill="none" stroke="#fff" stroke-width="1.8"/></svg>
<svg style="left:266px;top:1053px;" width="19" height="19" viewBox="0 0 19 19"><path d="M1.5,4 l3,-2.5 h12 v12 l-3,3 h-12z" fill="#fff" stroke="#444" stroke-width="1.1"/><rect x="4" y="4.5" width="9.5" height="9.5" fill="#888"/><path d="M1.5,4 h12 v13 M13.5,4 l3,-2.5" fill="none" stroke="#444" stroke-width="1"/></svg>
<div class="t" style="left:289px;top:1057.1px;font-size:14px;line-height:14px;color:#777;font-weight:400;font-style:normal;">Exercise 3 Assembly</div>
<div class="abs" style="left:438px;top:1051px;width:199px;height:28px;background:#fff"></div>
<div class="abs" style="left:441px;top:1076px;width:194px;height:3px;background:#1a4d9c;border-radius:2px"></div>
<svg style="left:450px;top:1054px;" width="18" height="19" viewBox="0 0 18 19"><path d="M1.5,5 l3,-2 h5 v15 h-8z M9.5,5 l3,-2 l3,0 q2,1 2,3 v12 h-8z M4.5,3 v15" fill="none" stroke="#444" stroke-width="1.1"/></svg>
<div class="t" style="left:471px;top:1057.4px;font-size:13.7px;line-height:13.7px;color:#333;font-weight:400;font-style:normal;">Exercise 3 Part Studio</div>
<svg style="left:1821px;top:1028px;" width="18" height="14" viewBox="0 0 18 14"><ellipse cx="11" cy="4.5" rx="5.5" ry="3.5" fill="none" stroke="#222" stroke-width="1.3"/><ellipse cx="11" cy="4.5" rx="2" ry="1.2" fill="none" stroke="#222" stroke-width="0.9"/><path d="M1,7 h14 q2,0 2,2 v1 q0,2 -2,2 h-14z" fill="#fff" stroke="#222" stroke-width="1.3"/><path d="M3,10 v2 M6,10 v2 M9,10 v2 M12,10 v2" stroke="#555" stroke-width="0.7"/></svg>
<svg style="left:1855px;top:1029px;" width="20" height="13" viewBox="0 0 20 13"><path d="M1,12 a9,10 0 0 1 18,0z" fill="#fff" stroke="#222" stroke-width="1.3"/><path d="M6,12 a4,4 0 0 1 8,0" fill="none" stroke="#222" stroke-width="1.3"/><path d="M3.5,10 a6.5,7 0 0 1 13,0" fill="none" stroke="#999" stroke-width="0.7" stroke-dasharray="1,1"/></svg>
<svg style="left:1892px;top:1028px;" width="16" height="15" viewBox="0 0 16 15"><path d="M1,2 h14 M8,2 v10" stroke="#222" stroke-width="1.3"/><path d="M2,2 l-1.5,7 h3z M14,2 l-1.5,7 h3z" fill="none" stroke="#222" stroke-width="1"/><path d="M0,9 h4 M12,9 h4" stroke="#222" stroke-width="2"/><path d="M1,13.5 h14" stroke="#222" stroke-width="2"/></svg>
<div class="abs" style="left:1888px;top:433px;width:32px;height:34px;background:#fff;border:1px solid #cfcfcf;border-right:none"></div><svg style="left:1894px;top:439px;" width="22" height="20" viewBox="0 0 22 20"><path d="M2,17 l6,-15 l3,1 l-4,14z" fill="#999"/><path d="M5,17 l8,-13 l3,2 l-7,11z" fill="#bbb"/><rect x="1" y="12" width="20" height="6" rx="1" fill="#eee" stroke="#888" stroke-width="0.8"/><circle cx="4" cy="15" r="1" fill="#555"/></svg>
<div class="abs" style="left:1888px;top:466px;width:32px;height:34px;background:#fff;border:1px solid #cfcfcf;border-right:none"></div><svg style="left:1894px;top:472px;" width="22" height="20" viewBox="0 0 22 20"><path d="M10,7 l6,-3 l6,3 v7 l-6,3 l-6,-3z M10,7 l6,3 l6,-3 M16,10 v7" fill="none" stroke="#222" stroke-width="1.1" transform="translate(-2,1)"/><rect x="1" y="1" width="9" height="8" fill="#2a62b5"/><path d="M1,4 h9 M1,6.5 h9 M4,1 v8 M7,1 v8" stroke="#fff" stroke-width="0.7"/></svg>
<div class="abs" style="left:1888px;top:499px;width:32px;height:34px;background:#fff;border:1px solid #cfcfcf;border-right:none"></div><svg style="left:1894px;top:505px;" width="22" height="20" viewBox="0 0 22 20"><rect x="2" y="1" width="8" height="8" fill="#555"/><path d="M2,4 h8 M2,6.5 h8 M5,1 v8 M7.5,1 v8" stroke="#fff" stroke-width="0.7"/><path d="M9,9 l5,-2.5 l5,2.5 v5 l-5,2.5 l-5,-2.5z" fill="#fff" stroke="#222" stroke-width="1"/><path d="M3,10 q-2,0 -2,2 v5 q0,2 2,2 M20,10 q1.5,0 1.5,2 v5 q0,2 -1.5,2" fill="none" stroke="#222" stroke-width="1"/></svg>
<div class="abs" style="left:1888px;top:532px;width:32px;height:33px;background:#fff;border:1px solid #cfcfcf;border-right:none"></div><svg style="left:1894px;top:538px;" width="22" height="20" viewBox="0 0 22 20"><rect x="1" y="1" width="8" height="8" fill="#333"/><path d="M1,4 h8 M1,6.5 h8 M4,1 v8 M6.5,1 v8" stroke="#fff" stroke-width="0.7"/><path d="M1,3 v16" stroke="#222" stroke-width="1.3"/><text x="8" y="17" font-family="Liberation Serif" font-style="italic" font-weight="700" font-size="13" fill="#222">x)</text></svg>
<div class="abs" style="left:1888px;top:576px;width:32px;height:34px;background:#fff;border:1px solid #cfcfcf;border-right:none"></div><svg style="left:1894px;top:582px;" width="22" height="20" viewBox="0 0 22 20"><rect x="0" y="0" width="22" height="21" rx="3" fill="#e6e6e6"/><path d="M2,7 l17,-1 l1,12 l-17,1z" fill="#222"/><circle cx="8" cy="12" r="2.8" fill="#5b9bd5"/><circle cx="14" cy="11.5" r="2.8" fill="#5b9bd5"/><path d="M6,2 v4 M11,2 v4 M15,2 v4" stroke="#444" stroke-width="1"/></svg>
<div class="abs" style="left:1888px;top:609px;width:32px;height:34px;background:#fff;border:1px solid #cfcfcf;border-right:none"></div><svg style="left:1894px;top:615px;" width="22" height="20" viewBox="0 0 22 20"><rect x="1" y="0" width="21" height="20" rx="1" fill="#4caf50"/><path d="M4,4 q4,-1 7,1 v11 q-3,-2 -7,-1z M18,4 q-4,-1 -7,1 v11 q3,-2 7,-1z" fill="#fff"/></svg>
<div class="abs" style="left:1888px;top:642px;width:32px;height:34px;background:#fff;border:1px solid #cfcfcf;border-right:none"></div><svg style="left:1894px;top:648px;" width="22" height="20" viewBox="0 0 22 20"><rect x="1" y="0" width="21" height="20" rx="1" fill="#1747a6"/><rect x="2.5" y="1.5" width="18" height="17" fill="none" stroke="#111" stroke-width="1"/><path d="M4,4 q4,-1 7,1 v11 q-3,-2 -7,-1z M18,4 q-4,-1 -7,1 v11 q3,-2 7,-1z" fill="#fff"/></svg>
<svg style="left:0;top:0" width="1919" height="1079" viewBox="0 0 1919 1079">
<path d="M1823,100.5 L1830,92 L1837,100.5Z" fill="#8e8e8e"/>
<path d="M1823,231 L1830,240 L1837,231Z" fill="#8e8e8e"/>
<path d="M1765.5,159 L1756,166 L1765.5,173Z" fill="#8e8e8e"/>
<path d="M1895.5,159 L1905,166 L1895.5,173Z" fill="#8e8e8e"/>
<path d="M1809,101 Q1792,106 1783,116" fill="none" stroke="#8e8e8e" stroke-width="4.5"/>
<path d="M1776,124 L1777.5,111 L1789,120Z" fill="#8e8e8e"/>
<path d="M1851,101 Q1868,106 1877,116" fill="none" stroke="#8e8e8e" stroke-width="4.5"/>
<path d="M1884,124 L1882.5,111 L1871,120Z" fill="#8e8e8e"/>
<path d="M1826,125 L1858,131 L1869,142 L1869,189 L1842,212 L1800,200 L1791,189 L1791,146 L1803,130Z" fill="#f4f6f7" stroke="#e2e5e7" stroke-width="3"/>
<path d="M1791,146 L1841,162 L1869,140" fill="none" stroke="#e2e5e7" stroke-width="4"/>
<path d="M1841,162 L1841,212" fill="none" stroke="#e8eaec" stroke-width="4"/>
<rect x="1797" y="157" width="38" height="45" rx="8" fill="#fdfdfd" transform="skewY(14) translate(0,-448)"/>
<path d="M1841,212 L1841,163" stroke="#5252c8" stroke-width="1.4"/>
<path d="M1841,212 L1790,198" stroke="#3a9a3a" stroke-width="1.4"/>
<path d="M1841,212 L1870,188.5" stroke="#cc3b3b" stroke-width="1.4"/>
<text x="1837.5" y="157.5" font-family="Liberation Sans" font-size="11" fill="#5a5ad0">Z</text>
<text x="1776.5" y="200" font-family="Liberation Sans" font-size="12" fill="#2f9a2f">Y</text>
<text x="1872" y="188" font-family="Liberation Sans" font-size="11.5" fill="#d03a3a">X</text>
<text x="0" y="0" font-family="Liberation Sans" font-size="11" fill="#222" transform="translate(1805,181) rotate(11)">Left</text>
<text x="0" y="0" font-family="Liberation Sans" font-style="italic" font-size="9.5" fill="#444" transform="translate(1851.5,183) rotate(-62)">Front</text>
<text x="0" y="0" font-family="Liberation Sans" font-size="9" fill="#333" transform="translate(1822,146) rotate(-35)">Top</text>
<path d="M1875,223 L1883.5,227 L1883.5,237 L1875,241 L1866,237 L1866,227Z" fill="#e8e8e8" stroke="#333" stroke-width="1"/>
<path d="M1866,227 L1875,231 L1883.5,227 M1875,231 L1875,241" fill="none" stroke="#333" stroke-width="0.9"/>
<path d="M1866,227 L1875,231 L1875,241 L1866,237Z" fill="#aaa"/>
<path d="M1892,230 L1899.5,230 L1895.7,234Z" fill="#222"/>
</svg>
</body></html>
